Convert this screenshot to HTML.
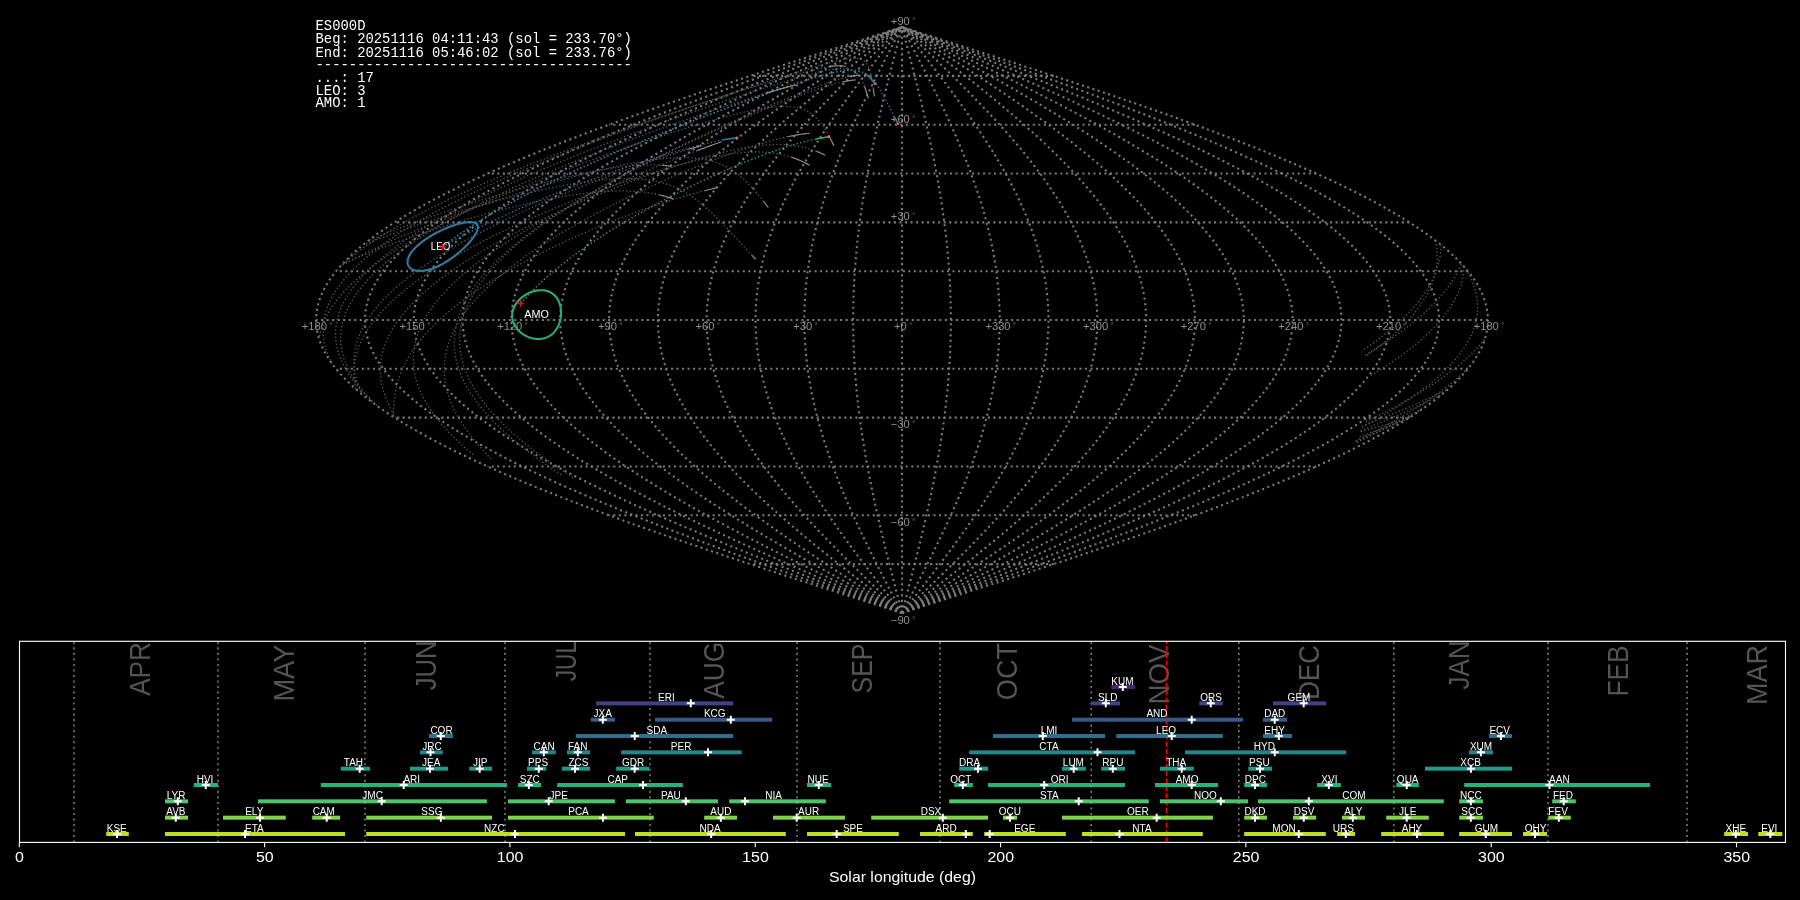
<!DOCTYPE html>
<html><head><meta charset="utf-8"><style>
html,body{margin:0;padding:0;background:#000;width:1800px;height:900px;overflow:hidden}
svg{display:block}
</style></head><body>
<div style="will-change:transform;width:1800px;height:900px"><svg width="1800" height="900" viewBox="0 0 1800 900">
<rect width="1800" height="900" fill="#000"/>
<g fill="none" stroke="#7a7a7a" stroke-width="2.08" stroke-dasharray="2.08 3.44">
<path d="M1053.64 564.12 L1051.11 564.12 L1048.59 564.12 L1046.06 564.12 L1043.53 564.12 L1041.01 564.12 L1038.48 564.12 L1035.95 564.12 L1033.42 564.12 L1030.9 564.12 L1028.37 564.12 L1025.84 564.12 L1023.31 564.12 L1020.79 564.12 L1018.26 564.12 L1015.73 564.12 L1013.2 564.12 L1010.68 564.12 L1008.15 564.12 L1005.62 564.12 L1003.09 564.12 L1000.57 564.12 L998.04 564.12 L995.51 564.12 L992.99 564.12 L990.46 564.12 L987.93 564.12 L985.4 564.12 L982.88 564.12 L980.35 564.12 L977.82 564.12 L975.29 564.12 L972.77 564.12 L970.24 564.12 L967.71 564.12 L965.18 564.12 L962.66 564.12 L960.13 564.12 L957.6 564.12 L955.07 564.12 L952.55 564.12 L950.02 564.12 L947.49 564.12 L944.97 564.12 L942.44 564.12 L939.91 564.12 L937.38 564.12 L934.86 564.12 L932.33 564.12 L929.8 564.12 L927.27 564.12 L924.75 564.12 L922.22 564.12 L919.69 564.12 L917.16 564.12 L914.64 564.12 L912.11 564.12 L909.58 564.12 L907.05 564.12 L904.53 564.12 L902 564.12 L899.47 564.12 L896.95 564.12 L894.42 564.12 L891.89 564.12 L889.36 564.12 L886.84 564.12 L884.31 564.12 L881.78 564.12 L879.25 564.12 L876.73 564.12 L874.2 564.12 L871.67 564.12 L869.14 564.12 L866.62 564.12 L864.09 564.12 L861.56 564.12 L859.03 564.12 L856.51 564.12 L853.98 564.12 L851.45 564.12 L848.93 564.12 L846.4 564.12 L843.87 564.12 L841.34 564.12 L838.82 564.12 L836.29 564.12 L833.76 564.12 L831.23 564.12 L828.71 564.12 L826.18 564.12 L823.65 564.12 L821.12 564.12 L818.6 564.12 L816.07 564.12 L813.54 564.12 L811.01 564.12 L808.49 564.12 L805.96 564.12 L803.43 564.12 L800.91 564.12 L798.38 564.12 L795.85 564.12 L793.32 564.12 L790.8 564.12 L788.27 564.12 L785.74 564.12 L783.21 564.12 L780.69 564.12 L778.16 564.12 L775.63 564.12 L773.1 564.12 L770.58 564.12 L768.05 564.12 L765.52 564.12 L762.99 564.12 L760.47 564.12 L757.94 564.12 L755.41 564.12 L752.89 564.12 L750.36 564.12"/>
<path d="M1194.95 515.3 L1190.07 515.3 L1185.18 515.3 L1180.3 515.3 L1175.42 515.3 L1170.54 515.3 L1165.65 515.3 L1160.77 515.3 L1155.89 515.3 L1151.01 515.3 L1146.12 515.3 L1141.24 515.3 L1136.36 515.3 L1131.48 515.3 L1126.6 515.3 L1121.71 515.3 L1116.83 515.3 L1111.95 515.3 L1107.07 515.3 L1102.18 515.3 L1097.3 515.3 L1092.42 515.3 L1087.54 515.3 L1082.65 515.3 L1077.77 515.3 L1072.89 515.3 L1068.01 515.3 L1063.12 515.3 L1058.24 515.3 L1053.36 515.3 L1048.47 515.3 L1043.59 515.3 L1038.71 515.3 L1033.83 515.3 L1028.94 515.3 L1024.06 515.3 L1019.18 515.3 L1014.3 515.3 L1009.41 515.3 L1004.53 515.3 L999.65 515.3 L994.77 515.3 L989.88 515.3 L985 515.3 L980.12 515.3 L975.24 515.3 L970.36 515.3 L965.47 515.3 L960.59 515.3 L955.71 515.3 L950.83 515.3 L945.94 515.3 L941.06 515.3 L936.18 515.3 L931.29 515.3 L926.41 515.3 L921.53 515.3 L916.65 515.3 L911.76 515.3 L906.88 515.3 L902 515.3 L897.12 515.3 L892.24 515.3 L887.35 515.3 L882.47 515.3 L877.59 515.3 L872.71 515.3 L867.82 515.3 L862.94 515.3 L858.06 515.3 L853.17 515.3 L848.29 515.3 L843.41 515.3 L838.53 515.3 L833.64 515.3 L828.76 515.3 L823.88 515.3 L819 515.3 L814.12 515.3 L809.23 515.3 L804.35 515.3 L799.47 515.3 L794.59 515.3 L789.7 515.3 L784.82 515.3 L779.94 515.3 L775.05 515.3 L770.17 515.3 L765.29 515.3 L760.41 515.3 L755.52 515.3 L750.64 515.3 L745.76 515.3 L740.88 515.3 L736 515.3 L731.11 515.3 L726.23 515.3 L721.35 515.3 L716.46 515.3 L711.58 515.3 L706.7 515.3 L701.82 515.3 L696.93 515.3 L692.05 515.3 L687.17 515.3 L682.29 515.3 L677.4 515.3 L672.52 515.3 L667.64 515.3 L662.76 515.3 L657.88 515.3 L652.99 515.3 L648.11 515.3 L643.23 515.3 L638.35 515.3 L633.46 515.3 L628.58 515.3 L623.7 515.3 L618.81 515.3 L613.93 515.3 L609.05 515.3"/>
<path d="M1316.29 466.48 L1309.39 466.48 L1302.48 466.48 L1295.58 466.48 L1288.67 466.48 L1281.77 466.48 L1274.86 466.48 L1267.96 466.48 L1261.05 466.48 L1254.15 466.48 L1247.24 466.48 L1240.34 466.48 L1233.44 466.48 L1226.53 466.48 L1219.63 466.48 L1212.72 466.48 L1205.82 466.48 L1198.91 466.48 L1192.01 466.48 L1185.1 466.48 L1178.2 466.48 L1171.29 466.48 L1164.39 466.48 L1157.48 466.48 L1150.58 466.48 L1143.67 466.48 L1136.77 466.48 L1129.86 466.48 L1122.96 466.48 L1116.05 466.48 L1109.15 466.48 L1102.24 466.48 L1095.34 466.48 L1088.43 466.48 L1081.53 466.48 L1074.62 466.48 L1067.72 466.48 L1060.81 466.48 L1053.91 466.48 L1047 466.48 L1040.1 466.48 L1033.19 466.48 L1026.29 466.48 L1019.38 466.48 L1012.48 466.48 L1005.57 466.48 L998.67 466.48 L991.76 466.48 L984.86 466.48 L977.95 466.48 L971.05 466.48 L964.14 466.48 L957.24 466.48 L950.33 466.48 L943.43 466.48 L936.52 466.48 L929.62 466.48 L922.71 466.48 L915.81 466.48 L908.9 466.48 L902 466.48 L895.1 466.48 L888.19 466.48 L881.29 466.48 L874.38 466.48 L867.48 466.48 L860.57 466.48 L853.67 466.48 L846.76 466.48 L839.86 466.48 L832.95 466.48 L826.05 466.48 L819.14 466.48 L812.24 466.48 L805.33 466.48 L798.43 466.48 L791.52 466.48 L784.62 466.48 L777.71 466.48 L770.81 466.48 L763.9 466.48 L757 466.48 L750.09 466.48 L743.19 466.48 L736.28 466.48 L729.38 466.48 L722.47 466.48 L715.57 466.48 L708.66 466.48 L701.76 466.48 L694.85 466.48 L687.95 466.48 L681.04 466.48 L674.14 466.48 L667.23 466.48 L660.33 466.48 L653.42 466.48 L646.52 466.48 L639.61 466.48 L632.71 466.48 L625.8 466.48 L618.9 466.48 L611.99 466.48 L605.09 466.48 L598.18 466.48 L591.28 466.48 L584.37 466.48 L577.47 466.48 L570.56 466.48 L563.66 466.48 L556.76 466.48 L549.85 466.48 L542.95 466.48 L536.04 466.48 L529.14 466.48 L522.23 466.48 L515.33 466.48 L508.42 466.48 L501.52 466.48 L494.61 466.48 L487.71 466.48"/>
<path d="M1409.4 417.65 L1400.95 417.65 L1392.49 417.65 L1384.03 417.65 L1375.58 417.65 L1367.12 417.65 L1358.66 417.65 L1350.21 417.65 L1341.75 417.65 L1333.29 417.65 L1324.84 417.65 L1316.38 417.65 L1307.92 417.65 L1299.47 417.65 L1291.01 417.65 L1282.55 417.65 L1274.1 417.65 L1265.64 417.65 L1257.18 417.65 L1248.73 417.65 L1240.27 417.65 L1231.81 417.65 L1223.36 417.65 L1214.9 417.65 L1206.44 417.65 L1197.99 417.65 L1189.53 417.65 L1181.07 417.65 L1172.62 417.65 L1164.16 417.65 L1155.7 417.65 L1147.25 417.65 L1138.79 417.65 L1130.33 417.65 L1121.88 417.65 L1113.42 417.65 L1104.96 417.65 L1096.5 417.65 L1088.05 417.65 L1079.59 417.65 L1071.13 417.65 L1062.68 417.65 L1054.22 417.65 L1045.76 417.65 L1037.31 417.65 L1028.85 417.65 L1020.39 417.65 L1011.94 417.65 L1003.48 417.65 L995.02 417.65 L986.57 417.65 L978.11 417.65 L969.65 417.65 L961.2 417.65 L952.74 417.65 L944.28 417.65 L935.83 417.65 L927.37 417.65 L918.91 417.65 L910.46 417.65 L902 417.65 L893.54 417.65 L885.09 417.65 L876.63 417.65 L868.17 417.65 L859.72 417.65 L851.26 417.65 L842.8 417.65 L834.35 417.65 L825.89 417.65 L817.43 417.65 L808.98 417.65 L800.52 417.65 L792.06 417.65 L783.61 417.65 L775.15 417.65 L766.69 417.65 L758.24 417.65 L749.78 417.65 L741.32 417.65 L732.87 417.65 L724.41 417.65 L715.95 417.65 L707.5 417.65 L699.04 417.65 L690.58 417.65 L682.12 417.65 L673.67 417.65 L665.21 417.65 L656.75 417.65 L648.3 417.65 L639.84 417.65 L631.38 417.65 L622.93 417.65 L614.47 417.65 L606.01 417.65 L597.56 417.65 L589.1 417.65 L580.64 417.65 L572.19 417.65 L563.73 417.65 L555.27 417.65 L546.82 417.65 L538.36 417.65 L529.9 417.65 L521.45 417.65 L512.99 417.65 L504.53 417.65 L496.08 417.65 L487.62 417.65 L479.16 417.65 L470.71 417.65 L462.25 417.65 L453.79 417.65 L445.34 417.65 L436.88 417.65 L428.42 417.65 L419.97 417.65 L411.51 417.65 L403.05 417.65 L394.6 417.65"/>
<path d="M1467.94 368.82 L1458.5 368.82 L1449.07 368.82 L1439.64 368.82 L1430.21 368.82 L1420.77 368.82 L1411.34 368.82 L1401.91 368.82 L1392.48 368.82 L1383.05 368.82 L1373.61 368.82 L1364.18 368.82 L1354.75 368.82 L1345.32 368.82 L1335.88 368.82 L1326.45 368.82 L1317.02 368.82 L1307.59 368.82 L1298.16 368.82 L1288.72 368.82 L1279.29 368.82 L1269.86 368.82 L1260.43 368.82 L1250.99 368.82 L1241.56 368.82 L1232.13 368.82 L1222.7 368.82 L1213.26 368.82 L1203.83 368.82 L1194.4 368.82 L1184.97 368.82 L1175.54 368.82 L1166.1 368.82 L1156.67 368.82 L1147.24 368.82 L1137.81 368.82 L1128.37 368.82 L1118.94 368.82 L1109.51 368.82 L1100.08 368.82 L1090.65 368.82 L1081.21 368.82 L1071.78 368.82 L1062.35 368.82 L1052.92 368.82 L1043.48 368.82 L1034.05 368.82 L1024.62 368.82 L1015.19 368.82 L1005.75 368.82 L996.32 368.82 L986.89 368.82 L977.46 368.82 L968.03 368.82 L958.59 368.82 L949.16 368.82 L939.73 368.82 L930.3 368.82 L920.86 368.82 L911.43 368.82 L902 368.82 L892.57 368.82 L883.14 368.82 L873.7 368.82 L864.27 368.82 L854.84 368.82 L845.41 368.82 L835.97 368.82 L826.54 368.82 L817.11 368.82 L807.68 368.82 L798.25 368.82 L788.81 368.82 L779.38 368.82 L769.95 368.82 L760.52 368.82 L751.08 368.82 L741.65 368.82 L732.22 368.82 L722.79 368.82 L713.35 368.82 L703.92 368.82 L694.49 368.82 L685.06 368.82 L675.63 368.82 L666.19 368.82 L656.76 368.82 L647.33 368.82 L637.9 368.82 L628.46 368.82 L619.03 368.82 L609.6 368.82 L600.17 368.82 L590.74 368.82 L581.3 368.82 L571.87 368.82 L562.44 368.82 L553.01 368.82 L543.57 368.82 L534.14 368.82 L524.71 368.82 L515.28 368.82 L505.84 368.82 L496.41 368.82 L486.98 368.82 L477.55 368.82 L468.12 368.82 L458.68 368.82 L449.25 368.82 L439.82 368.82 L430.39 368.82 L420.95 368.82 L411.52 368.82 L402.09 368.82 L392.66 368.82 L383.23 368.82 L373.79 368.82 L364.36 368.82 L354.93 368.82 L345.5 368.82 L336.06 368.82"/>
<path d="M1487.9 320 L1478.13 320 L1468.37 320 L1458.61 320 L1448.84 320 L1439.07 320 L1429.31 320 L1419.55 320 L1409.78 320 L1400.01 320 L1390.25 320 L1380.48 320 L1370.72 320 L1360.95 320 L1351.19 320 L1341.42 320 L1331.66 320 L1321.89 320 L1312.13 320 L1302.37 320 L1292.6 320 L1282.84 320 L1273.07 320 L1263.31 320 L1253.54 320 L1243.78 320 L1234.01 320 L1224.24 320 L1214.48 320 L1204.71 320 L1194.95 320 L1185.18 320 L1175.42 320 L1165.65 320 L1155.89 320 L1146.12 320 L1136.36 320 L1126.6 320 L1116.83 320 L1107.07 320 L1097.3 320 L1087.54 320 L1077.77 320 L1068.01 320 L1058.24 320 L1048.47 320 L1038.71 320 L1028.94 320 L1019.18 320 L1009.41 320 L999.65 320 L989.88 320 L980.12 320 L970.36 320 L960.59 320 L950.83 320 L941.06 320 L931.29 320 L921.53 320 L911.76 320 L902 320 L892.24 320 L882.47 320 L872.71 320 L862.94 320 L853.17 320 L843.41 320 L833.64 320 L823.88 320 L814.12 320 L804.35 320 L794.59 320 L784.82 320 L775.06 320 L765.29 320 L755.52 320 L745.76 320 L736 320 L726.23 320 L716.47 320 L706.7 320 L696.93 320 L687.17 320 L677.4 320 L667.64 320 L657.88 320 L648.11 320 L638.35 320 L628.58 320 L618.82 320 L609.05 320 L599.29 320 L589.52 320 L579.75 320 L569.99 320 L560.23 320 L550.46 320 L540.69 320 L530.93 320 L521.16 320 L511.4 320 L501.63 320 L491.87 320 L482.11 320 L472.34 320 L462.57 320 L452.81 320 L443.05 320 L433.28 320 L423.52 320 L413.75 320 L403.99 320 L394.22 320 L384.46 320 L374.69 320 L364.93 320 L355.16 320 L345.39 320 L335.63 320 L325.87 320 L316.1 320"/>
<path d="M1467.94 271.18 L1458.5 271.18 L1449.07 271.18 L1439.64 271.18 L1430.21 271.18 L1420.77 271.18 L1411.34 271.18 L1401.91 271.18 L1392.48 271.18 L1383.05 271.18 L1373.61 271.18 L1364.18 271.18 L1354.75 271.18 L1345.32 271.18 L1335.88 271.18 L1326.45 271.18 L1317.02 271.18 L1307.59 271.18 L1298.16 271.18 L1288.72 271.18 L1279.29 271.18 L1269.86 271.18 L1260.43 271.18 L1250.99 271.18 L1241.56 271.18 L1232.13 271.18 L1222.7 271.18 L1213.26 271.18 L1203.83 271.18 L1194.4 271.18 L1184.97 271.18 L1175.54 271.18 L1166.1 271.18 L1156.67 271.18 L1147.24 271.18 L1137.81 271.18 L1128.37 271.18 L1118.94 271.18 L1109.51 271.18 L1100.08 271.18 L1090.65 271.18 L1081.21 271.18 L1071.78 271.18 L1062.35 271.18 L1052.92 271.18 L1043.48 271.18 L1034.05 271.18 L1024.62 271.18 L1015.19 271.18 L1005.75 271.18 L996.32 271.18 L986.89 271.18 L977.46 271.18 L968.03 271.18 L958.59 271.18 L949.16 271.18 L939.73 271.18 L930.3 271.18 L920.86 271.18 L911.43 271.18 L902 271.18 L892.57 271.18 L883.14 271.18 L873.7 271.18 L864.27 271.18 L854.84 271.18 L845.41 271.18 L835.97 271.18 L826.54 271.18 L817.11 271.18 L807.68 271.18 L798.25 271.18 L788.81 271.18 L779.38 271.18 L769.95 271.18 L760.52 271.18 L751.08 271.18 L741.65 271.18 L732.22 271.18 L722.79 271.18 L713.35 271.18 L703.92 271.18 L694.49 271.18 L685.06 271.18 L675.63 271.18 L666.19 271.18 L656.76 271.18 L647.33 271.18 L637.9 271.18 L628.46 271.18 L619.03 271.18 L609.6 271.18 L600.17 271.18 L590.74 271.18 L581.3 271.18 L571.87 271.18 L562.44 271.18 L553.01 271.18 L543.57 271.18 L534.14 271.18 L524.71 271.18 L515.28 271.18 L505.84 271.18 L496.41 271.18 L486.98 271.18 L477.55 271.18 L468.12 271.18 L458.68 271.18 L449.25 271.18 L439.82 271.18 L430.39 271.18 L420.95 271.18 L411.52 271.18 L402.09 271.18 L392.66 271.18 L383.23 271.18 L373.79 271.18 L364.36 271.18 L354.93 271.18 L345.5 271.18 L336.06 271.18"/>
<path d="M1409.4 222.35 L1400.95 222.35 L1392.49 222.35 L1384.03 222.35 L1375.58 222.35 L1367.12 222.35 L1358.66 222.35 L1350.21 222.35 L1341.75 222.35 L1333.29 222.35 L1324.84 222.35 L1316.38 222.35 L1307.92 222.35 L1299.47 222.35 L1291.01 222.35 L1282.55 222.35 L1274.1 222.35 L1265.64 222.35 L1257.18 222.35 L1248.73 222.35 L1240.27 222.35 L1231.81 222.35 L1223.36 222.35 L1214.9 222.35 L1206.44 222.35 L1197.99 222.35 L1189.53 222.35 L1181.07 222.35 L1172.62 222.35 L1164.16 222.35 L1155.7 222.35 L1147.25 222.35 L1138.79 222.35 L1130.33 222.35 L1121.88 222.35 L1113.42 222.35 L1104.96 222.35 L1096.5 222.35 L1088.05 222.35 L1079.59 222.35 L1071.13 222.35 L1062.68 222.35 L1054.22 222.35 L1045.76 222.35 L1037.31 222.35 L1028.85 222.35 L1020.39 222.35 L1011.94 222.35 L1003.48 222.35 L995.02 222.35 L986.57 222.35 L978.11 222.35 L969.65 222.35 L961.2 222.35 L952.74 222.35 L944.28 222.35 L935.83 222.35 L927.37 222.35 L918.91 222.35 L910.46 222.35 L902 222.35 L893.54 222.35 L885.09 222.35 L876.63 222.35 L868.17 222.35 L859.72 222.35 L851.26 222.35 L842.8 222.35 L834.35 222.35 L825.89 222.35 L817.43 222.35 L808.98 222.35 L800.52 222.35 L792.06 222.35 L783.61 222.35 L775.15 222.35 L766.69 222.35 L758.24 222.35 L749.78 222.35 L741.32 222.35 L732.87 222.35 L724.41 222.35 L715.95 222.35 L707.5 222.35 L699.04 222.35 L690.58 222.35 L682.12 222.35 L673.67 222.35 L665.21 222.35 L656.75 222.35 L648.3 222.35 L639.84 222.35 L631.38 222.35 L622.93 222.35 L614.47 222.35 L606.01 222.35 L597.56 222.35 L589.1 222.35 L580.64 222.35 L572.19 222.35 L563.73 222.35 L555.27 222.35 L546.82 222.35 L538.36 222.35 L529.9 222.35 L521.45 222.35 L512.99 222.35 L504.53 222.35 L496.08 222.35 L487.62 222.35 L479.16 222.35 L470.71 222.35 L462.25 222.35 L453.79 222.35 L445.34 222.35 L436.88 222.35 L428.42 222.35 L419.97 222.35 L411.51 222.35 L403.05 222.35 L394.6 222.35"/>
<path d="M1316.29 173.53 L1309.39 173.53 L1302.48 173.53 L1295.58 173.53 L1288.67 173.53 L1281.77 173.53 L1274.86 173.53 L1267.96 173.53 L1261.05 173.53 L1254.15 173.53 L1247.24 173.53 L1240.34 173.53 L1233.44 173.53 L1226.53 173.53 L1219.63 173.53 L1212.72 173.53 L1205.82 173.53 L1198.91 173.53 L1192.01 173.53 L1185.1 173.53 L1178.2 173.53 L1171.29 173.53 L1164.39 173.53 L1157.48 173.53 L1150.58 173.53 L1143.67 173.53 L1136.77 173.53 L1129.86 173.53 L1122.96 173.53 L1116.05 173.53 L1109.15 173.53 L1102.24 173.53 L1095.34 173.53 L1088.43 173.53 L1081.53 173.53 L1074.62 173.53 L1067.72 173.53 L1060.81 173.53 L1053.91 173.53 L1047 173.53 L1040.1 173.53 L1033.19 173.53 L1026.29 173.53 L1019.38 173.53 L1012.48 173.53 L1005.57 173.53 L998.67 173.53 L991.76 173.53 L984.86 173.53 L977.95 173.53 L971.05 173.53 L964.14 173.53 L957.24 173.53 L950.33 173.53 L943.43 173.53 L936.52 173.53 L929.62 173.53 L922.71 173.53 L915.81 173.53 L908.9 173.53 L902 173.53 L895.1 173.53 L888.19 173.53 L881.29 173.53 L874.38 173.53 L867.48 173.53 L860.57 173.53 L853.67 173.53 L846.76 173.53 L839.86 173.53 L832.95 173.53 L826.05 173.53 L819.14 173.53 L812.24 173.53 L805.33 173.53 L798.43 173.53 L791.52 173.53 L784.62 173.53 L777.71 173.53 L770.81 173.53 L763.9 173.53 L757 173.53 L750.09 173.53 L743.19 173.53 L736.28 173.53 L729.38 173.53 L722.47 173.53 L715.57 173.53 L708.66 173.53 L701.76 173.53 L694.85 173.53 L687.95 173.53 L681.04 173.53 L674.14 173.53 L667.23 173.53 L660.33 173.53 L653.42 173.53 L646.52 173.53 L639.61 173.53 L632.71 173.53 L625.8 173.53 L618.9 173.53 L611.99 173.53 L605.09 173.53 L598.18 173.53 L591.28 173.53 L584.37 173.53 L577.47 173.53 L570.56 173.53 L563.66 173.53 L556.76 173.53 L549.85 173.53 L542.95 173.53 L536.04 173.53 L529.14 173.53 L522.23 173.53 L515.33 173.53 L508.42 173.53 L501.52 173.53 L494.61 173.53 L487.71 173.53"/>
<path d="M1194.95 124.7 L1190.07 124.7 L1185.18 124.7 L1180.3 124.7 L1175.42 124.7 L1170.54 124.7 L1165.65 124.7 L1160.77 124.7 L1155.89 124.7 L1151.01 124.7 L1146.12 124.7 L1141.24 124.7 L1136.36 124.7 L1131.48 124.7 L1126.6 124.7 L1121.71 124.7 L1116.83 124.7 L1111.95 124.7 L1107.07 124.7 L1102.18 124.7 L1097.3 124.7 L1092.42 124.7 L1087.54 124.7 L1082.65 124.7 L1077.77 124.7 L1072.89 124.7 L1068.01 124.7 L1063.12 124.7 L1058.24 124.7 L1053.36 124.7 L1048.47 124.7 L1043.59 124.7 L1038.71 124.7 L1033.83 124.7 L1028.94 124.7 L1024.06 124.7 L1019.18 124.7 L1014.3 124.7 L1009.41 124.7 L1004.53 124.7 L999.65 124.7 L994.77 124.7 L989.88 124.7 L985 124.7 L980.12 124.7 L975.24 124.7 L970.36 124.7 L965.47 124.7 L960.59 124.7 L955.71 124.7 L950.83 124.7 L945.94 124.7 L941.06 124.7 L936.18 124.7 L931.29 124.7 L926.41 124.7 L921.53 124.7 L916.65 124.7 L911.76 124.7 L906.88 124.7 L902 124.7 L897.12 124.7 L892.24 124.7 L887.35 124.7 L882.47 124.7 L877.59 124.7 L872.71 124.7 L867.82 124.7 L862.94 124.7 L858.06 124.7 L853.17 124.7 L848.29 124.7 L843.41 124.7 L838.53 124.7 L833.64 124.7 L828.76 124.7 L823.88 124.7 L819 124.7 L814.12 124.7 L809.23 124.7 L804.35 124.7 L799.47 124.7 L794.59 124.7 L789.7 124.7 L784.82 124.7 L779.94 124.7 L775.05 124.7 L770.17 124.7 L765.29 124.7 L760.41 124.7 L755.52 124.7 L750.64 124.7 L745.76 124.7 L740.88 124.7 L736 124.7 L731.11 124.7 L726.23 124.7 L721.35 124.7 L716.46 124.7 L711.58 124.7 L706.7 124.7 L701.82 124.7 L696.93 124.7 L692.05 124.7 L687.17 124.7 L682.29 124.7 L677.4 124.7 L672.52 124.7 L667.64 124.7 L662.76 124.7 L657.88 124.7 L652.99 124.7 L648.11 124.7 L643.23 124.7 L638.35 124.7 L633.46 124.7 L628.58 124.7 L623.7 124.7 L618.81 124.7 L613.93 124.7 L609.05 124.7"/>
<path d="M1053.64 75.88 L1051.11 75.88 L1048.59 75.88 L1046.06 75.88 L1043.53 75.88 L1041.01 75.88 L1038.48 75.88 L1035.95 75.88 L1033.42 75.88 L1030.9 75.88 L1028.37 75.88 L1025.84 75.88 L1023.31 75.88 L1020.79 75.88 L1018.26 75.88 L1015.73 75.88 L1013.2 75.88 L1010.68 75.88 L1008.15 75.88 L1005.62 75.88 L1003.09 75.88 L1000.57 75.88 L998.04 75.88 L995.51 75.88 L992.99 75.88 L990.46 75.88 L987.93 75.88 L985.4 75.88 L982.88 75.88 L980.35 75.88 L977.82 75.88 L975.29 75.88 L972.77 75.88 L970.24 75.88 L967.71 75.88 L965.18 75.88 L962.66 75.88 L960.13 75.88 L957.6 75.88 L955.07 75.88 L952.55 75.88 L950.02 75.88 L947.49 75.88 L944.97 75.88 L942.44 75.88 L939.91 75.88 L937.38 75.88 L934.86 75.88 L932.33 75.88 L929.8 75.88 L927.27 75.88 L924.75 75.88 L922.22 75.88 L919.69 75.88 L917.16 75.88 L914.64 75.88 L912.11 75.88 L909.58 75.88 L907.05 75.88 L904.53 75.88 L902 75.88 L899.47 75.88 L896.95 75.88 L894.42 75.88 L891.89 75.88 L889.36 75.88 L886.84 75.88 L884.31 75.88 L881.78 75.88 L879.25 75.88 L876.73 75.88 L874.2 75.88 L871.67 75.88 L869.14 75.88 L866.62 75.88 L864.09 75.88 L861.56 75.88 L859.03 75.88 L856.51 75.88 L853.98 75.88 L851.45 75.88 L848.93 75.88 L846.4 75.88 L843.87 75.88 L841.34 75.88 L838.82 75.88 L836.29 75.88 L833.76 75.88 L831.23 75.88 L828.71 75.88 L826.18 75.88 L823.65 75.88 L821.12 75.88 L818.6 75.88 L816.07 75.88 L813.54 75.88 L811.01 75.88 L808.49 75.88 L805.96 75.88 L803.43 75.88 L800.91 75.88 L798.38 75.88 L795.85 75.88 L793.32 75.88 L790.8 75.88 L788.27 75.88 L785.74 75.88 L783.21 75.88 L780.69 75.88 L778.16 75.88 L775.63 75.88 L773.1 75.88 L770.58 75.88 L768.05 75.88 L765.52 75.88 L762.99 75.88 L760.47 75.88 L757.94 75.88 L755.41 75.88 L752.89 75.88 L750.36 75.88"/>
<path d="M902 612.95 L912.23 609.69 L922.45 606.44 L932.66 603.18 L942.87 599.93 L953.06 596.67 L963.24 593.42 L973.4 590.16 L983.54 586.91 L993.65 583.65 L1003.74 580.4 L1013.79 577.14 L1023.82 573.89 L1033.8 570.63 L1043.74 567.38 L1053.64 564.12 L1063.5 560.87 L1073.3 557.62 L1083.05 554.36 L1092.75 551.11 L1102.39 547.85 L1111.97 544.6 L1121.48 541.34 L1130.93 538.09 L1140.31 534.83 L1149.61 531.58 L1158.84 528.32 L1167.99 525.07 L1177.06 521.81 L1186.05 518.56 L1194.95 515.3 L1203.76 512.04 L1212.48 508.79 L1221.1 505.53 L1229.63 502.28 L1238.06 499.02 L1246.38 495.77 L1254.6 492.51 L1262.72 489.26 L1270.72 486 L1278.61 482.75 L1286.38 479.5 L1294.04 476.24 L1301.58 472.99 L1309 469.73 L1316.29 466.48 L1323.46 463.22 L1330.5 459.97 L1337.41 456.71 L1344.18 453.45 L1350.83 450.2 L1357.33 446.94 L1363.7 443.69 L1369.92 440.44 L1376 437.18 L1381.94 433.93 L1387.73 430.67 L1393.38 427.41 L1398.87 424.16 L1404.21 420.9 L1409.4 417.65 L1414.44 414.39 L1419.32 411.14 L1424.04 407.88 L1428.6 404.63 L1433.01 401.38 L1437.25 398.12 L1441.32 394.87 L1445.24 391.61 L1448.98 388.36 L1452.57 385.1 L1455.98 381.85 L1459.22 378.59 L1462.3 375.33 L1465.2 372.08 L1467.94 368.82 L1470.5 365.57 L1472.88 362.31 L1475.1 359.06 L1477.14 355.81 L1479 352.55 L1480.69 349.3 L1482.2 346.04 L1483.53 342.79 L1484.69 339.53 L1485.67 336.27 L1486.47 333.02 L1487.1 329.76 L1487.54 326.51 L1487.81 323.25 L1487.9 320 L1487.81 316.75 L1487.54 313.49 L1487.1 310.24 L1486.47 306.98 L1485.67 303.73 L1484.69 300.47 L1483.53 297.21 L1482.2 293.96 L1480.69 290.7 L1479 287.45 L1477.14 284.19 L1475.1 280.94 L1472.88 277.69 L1470.5 274.43 L1467.94 271.18 L1465.2 267.92 L1462.3 264.67 L1459.22 261.41 L1455.98 258.15 L1452.57 254.9 L1448.98 251.64 L1445.24 248.39 L1441.32 245.13 L1437.25 241.88 L1433.01 238.62 L1428.6 235.37 L1424.04 232.12 L1419.32 228.86 L1414.44 225.61 L1409.4 222.35 L1404.21 219.09 L1398.87 215.84 L1393.38 212.59 L1387.73 209.33 L1381.94 206.07 L1376 202.82 L1369.92 199.56 L1363.7 196.31 L1357.33 193.06 L1350.83 189.8 L1344.18 186.55 L1337.41 183.29 L1330.5 180.03 L1323.46 176.78 L1316.29 173.53 L1309 170.27 L1301.58 167.02 L1294.04 163.76 L1286.38 160.5 L1278.61 157.25 L1270.72 154 L1262.72 150.74 L1254.6 147.49 L1246.38 144.23 L1238.06 140.97 L1229.63 137.72 L1221.1 134.47 L1212.48 131.21 L1203.76 127.96 L1194.95 124.7 L1186.05 121.44 L1177.06 118.19 L1167.99 114.94 L1158.84 111.68 L1149.61 108.43 L1140.31 105.17 L1130.93 101.92 L1121.48 98.66 L1111.97 95.41 L1102.39 92.15 L1092.75 88.9 L1083.05 85.64 L1073.3 82.39 L1063.5 79.13 L1053.64 75.88 L1043.74 72.62 L1033.8 69.37 L1023.82 66.11 L1013.79 62.86 L1003.74 59.6 L993.65 56.35 L983.54 53.09 L973.4 49.84 L963.24 46.58 L953.06 43.32 L942.87 40.07 L932.66 36.81 L922.45 33.56 L912.23 30.31 L902 27.05"/>
<path d="M902 612.95 L911.37 609.69 L920.74 606.44 L930.11 603.18 L939.46 599.93 L948.81 596.67 L958.14 593.42 L967.45 590.16 L976.75 586.91 L986.02 583.65 L995.26 580.4 L1004.48 577.14 L1013.66 573.89 L1022.82 570.63 L1031.93 567.38 L1041.01 564.12 L1050.04 560.87 L1059.03 557.62 L1067.97 554.36 L1076.85 551.11 L1085.69 547.85 L1094.47 544.6 L1103.19 541.34 L1111.85 538.09 L1120.45 534.83 L1128.98 531.58 L1137.44 528.32 L1145.83 525.07 L1154.14 521.81 L1162.38 518.56 L1170.54 515.3 L1178.61 512.04 L1186.61 508.79 L1194.51 505.53 L1202.33 502.28 L1210.05 499.02 L1217.68 495.77 L1225.22 492.51 L1232.66 489.26 L1239.99 486 L1247.23 482.75 L1254.35 479.5 L1261.37 476.24 L1268.28 472.99 L1275.08 469.73 L1281.77 466.48 L1288.34 463.22 L1294.79 459.97 L1301.12 456.71 L1307.34 453.45 L1313.42 450.2 L1319.39 446.94 L1325.22 443.69 L1330.93 440.44 L1336.5 437.18 L1341.95 433.93 L1347.26 430.67 L1352.43 427.41 L1357.47 424.16 L1362.36 420.9 L1367.12 417.65 L1371.74 414.39 L1376.21 411.14 L1380.54 407.88 L1384.72 404.63 L1388.76 401.38 L1392.64 398.12 L1396.38 394.87 L1399.97 391.61 L1403.4 388.36 L1406.69 385.1 L1409.81 381.85 L1412.79 378.59 L1415.61 375.33 L1418.27 372.08 L1420.77 368.82 L1423.12 365.57 L1425.31 362.31 L1427.34 359.06 L1429.21 355.81 L1430.92 352.55 L1432.46 349.3 L1433.85 346.04 L1435.07 342.79 L1436.13 339.53 L1437.03 336.27 L1437.77 333.02 L1438.34 329.76 L1438.75 326.51 L1438.99 323.25 L1439.07 320 L1438.99 316.75 L1438.75 313.49 L1438.34 310.24 L1437.77 306.98 L1437.03 303.73 L1436.13 300.47 L1435.07 297.21 L1433.85 293.96 L1432.46 290.7 L1430.92 287.45 L1429.21 284.19 L1427.34 280.94 L1425.31 277.69 L1423.12 274.43 L1420.77 271.18 L1418.27 267.92 L1415.61 264.67 L1412.79 261.41 L1409.81 258.15 L1406.69 254.9 L1403.4 251.64 L1399.97 248.39 L1396.38 245.13 L1392.64 241.88 L1388.76 238.62 L1384.72 235.37 L1380.54 232.12 L1376.21 228.86 L1371.74 225.61 L1367.12 222.35 L1362.36 219.09 L1357.47 215.84 L1352.43 212.59 L1347.26 209.33 L1341.95 206.07 L1336.5 202.82 L1330.93 199.56 L1325.22 196.31 L1319.39 193.06 L1313.42 189.8 L1307.34 186.55 L1301.12 183.29 L1294.79 180.03 L1288.34 176.78 L1281.77 173.53 L1275.08 170.27 L1268.28 167.02 L1261.37 163.76 L1254.35 160.5 L1247.23 157.25 L1239.99 154 L1232.66 150.74 L1225.22 147.49 L1217.68 144.23 L1210.05 140.97 L1202.33 137.72 L1194.51 134.47 L1186.61 131.21 L1178.61 127.96 L1170.54 124.7 L1162.38 121.44 L1154.14 118.19 L1145.83 114.94 L1137.44 111.68 L1128.98 108.43 L1120.45 105.17 L1111.85 101.92 L1103.19 98.66 L1094.47 95.41 L1085.69 92.15 L1076.85 88.9 L1067.97 85.64 L1059.03 82.39 L1050.04 79.13 L1041.01 75.88 L1031.93 72.62 L1022.82 69.37 L1013.66 66.11 L1004.48 62.86 L995.26 59.6 L986.02 56.35 L976.75 53.09 L967.45 49.84 L958.14 46.58 L948.81 43.32 L939.46 40.07 L930.11 36.81 L920.74 33.56 L911.37 30.31 L902 27.05"/>
<path d="M902 612.95 L910.52 609.69 L919.04 606.44 L927.55 603.18 L936.06 599.93 L944.55 596.67 L953.04 593.42 L961.5 590.16 L969.95 586.91 L978.38 583.65 L986.78 580.4 L995.16 577.14 L1003.51 573.89 L1011.83 570.63 L1020.12 567.38 L1028.37 564.12 L1036.58 560.87 L1044.75 557.62 L1052.88 554.36 L1060.96 551.11 L1068.99 547.85 L1076.97 544.6 L1084.9 541.34 L1092.77 538.09 L1100.59 534.83 L1108.34 531.58 L1116.03 528.32 L1123.66 525.07 L1131.22 521.81 L1138.71 518.56 L1146.12 515.3 L1153.47 512.04 L1160.73 508.79 L1167.92 505.53 L1175.03 502.28 L1182.05 499.02 L1188.99 495.77 L1195.84 492.51 L1202.6 489.26 L1209.27 486 L1215.84 482.75 L1222.32 479.5 L1228.7 476.24 L1234.99 472.99 L1241.17 469.73 L1247.24 466.48 L1253.22 463.22 L1259.08 459.97 L1264.84 456.71 L1270.49 453.45 L1276.02 450.2 L1281.44 446.94 L1286.75 443.69 L1291.93 440.44 L1297 437.18 L1301.95 433.93 L1306.78 430.67 L1311.48 427.41 L1316.06 424.16 L1320.51 420.9 L1324.84 417.65 L1329.03 414.39 L1333.1 411.14 L1337.03 407.88 L1340.84 404.63 L1344.5 401.38 L1348.04 398.12 L1351.44 394.87 L1354.7 391.61 L1357.82 388.36 L1360.8 385.1 L1363.65 381.85 L1366.35 378.59 L1368.92 375.33 L1371.34 372.08 L1373.61 368.82 L1375.75 365.57 L1377.74 362.31 L1379.58 359.06 L1381.28 355.81 L1382.83 352.55 L1384.24 349.3 L1385.5 346.04 L1386.61 342.79 L1387.58 339.53 L1388.39 336.27 L1389.06 333.02 L1389.58 329.76 L1389.95 326.51 L1390.18 323.25 L1390.25 320 L1390.18 316.75 L1389.95 313.49 L1389.58 310.24 L1389.06 306.98 L1388.39 303.73 L1387.58 300.47 L1386.61 297.21 L1385.5 293.96 L1384.24 290.7 L1382.83 287.45 L1381.28 284.19 L1379.58 280.94 L1377.74 277.69 L1375.75 274.43 L1373.61 271.18 L1371.34 267.92 L1368.92 264.67 L1366.35 261.41 L1363.65 258.15 L1360.8 254.9 L1357.82 251.64 L1354.7 248.39 L1351.44 245.13 L1348.04 241.88 L1344.5 238.62 L1340.84 235.37 L1337.03 232.12 L1333.1 228.86 L1329.03 225.61 L1324.84 222.35 L1320.51 219.09 L1316.06 215.84 L1311.48 212.59 L1306.78 209.33 L1301.95 206.07 L1297 202.82 L1291.93 199.56 L1286.75 196.31 L1281.44 193.06 L1276.02 189.8 L1270.49 186.55 L1264.84 183.29 L1259.08 180.03 L1253.22 176.78 L1247.24 173.53 L1241.17 170.27 L1234.99 167.02 L1228.7 163.76 L1222.32 160.5 L1215.84 157.25 L1209.27 154 L1202.6 150.74 L1195.84 147.49 L1188.99 144.23 L1182.05 140.97 L1175.03 137.72 L1167.92 134.47 L1160.73 131.21 L1153.47 127.96 L1146.12 124.7 L1138.71 121.44 L1131.22 118.19 L1123.66 114.94 L1116.03 111.68 L1108.34 108.43 L1100.59 105.17 L1092.77 101.92 L1084.9 98.66 L1076.97 95.41 L1068.99 92.15 L1060.96 88.9 L1052.88 85.64 L1044.75 82.39 L1036.58 79.13 L1028.37 75.88 L1020.12 72.62 L1011.83 69.37 L1003.51 66.11 L995.16 62.86 L986.78 59.6 L978.38 56.35 L969.95 53.09 L961.5 49.84 L953.04 46.58 L944.55 43.32 L936.06 40.07 L927.55 36.81 L919.04 33.56 L910.52 30.31 L902 27.05"/>
<path d="M902 612.95 L909.67 609.69 L917.34 606.44 L925 603.18 L932.65 599.93 L940.3 596.67 L947.93 593.42 L955.55 590.16 L963.16 586.91 L970.74 583.65 L978.31 580.4 L985.85 577.14 L993.36 573.89 L1000.85 570.63 L1008.31 567.38 L1015.73 564.12 L1023.12 560.87 L1030.48 557.62 L1037.79 554.36 L1045.06 551.11 L1052.29 547.85 L1059.48 544.6 L1066.61 541.34 L1073.7 538.09 L1080.73 534.83 L1087.71 531.58 L1094.63 528.32 L1101.49 525.07 L1108.3 521.81 L1115.04 518.56 L1121.71 515.3 L1128.32 512.04 L1134.86 508.79 L1141.33 505.53 L1147.72 502.28 L1154.04 499.02 L1160.29 495.77 L1166.45 492.51 L1172.54 489.26 L1178.54 486 L1184.46 482.75 L1190.29 479.5 L1196.03 476.24 L1201.69 472.99 L1207.25 469.73 L1212.72 466.48 L1218.1 463.22 L1223.38 459.97 L1228.56 456.71 L1233.64 453.45 L1238.62 450.2 L1243.5 446.94 L1248.27 443.69 L1252.94 440.44 L1257.5 437.18 L1261.96 433.93 L1266.3 430.67 L1270.53 427.41 L1274.65 424.16 L1278.66 420.9 L1282.55 417.65 L1286.33 414.39 L1289.99 411.14 L1293.53 407.88 L1296.95 404.63 L1300.25 401.38 L1303.43 398.12 L1306.49 394.87 L1309.43 391.61 L1312.24 388.36 L1314.92 385.1 L1317.48 381.85 L1319.92 378.59 L1322.22 375.33 L1324.4 372.08 L1326.45 368.82 L1328.37 365.57 L1330.16 362.31 L1331.82 359.06 L1333.35 355.81 L1334.75 352.55 L1336.01 349.3 L1337.15 346.04 L1338.15 342.79 L1339.02 339.53 L1339.75 336.27 L1340.35 333.02 L1340.82 329.76 L1341.16 326.51 L1341.36 323.25 L1341.42 320 L1341.36 316.75 L1341.16 313.49 L1340.82 310.24 L1340.35 306.98 L1339.75 303.73 L1339.02 300.47 L1338.15 297.21 L1337.15 293.96 L1336.01 290.7 L1334.75 287.45 L1333.35 284.19 L1331.82 280.94 L1330.16 277.69 L1328.37 274.43 L1326.45 271.18 L1324.4 267.92 L1322.22 264.67 L1319.92 261.41 L1317.48 258.15 L1314.92 254.9 L1312.24 251.64 L1309.43 248.39 L1306.49 245.13 L1303.43 241.88 L1300.25 238.62 L1296.95 235.37 L1293.53 232.12 L1289.99 228.86 L1286.33 225.61 L1282.55 222.35 L1278.66 219.09 L1274.65 215.84 L1270.53 212.59 L1266.3 209.33 L1261.96 206.07 L1257.5 202.82 L1252.94 199.56 L1248.27 196.31 L1243.5 193.06 L1238.62 189.8 L1233.64 186.55 L1228.56 183.29 L1223.38 180.03 L1218.1 176.78 L1212.72 173.53 L1207.25 170.27 L1201.69 167.02 L1196.03 163.76 L1190.29 160.5 L1184.46 157.25 L1178.54 154 L1172.54 150.74 L1166.45 147.49 L1160.29 144.23 L1154.04 140.97 L1147.72 137.72 L1141.33 134.47 L1134.86 131.21 L1128.32 127.96 L1121.71 124.7 L1115.04 121.44 L1108.3 118.19 L1101.49 114.94 L1094.63 111.68 L1087.71 108.43 L1080.73 105.17 L1073.7 101.92 L1066.61 98.66 L1059.48 95.41 L1052.29 92.15 L1045.06 88.9 L1037.79 85.64 L1030.48 82.39 L1023.12 79.13 L1015.73 75.88 L1008.31 72.62 L1000.85 69.37 L993.36 66.11 L985.85 62.86 L978.31 59.6 L970.74 56.35 L963.16 53.09 L955.55 49.84 L947.93 46.58 L940.3 43.32 L932.65 40.07 L925 36.81 L917.34 33.56 L909.67 30.31 L902 27.05"/>
<path d="M902 612.95 L908.82 609.69 L915.63 606.44 L922.44 603.18 L929.25 599.93 L936.04 596.67 L942.83 593.42 L949.6 590.16 L956.36 586.91 L963.1 583.65 L969.83 580.4 L976.53 577.14 L983.21 573.89 L989.87 570.63 L996.49 567.38 L1003.09 564.12 L1009.66 560.87 L1016.2 557.62 L1022.7 554.36 L1029.17 551.11 L1035.59 547.85 L1041.98 544.6 L1048.32 541.34 L1054.62 538.09 L1060.87 534.83 L1067.07 531.58 L1073.23 528.32 L1079.33 525.07 L1085.38 521.81 L1091.37 518.56 L1097.3 515.3 L1103.17 512.04 L1108.99 508.79 L1114.74 505.53 L1120.42 502.28 L1126.04 499.02 L1131.59 495.77 L1137.07 492.51 L1142.48 489.26 L1147.81 486 L1153.07 482.75 L1158.26 479.5 L1163.36 476.24 L1168.39 472.99 L1173.33 469.73 L1178.2 466.48 L1182.97 463.22 L1187.67 459.97 L1192.27 456.71 L1196.79 453.45 L1201.22 450.2 L1205.55 446.94 L1209.8 443.69 L1213.95 440.44 L1218 437.18 L1221.96 433.93 L1225.82 430.67 L1229.58 427.41 L1233.25 424.16 L1236.81 420.9 L1240.27 417.65 L1243.63 414.39 L1246.88 411.14 L1250.03 407.88 L1253.07 404.63 L1256 401.38 L1258.83 398.12 L1261.55 394.87 L1264.16 391.61 L1266.66 388.36 L1269.04 385.1 L1271.32 381.85 L1273.48 378.59 L1275.53 375.33 L1277.47 372.08 L1279.29 368.82 L1281 365.57 L1282.59 362.31 L1284.06 359.06 L1285.42 355.81 L1286.67 352.55 L1287.79 349.3 L1288.8 346.04 L1289.69 342.79 L1290.46 339.53 L1291.11 336.27 L1291.65 333.02 L1292.06 329.76 L1292.36 326.51 L1292.54 323.25 L1292.6 320 L1292.54 316.75 L1292.36 313.49 L1292.06 310.24 L1291.65 306.98 L1291.11 303.73 L1290.46 300.47 L1289.69 297.21 L1288.8 293.96 L1287.79 290.7 L1286.67 287.45 L1285.42 284.19 L1284.06 280.94 L1282.59 277.69 L1281 274.43 L1279.29 271.18 L1277.47 267.92 L1275.53 264.67 L1273.48 261.41 L1271.32 258.15 L1269.04 254.9 L1266.66 251.64 L1264.16 248.39 L1261.55 245.13 L1258.83 241.88 L1256 238.62 L1253.07 235.37 L1250.03 232.12 L1246.88 228.86 L1243.63 225.61 L1240.27 222.35 L1236.81 219.09 L1233.25 215.84 L1229.58 212.59 L1225.82 209.33 L1221.96 206.07 L1218 202.82 L1213.95 199.56 L1209.8 196.31 L1205.55 193.06 L1201.22 189.8 L1196.79 186.55 L1192.27 183.29 L1187.67 180.03 L1182.97 176.78 L1178.2 173.53 L1173.33 170.27 L1168.39 167.02 L1163.36 163.76 L1158.26 160.5 L1153.07 157.25 L1147.81 154 L1142.48 150.74 L1137.07 147.49 L1131.59 144.23 L1126.04 140.97 L1120.42 137.72 L1114.74 134.47 L1108.99 131.21 L1103.17 127.96 L1097.3 124.7 L1091.37 121.44 L1085.38 118.19 L1079.33 114.94 L1073.23 111.68 L1067.07 108.43 L1060.87 105.17 L1054.62 101.92 L1048.32 98.66 L1041.98 95.41 L1035.59 92.15 L1029.17 88.9 L1022.7 85.64 L1016.2 82.39 L1009.66 79.13 L1003.09 75.88 L996.49 72.62 L989.87 69.37 L983.21 66.11 L976.53 62.86 L969.83 59.6 L963.1 56.35 L956.36 53.09 L949.6 49.84 L942.83 46.58 L936.04 43.32 L929.25 40.07 L922.44 36.81 L915.63 33.56 L908.82 30.31 L902 27.05"/>
<path d="M902 612.95 L907.96 609.69 L913.93 606.44 L919.89 603.18 L925.84 599.93 L931.79 596.67 L937.73 593.42 L943.65 590.16 L949.57 586.91 L955.47 583.65 L961.35 580.4 L967.21 577.14 L973.06 573.89 L978.88 570.63 L984.68 567.38 L990.46 564.12 L996.21 560.87 L1001.93 557.62 L1007.61 554.36 L1013.27 551.11 L1018.89 547.85 L1024.48 544.6 L1030.03 541.34 L1035.54 538.09 L1041.01 534.83 L1046.44 531.58 L1051.82 528.32 L1057.16 525.07 L1062.45 521.81 L1067.7 518.56 L1072.89 515.3 L1078.03 512.04 L1083.11 508.79 L1088.14 505.53 L1093.12 502.28 L1098.03 499.02 L1102.89 495.77 L1107.69 492.51 L1112.42 489.26 L1117.09 486 L1121.69 482.75 L1126.22 479.5 L1130.69 476.24 L1135.09 472.99 L1139.42 469.73 L1143.67 466.48 L1147.85 463.22 L1151.96 459.97 L1155.99 456.71 L1159.94 453.45 L1163.81 450.2 L1167.61 446.94 L1171.32 443.69 L1174.95 440.44 L1178.5 437.18 L1181.97 433.93 L1185.34 430.67 L1188.64 427.41 L1191.84 424.16 L1194.96 420.9 L1197.99 417.65 L1200.92 414.39 L1203.77 411.14 L1206.52 407.88 L1209.19 404.63 L1211.75 401.38 L1214.23 398.12 L1216.61 394.87 L1218.89 391.61 L1221.07 388.36 L1223.16 385.1 L1225.15 381.85 L1227.05 378.59 L1228.84 375.33 L1230.54 372.08 L1232.13 368.82 L1233.62 365.57 L1235.02 362.31 L1236.31 359.06 L1237.5 355.81 L1238.58 352.55 L1239.57 349.3 L1240.45 346.04 L1241.23 342.79 L1241.9 339.53 L1242.47 336.27 L1242.94 333.02 L1243.31 329.76 L1243.57 326.51 L1243.72 323.25 L1243.78 320 L1243.72 316.75 L1243.57 313.49 L1243.31 310.24 L1242.94 306.98 L1242.47 303.73 L1241.9 300.47 L1241.23 297.21 L1240.45 293.96 L1239.57 290.7 L1238.58 287.45 L1237.5 284.19 L1236.31 280.94 L1235.02 277.69 L1233.62 274.43 L1232.13 271.18 L1230.54 267.92 L1228.84 264.67 L1227.05 261.41 L1225.15 258.15 L1223.16 254.9 L1221.07 251.64 L1218.89 248.39 L1216.61 245.13 L1214.23 241.88 L1211.75 238.62 L1209.19 235.37 L1206.52 232.12 L1203.77 228.86 L1200.92 225.61 L1197.99 222.35 L1194.96 219.09 L1191.84 215.84 L1188.64 212.59 L1185.34 209.33 L1181.97 206.07 L1178.5 202.82 L1174.95 199.56 L1171.32 196.31 L1167.61 193.06 L1163.81 189.8 L1159.94 186.55 L1155.99 183.29 L1151.96 180.03 L1147.85 176.78 L1143.67 173.53 L1139.42 170.27 L1135.09 167.02 L1130.69 163.76 L1126.22 160.5 L1121.69 157.25 L1117.09 154 L1112.42 150.74 L1107.69 147.49 L1102.89 144.23 L1098.03 140.97 L1093.12 137.72 L1088.14 134.47 L1083.11 131.21 L1078.03 127.96 L1072.89 124.7 L1067.7 121.44 L1062.45 118.19 L1057.16 114.94 L1051.82 111.68 L1046.44 108.43 L1041.01 105.17 L1035.54 101.92 L1030.03 98.66 L1024.48 95.41 L1018.89 92.15 L1013.27 88.9 L1007.61 85.64 L1001.93 82.39 L996.21 79.13 L990.46 75.88 L984.68 72.62 L978.88 69.37 L973.06 66.11 L967.21 62.86 L961.35 59.6 L955.47 56.35 L949.57 53.09 L943.65 49.84 L937.73 46.58 L931.79 43.32 L925.84 40.07 L919.89 36.81 L913.93 33.56 L907.96 30.31 L902 27.05"/>
<path d="M902 612.95 L907.11 609.69 L912.22 606.44 L917.33 603.18 L922.44 599.93 L927.53 596.67 L932.62 593.42 L937.7 590.16 L942.77 586.91 L947.83 583.65 L952.87 580.4 L957.9 577.14 L962.91 573.89 L967.9 570.63 L972.87 567.38 L977.82 564.12 L982.75 560.87 L987.65 557.62 L992.53 554.36 L997.38 551.11 L1002.19 547.85 L1006.98 544.6 L1011.74 541.34 L1016.46 538.09 L1021.15 534.83 L1025.81 531.58 L1030.42 528.32 L1035 525.07 L1039.53 521.81 L1044.02 518.56 L1048.47 515.3 L1052.88 512.04 L1057.24 508.79 L1061.55 505.53 L1065.82 502.28 L1070.03 499.02 L1074.19 495.77 L1078.3 492.51 L1082.36 489.26 L1086.36 486 L1090.3 482.75 L1094.19 479.5 L1098.02 476.24 L1101.79 472.99 L1105.5 469.73 L1109.15 466.48 L1112.73 463.22 L1116.25 459.97 L1119.7 456.71 L1123.09 453.45 L1126.41 450.2 L1129.66 446.94 L1132.85 443.69 L1135.96 440.44 L1139 437.18 L1141.97 433.93 L1144.87 430.67 L1147.69 427.41 L1150.44 424.16 L1153.11 420.9 L1155.7 417.65 L1158.22 414.39 L1160.66 411.14 L1163.02 407.88 L1165.3 404.63 L1167.5 401.38 L1169.62 398.12 L1171.66 394.87 L1173.62 391.61 L1175.49 388.36 L1177.28 385.1 L1178.99 381.85 L1180.61 378.59 L1182.15 375.33 L1183.6 372.08 L1184.97 368.82 L1186.25 365.57 L1187.44 362.31 L1188.55 359.06 L1189.57 355.81 L1190.5 352.55 L1191.34 349.3 L1192.1 346.04 L1192.77 342.79 L1193.35 339.53 L1193.84 336.27 L1194.24 333.02 L1194.55 329.76 L1194.77 326.51 L1194.91 323.25 L1194.95 320 L1194.91 316.75 L1194.77 313.49 L1194.55 310.24 L1194.24 306.98 L1193.84 303.73 L1193.35 300.47 L1192.77 297.21 L1192.1 293.96 L1191.34 290.7 L1190.5 287.45 L1189.57 284.19 L1188.55 280.94 L1187.44 277.69 L1186.25 274.43 L1184.97 271.18 L1183.6 267.92 L1182.15 264.67 L1180.61 261.41 L1178.99 258.15 L1177.28 254.9 L1175.49 251.64 L1173.62 248.39 L1171.66 245.13 L1169.62 241.88 L1167.5 238.62 L1165.3 235.37 L1163.02 232.12 L1160.66 228.86 L1158.22 225.61 L1155.7 222.35 L1153.11 219.09 L1150.44 215.84 L1147.69 212.59 L1144.87 209.33 L1141.97 206.07 L1139 202.82 L1135.96 199.56 L1132.85 196.31 L1129.66 193.06 L1126.41 189.8 L1123.09 186.55 L1119.7 183.29 L1116.25 180.03 L1112.73 176.78 L1109.15 173.53 L1105.5 170.27 L1101.79 167.02 L1098.02 163.76 L1094.19 160.5 L1090.3 157.25 L1086.36 154 L1082.36 150.74 L1078.3 147.49 L1074.19 144.23 L1070.03 140.97 L1065.82 137.72 L1061.55 134.47 L1057.24 131.21 L1052.88 127.96 L1048.47 124.7 L1044.02 121.44 L1039.53 118.19 L1035 114.94 L1030.42 111.68 L1025.81 108.43 L1021.15 105.17 L1016.46 101.92 L1011.74 98.66 L1006.98 95.41 L1002.19 92.15 L997.38 88.9 L992.53 85.64 L987.65 82.39 L982.75 79.13 L977.82 75.88 L972.87 72.62 L967.9 69.37 L962.91 66.11 L957.9 62.86 L952.87 59.6 L947.83 56.35 L942.77 53.09 L937.7 49.84 L932.62 46.58 L927.53 43.32 L922.44 40.07 L917.33 36.81 L912.22 33.56 L907.11 30.31 L902 27.05"/>
<path d="M902 612.95 L906.26 609.69 L910.52 606.44 L914.78 603.18 L919.03 599.93 L923.28 596.67 L927.52 593.42 L931.75 590.16 L935.98 586.91 L940.19 583.65 L944.39 580.4 L948.58 577.14 L952.76 573.89 L956.92 570.63 L961.06 567.38 L965.18 564.12 L969.29 560.87 L973.38 557.62 L977.44 554.36 L981.48 551.11 L985.5 547.85 L989.49 544.6 L993.45 541.34 L997.39 538.09 L1001.29 534.83 L1005.17 531.58 L1009.02 528.32 L1012.83 525.07 L1016.61 521.81 L1020.35 518.56 L1024.06 515.3 L1027.73 512.04 L1031.37 508.79 L1034.96 505.53 L1038.51 502.28 L1042.02 499.02 L1045.49 495.77 L1048.92 492.51 L1052.3 489.26 L1055.63 486 L1058.92 482.75 L1062.16 479.5 L1065.35 476.24 L1068.49 472.99 L1071.58 469.73 L1074.62 466.48 L1077.61 463.22 L1080.54 459.97 L1083.42 456.71 L1086.24 453.45 L1089.01 450.2 L1091.72 446.94 L1094.37 443.69 L1096.97 440.44 L1099.5 437.18 L1101.98 433.93 L1104.39 430.67 L1106.74 427.41 L1109.03 424.16 L1111.26 420.9 L1113.42 417.65 L1115.52 414.39 L1117.55 411.14 L1119.52 407.88 L1121.42 404.63 L1123.25 401.38 L1125.02 398.12 L1126.72 394.87 L1128.35 391.61 L1129.91 388.36 L1131.4 385.1 L1132.82 381.85 L1134.18 378.59 L1135.46 375.33 L1136.67 372.08 L1137.81 368.82 L1138.87 365.57 L1139.87 362.31 L1140.79 359.06 L1141.64 355.81 L1142.42 352.55 L1143.12 349.3 L1143.75 346.04 L1144.31 342.79 L1144.79 339.53 L1145.2 336.27 L1145.53 333.02 L1145.79 329.76 L1145.98 326.51 L1146.09 323.25 L1146.12 320 L1146.09 316.75 L1145.98 313.49 L1145.79 310.24 L1145.53 306.98 L1145.2 303.73 L1144.79 300.47 L1144.31 297.21 L1143.75 293.96 L1143.12 290.7 L1142.42 287.45 L1141.64 284.19 L1140.79 280.94 L1139.87 277.69 L1138.87 274.43 L1137.81 271.18 L1136.67 267.92 L1135.46 264.67 L1134.18 261.41 L1132.82 258.15 L1131.4 254.9 L1129.91 251.64 L1128.35 248.39 L1126.72 245.13 L1125.02 241.88 L1123.25 238.62 L1121.42 235.37 L1119.52 232.12 L1117.55 228.86 L1115.52 225.61 L1113.42 222.35 L1111.26 219.09 L1109.03 215.84 L1106.74 212.59 L1104.39 209.33 L1101.98 206.07 L1099.5 202.82 L1096.97 199.56 L1094.37 196.31 L1091.72 193.06 L1089.01 189.8 L1086.24 186.55 L1083.42 183.29 L1080.54 180.03 L1077.61 176.78 L1074.62 173.53 L1071.58 170.27 L1068.49 167.02 L1065.35 163.76 L1062.16 160.5 L1058.92 157.25 L1055.63 154 L1052.3 150.74 L1048.92 147.49 L1045.49 144.23 L1042.02 140.97 L1038.51 137.72 L1034.96 134.47 L1031.37 131.21 L1027.73 127.96 L1024.06 124.7 L1020.35 121.44 L1016.61 118.19 L1012.83 114.94 L1009.02 111.68 L1005.17 108.43 L1001.29 105.17 L997.39 101.92 L993.45 98.66 L989.49 95.41 L985.5 92.15 L981.48 88.9 L977.44 85.64 L973.38 82.39 L969.29 79.13 L965.18 75.88 L961.06 72.62 L956.92 69.37 L952.76 66.11 L948.58 62.86 L944.39 59.6 L940.19 56.35 L935.98 53.09 L931.75 49.84 L927.52 46.58 L923.28 43.32 L919.03 40.07 L914.78 36.81 L910.52 33.56 L906.26 30.31 L902 27.05"/>
<path d="M902 612.95 L905.41 609.69 L908.82 606.44 L912.22 603.18 L915.62 599.93 L919.02 596.67 L922.41 593.42 L925.8 590.16 L929.18 586.91 L932.55 583.65 L935.91 580.4 L939.26 577.14 L942.61 573.89 L945.93 570.63 L949.25 567.38 L952.55 564.12 L955.83 560.87 L959.1 557.62 L962.35 554.36 L965.58 551.11 L968.8 547.85 L971.99 544.6 L975.16 541.34 L978.31 538.09 L981.44 534.83 L984.54 531.58 L987.61 528.32 L990.66 525.07 L993.69 521.81 L996.68 518.56 L999.65 515.3 L1002.59 512.04 L1005.49 508.79 L1008.37 505.53 L1011.21 502.28 L1014.02 499.02 L1016.79 495.77 L1019.53 492.51 L1022.24 489.26 L1024.91 486 L1027.54 482.75 L1030.13 479.5 L1032.68 476.24 L1035.19 472.99 L1037.67 469.73 L1040.1 466.48 L1042.49 463.22 L1044.83 459.97 L1047.14 456.71 L1049.39 453.45 L1051.61 450.2 L1053.78 446.94 L1055.9 443.69 L1057.97 440.44 L1060 437.18 L1061.98 433.93 L1063.91 430.67 L1065.79 427.41 L1067.62 424.16 L1069.4 420.9 L1071.13 417.65 L1072.81 414.39 L1074.44 411.14 L1076.01 407.88 L1077.53 404.63 L1079 401.38 L1080.42 398.12 L1081.77 394.87 L1083.08 391.61 L1084.33 388.36 L1085.52 385.1 L1086.66 381.85 L1087.74 378.59 L1088.77 375.33 L1089.73 372.08 L1090.65 368.82 L1091.5 365.57 L1092.29 362.31 L1093.03 359.06 L1093.71 355.81 L1094.33 352.55 L1094.9 349.3 L1095.4 346.04 L1095.84 342.79 L1096.23 339.53 L1096.56 336.27 L1096.82 333.02 L1097.03 329.76 L1097.18 326.51 L1097.27 323.25 L1097.3 320 L1097.27 316.75 L1097.18 313.49 L1097.03 310.24 L1096.82 306.98 L1096.56 303.73 L1096.23 300.47 L1095.84 297.21 L1095.4 293.96 L1094.9 290.7 L1094.33 287.45 L1093.71 284.19 L1093.03 280.94 L1092.29 277.69 L1091.5 274.43 L1090.65 271.18 L1089.73 267.92 L1088.77 264.67 L1087.74 261.41 L1086.66 258.15 L1085.52 254.9 L1084.33 251.64 L1083.08 248.39 L1081.77 245.13 L1080.42 241.88 L1079 238.62 L1077.53 235.37 L1076.01 232.12 L1074.44 228.86 L1072.81 225.61 L1071.13 222.35 L1069.4 219.09 L1067.62 215.84 L1065.79 212.59 L1063.91 209.33 L1061.98 206.07 L1060 202.82 L1057.97 199.56 L1055.9 196.31 L1053.78 193.06 L1051.61 189.8 L1049.39 186.55 L1047.14 183.29 L1044.83 180.03 L1042.49 176.78 L1040.1 173.53 L1037.67 170.27 L1035.19 167.02 L1032.68 163.76 L1030.13 160.5 L1027.54 157.25 L1024.91 154 L1022.24 150.74 L1019.53 147.49 L1016.79 144.23 L1014.02 140.97 L1011.21 137.72 L1008.37 134.47 L1005.49 131.21 L1002.59 127.96 L999.65 124.7 L996.68 121.44 L993.69 118.19 L990.66 114.94 L987.61 111.68 L984.54 108.43 L981.44 105.17 L978.31 101.92 L975.16 98.66 L971.99 95.41 L968.8 92.15 L965.58 88.9 L962.35 85.64 L959.1 82.39 L955.83 79.13 L952.55 75.88 L949.25 72.62 L945.93 69.37 L942.61 66.11 L939.26 62.86 L935.91 59.6 L932.55 56.35 L929.18 53.09 L925.8 49.84 L922.41 46.58 L919.02 43.32 L915.62 40.07 L912.22 36.81 L908.82 33.56 L905.41 30.31 L902 27.05"/>
<path d="M902 612.95 L904.56 609.69 L907.11 606.44 L909.67 603.18 L912.22 599.93 L914.77 596.67 L917.31 593.42 L919.85 590.16 L922.39 586.91 L924.91 583.65 L927.44 580.4 L929.95 577.14 L932.45 573.89 L934.95 570.63 L937.44 567.38 L939.91 564.12 L942.37 560.87 L944.83 557.62 L947.26 554.36 L949.69 551.11 L952.1 547.85 L954.49 544.6 L956.87 541.34 L959.23 538.09 L961.58 534.83 L963.9 531.58 L966.21 528.32 L968.5 525.07 L970.77 521.81 L973.01 518.56 L975.24 515.3 L977.44 512.04 L979.62 508.79 L981.78 505.53 L983.91 502.28 L986.01 499.02 L988.1 495.77 L990.15 492.51 L992.18 489.26 L994.18 486 L996.15 482.75 L998.1 479.5 L1000.01 476.24 L1001.9 472.99 L1003.75 469.73 L1005.57 466.48 L1007.37 463.22 L1009.13 459.97 L1010.85 456.71 L1012.55 453.45 L1014.21 450.2 L1015.83 446.94 L1017.42 443.69 L1018.98 440.44 L1020.5 437.18 L1021.99 433.93 L1023.43 430.67 L1024.84 427.41 L1026.22 424.16 L1027.55 420.9 L1028.85 417.65 L1030.11 414.39 L1031.33 411.14 L1032.51 407.88 L1033.65 404.63 L1034.75 401.38 L1035.81 398.12 L1036.83 394.87 L1037.81 391.61 L1038.75 388.36 L1039.64 385.1 L1040.49 381.85 L1041.31 378.59 L1042.07 375.33 L1042.8 372.08 L1043.48 368.82 L1044.12 365.57 L1044.72 362.31 L1045.27 359.06 L1045.78 355.81 L1046.25 352.55 L1046.67 349.3 L1047.05 346.04 L1047.38 342.79 L1047.67 339.53 L1047.92 336.27 L1048.12 333.02 L1048.27 329.76 L1048.39 326.51 L1048.45 323.25 L1048.47 320 L1048.45 316.75 L1048.39 313.49 L1048.27 310.24 L1048.12 306.98 L1047.92 303.73 L1047.67 300.47 L1047.38 297.21 L1047.05 293.96 L1046.67 290.7 L1046.25 287.45 L1045.78 284.19 L1045.27 280.94 L1044.72 277.69 L1044.12 274.43 L1043.48 271.18 L1042.8 267.92 L1042.07 264.67 L1041.31 261.41 L1040.49 258.15 L1039.64 254.9 L1038.75 251.64 L1037.81 248.39 L1036.83 245.13 L1035.81 241.88 L1034.75 238.62 L1033.65 235.37 L1032.51 232.12 L1031.33 228.86 L1030.11 225.61 L1028.85 222.35 L1027.55 219.09 L1026.22 215.84 L1024.84 212.59 L1023.43 209.33 L1021.99 206.07 L1020.5 202.82 L1018.98 199.56 L1017.42 196.31 L1015.83 193.06 L1014.21 189.8 L1012.55 186.55 L1010.85 183.29 L1009.13 180.03 L1007.37 176.78 L1005.57 173.53 L1003.75 170.27 L1001.9 167.02 L1000.01 163.76 L998.1 160.5 L996.15 157.25 L994.18 154 L992.18 150.74 L990.15 147.49 L988.1 144.23 L986.01 140.97 L983.91 137.72 L981.78 134.47 L979.62 131.21 L977.44 127.96 L975.24 124.7 L973.01 121.44 L970.77 118.19 L968.5 114.94 L966.21 111.68 L963.9 108.43 L961.58 105.17 L959.23 101.92 L956.87 98.66 L954.49 95.41 L952.1 92.15 L949.69 88.9 L947.26 85.64 L944.83 82.39 L942.37 79.13 L939.91 75.88 L937.44 72.62 L934.95 69.37 L932.45 66.11 L929.95 62.86 L927.44 59.6 L924.91 56.35 L922.39 53.09 L919.85 49.84 L917.31 46.58 L914.77 43.32 L912.22 40.07 L909.67 36.81 L907.11 33.56 L904.56 30.31 L902 27.05"/>
<path d="M902 612.95 L903.7 609.69 L905.41 606.44 L907.11 603.18 L908.81 599.93 L910.51 596.67 L912.21 593.42 L913.9 590.16 L915.59 586.91 L917.28 583.65 L918.96 580.4 L920.63 577.14 L922.3 573.89 L923.97 570.63 L925.62 567.38 L927.27 564.12 L928.92 560.87 L930.55 557.62 L932.18 554.36 L933.79 551.11 L935.4 547.85 L936.99 544.6 L938.58 541.34 L940.15 538.09 L941.72 534.83 L943.27 531.58 L944.81 528.32 L946.33 525.07 L947.84 521.81 L949.34 518.56 L950.83 515.3 L952.29 512.04 L953.75 508.79 L955.18 505.53 L956.61 502.28 L958.01 499.02 L959.4 495.77 L960.77 492.51 L962.12 489.26 L963.45 486 L964.77 482.75 L966.06 479.5 L967.34 476.24 L968.6 472.99 L969.83 469.73 L971.05 466.48 L972.24 463.22 L973.42 459.97 L974.57 456.71 L975.7 453.45 L976.8 450.2 L977.89 446.94 L978.95 443.69 L979.99 440.44 L981 437.18 L981.99 433.93 L982.96 430.67 L983.9 427.41 L984.81 424.16 L985.7 420.9 L986.57 417.65 L987.41 414.39 L988.22 411.14 L989.01 407.88 L989.77 404.63 L990.5 401.38 L991.21 398.12 L991.89 394.87 L992.54 391.61 L993.16 388.36 L993.76 385.1 L994.33 381.85 L994.87 378.59 L995.38 375.33 L995.87 372.08 L996.32 368.82 L996.75 365.57 L997.15 362.31 L997.52 359.06 L997.86 355.81 L998.17 352.55 L998.45 349.3 L998.7 346.04 L998.92 342.79 L999.12 339.53 L999.28 336.27 L999.41 333.02 L999.52 329.76 L999.59 326.51 L999.64 323.25 L999.65 320 L999.64 316.75 L999.59 313.49 L999.52 310.24 L999.41 306.98 L999.28 303.73 L999.12 300.47 L998.92 297.21 L998.7 293.96 L998.45 290.7 L998.17 287.45 L997.86 284.19 L997.52 280.94 L997.15 277.69 L996.75 274.43 L996.32 271.18 L995.87 267.92 L995.38 264.67 L994.87 261.41 L994.33 258.15 L993.76 254.9 L993.16 251.64 L992.54 248.39 L991.89 245.13 L991.21 241.88 L990.5 238.62 L989.77 235.37 L989.01 232.12 L988.22 228.86 L987.41 225.61 L986.57 222.35 L985.7 219.09 L984.81 215.84 L983.9 212.59 L982.96 209.33 L981.99 206.07 L981 202.82 L979.99 199.56 L978.95 196.31 L977.89 193.06 L976.8 189.8 L975.7 186.55 L974.57 183.29 L973.42 180.03 L972.24 176.78 L971.05 173.53 L969.83 170.27 L968.6 167.02 L967.34 163.76 L966.06 160.5 L964.77 157.25 L963.45 154 L962.12 150.74 L960.77 147.49 L959.4 144.23 L958.01 140.97 L956.61 137.72 L955.18 134.47 L953.75 131.21 L952.29 127.96 L950.83 124.7 L949.34 121.44 L947.84 118.19 L946.33 114.94 L944.81 111.68 L943.27 108.43 L941.72 105.17 L940.15 101.92 L938.58 98.66 L936.99 95.41 L935.4 92.15 L933.79 88.9 L932.18 85.64 L930.55 82.39 L928.92 79.13 L927.27 75.88 L925.62 72.62 L923.97 69.37 L922.3 66.11 L920.63 62.86 L918.96 59.6 L917.28 56.35 L915.59 53.09 L913.9 49.84 L912.21 46.58 L910.51 43.32 L908.81 40.07 L907.11 36.81 L905.41 33.56 L903.7 30.31 L902 27.05"/>
<path d="M902 612.95 L902.85 609.69 L903.7 606.44 L904.56 603.18 L905.41 599.93 L906.26 596.67 L907.1 593.42 L907.95 590.16 L908.8 586.91 L909.64 583.65 L910.48 580.4 L911.32 577.14 L912.15 573.89 L912.98 570.63 L913.81 567.38 L914.64 564.12 L915.46 560.87 L916.28 557.62 L917.09 554.36 L917.9 551.11 L918.7 547.85 L919.5 544.6 L920.29 541.34 L921.08 538.09 L921.86 534.83 L922.63 531.58 L923.4 528.32 L924.17 525.07 L924.92 521.81 L925.67 518.56 L926.41 515.3 L927.15 512.04 L927.87 508.79 L928.59 505.53 L929.3 502.28 L930 499.02 L930.7 495.77 L931.38 492.51 L932.06 489.26 L932.73 486 L933.38 482.75 L934.03 479.5 L934.67 476.24 L935.3 472.99 L935.92 469.73 L936.52 466.48 L937.12 463.22 L937.71 459.97 L938.28 456.71 L938.85 453.45 L939.4 450.2 L939.94 446.94 L940.47 443.69 L940.99 440.44 L941.5 437.18 L942 433.93 L942.48 430.67 L942.95 427.41 L943.41 424.16 L943.85 420.9 L944.28 417.65 L944.7 414.39 L945.11 411.14 L945.5 407.88 L945.88 404.63 L946.25 401.38 L946.6 398.12 L946.94 394.87 L947.27 391.61 L947.58 388.36 L947.88 385.1 L948.16 381.85 L948.44 378.59 L948.69 375.33 L948.93 372.08 L949.16 368.82 L949.37 365.57 L949.57 362.31 L949.76 359.06 L949.93 355.81 L950.08 352.55 L950.22 349.3 L950.35 346.04 L950.46 342.79 L950.56 339.53 L950.64 336.27 L950.71 333.02 L950.76 329.76 L950.8 326.51 L950.82 323.25 L950.83 320 L950.82 316.75 L950.8 313.49 L950.76 310.24 L950.71 306.98 L950.64 303.73 L950.56 300.47 L950.46 297.21 L950.35 293.96 L950.22 290.7 L950.08 287.45 L949.93 284.19 L949.76 280.94 L949.57 277.69 L949.37 274.43 L949.16 271.18 L948.93 267.92 L948.69 264.67 L948.44 261.41 L948.16 258.15 L947.88 254.9 L947.58 251.64 L947.27 248.39 L946.94 245.13 L946.6 241.88 L946.25 238.62 L945.88 235.37 L945.5 232.12 L945.11 228.86 L944.7 225.61 L944.28 222.35 L943.85 219.09 L943.41 215.84 L942.95 212.59 L942.48 209.33 L942 206.07 L941.5 202.82 L940.99 199.56 L940.47 196.31 L939.94 193.06 L939.4 189.8 L938.85 186.55 L938.28 183.29 L937.71 180.03 L937.12 176.78 L936.52 173.53 L935.92 170.27 L935.3 167.02 L934.67 163.76 L934.03 160.5 L933.38 157.25 L932.73 154 L932.06 150.74 L931.38 147.49 L930.7 144.23 L930 140.97 L929.3 137.72 L928.59 134.47 L927.87 131.21 L927.15 127.96 L926.41 124.7 L925.67 121.44 L924.92 118.19 L924.17 114.94 L923.4 111.68 L922.63 108.43 L921.86 105.17 L921.08 101.92 L920.29 98.66 L919.5 95.41 L918.7 92.15 L917.9 88.9 L917.09 85.64 L916.28 82.39 L915.46 79.13 L914.64 75.88 L913.81 72.62 L912.98 69.37 L912.15 66.11 L911.32 62.86 L910.48 59.6 L909.64 56.35 L908.8 53.09 L907.95 49.84 L907.1 46.58 L906.26 43.32 L905.41 40.07 L904.56 36.81 L903.7 33.56 L902.85 30.31 L902 27.05"/>
<path d="M902 612.95 L902 609.69 L902 606.44 L902 603.18 L902 599.93 L902 596.67 L902 593.42 L902 590.16 L902 586.91 L902 583.65 L902 580.4 L902 577.14 L902 573.89 L902 570.63 L902 567.38 L902 564.12 L902 560.87 L902 557.62 L902 554.36 L902 551.11 L902 547.85 L902 544.6 L902 541.34 L902 538.09 L902 534.83 L902 531.58 L902 528.32 L902 525.07 L902 521.81 L902 518.56 L902 515.3 L902 512.04 L902 508.79 L902 505.53 L902 502.28 L902 499.02 L902 495.77 L902 492.51 L902 489.26 L902 486 L902 482.75 L902 479.5 L902 476.24 L902 472.99 L902 469.73 L902 466.48 L902 463.22 L902 459.97 L902 456.71 L902 453.45 L902 450.2 L902 446.94 L902 443.69 L902 440.44 L902 437.18 L902 433.93 L902 430.67 L902 427.41 L902 424.16 L902 420.9 L902 417.65 L902 414.39 L902 411.14 L902 407.88 L902 404.63 L902 401.38 L902 398.12 L902 394.87 L902 391.61 L902 388.36 L902 385.1 L902 381.85 L902 378.59 L902 375.33 L902 372.08 L902 368.82 L902 365.57 L902 362.31 L902 359.06 L902 355.81 L902 352.55 L902 349.3 L902 346.04 L902 342.79 L902 339.53 L902 336.27 L902 333.02 L902 329.76 L902 326.51 L902 323.25 L902 320 L902 316.75 L902 313.49 L902 310.24 L902 306.98 L902 303.73 L902 300.47 L902 297.21 L902 293.96 L902 290.7 L902 287.45 L902 284.19 L902 280.94 L902 277.69 L902 274.43 L902 271.18 L902 267.92 L902 264.67 L902 261.41 L902 258.15 L902 254.9 L902 251.64 L902 248.39 L902 245.13 L902 241.88 L902 238.62 L902 235.37 L902 232.12 L902 228.86 L902 225.61 L902 222.35 L902 219.09 L902 215.84 L902 212.59 L902 209.33 L902 206.07 L902 202.82 L902 199.56 L902 196.31 L902 193.06 L902 189.8 L902 186.55 L902 183.29 L902 180.03 L902 176.78 L902 173.53 L902 170.27 L902 167.02 L902 163.76 L902 160.5 L902 157.25 L902 154 L902 150.74 L902 147.49 L902 144.23 L902 140.97 L902 137.72 L902 134.47 L902 131.21 L902 127.96 L902 124.7 L902 121.44 L902 118.19 L902 114.94 L902 111.68 L902 108.43 L902 105.17 L902 101.92 L902 98.66 L902 95.41 L902 92.15 L902 88.9 L902 85.64 L902 82.39 L902 79.13 L902 75.88 L902 72.62 L902 69.37 L902 66.11 L902 62.86 L902 59.6 L902 56.35 L902 53.09 L902 49.84 L902 46.58 L902 43.32 L902 40.07 L902 36.81 L902 33.56 L902 30.31 L902 27.05"/>
<path d="M902 612.95 L901.15 609.69 L900.3 606.44 L899.44 603.18 L898.59 599.93 L897.74 596.67 L896.9 593.42 L896.05 590.16 L895.2 586.91 L894.36 583.65 L893.52 580.4 L892.68 577.14 L891.85 573.89 L891.02 570.63 L890.19 567.38 L889.36 564.12 L888.54 560.87 L887.72 557.62 L886.91 554.36 L886.1 551.11 L885.3 547.85 L884.5 544.6 L883.71 541.34 L882.92 538.09 L882.14 534.83 L881.37 531.58 L880.6 528.32 L879.83 525.07 L879.08 521.81 L878.33 518.56 L877.59 515.3 L876.85 512.04 L876.13 508.79 L875.41 505.53 L874.7 502.28 L874 499.02 L873.3 495.77 L872.62 492.51 L871.94 489.26 L871.27 486 L870.62 482.75 L869.97 479.5 L869.33 476.24 L868.7 472.99 L868.08 469.73 L867.48 466.48 L866.88 463.22 L866.29 459.97 L865.72 456.71 L865.15 453.45 L864.6 450.2 L864.06 446.94 L863.53 443.69 L863.01 440.44 L862.5 437.18 L862 433.93 L861.52 430.67 L861.05 427.41 L860.59 424.16 L860.15 420.9 L859.72 417.65 L859.3 414.39 L858.89 411.14 L858.5 407.88 L858.12 404.63 L857.75 401.38 L857.4 398.12 L857.06 394.87 L856.73 391.61 L856.42 388.36 L856.12 385.1 L855.84 381.85 L855.56 378.59 L855.31 375.33 L855.07 372.08 L854.84 368.82 L854.63 365.57 L854.43 362.31 L854.24 359.06 L854.07 355.81 L853.92 352.55 L853.78 349.3 L853.65 346.04 L853.54 342.79 L853.44 339.53 L853.36 336.27 L853.29 333.02 L853.24 329.76 L853.2 326.51 L853.18 323.25 L853.17 320 L853.18 316.75 L853.2 313.49 L853.24 310.24 L853.29 306.98 L853.36 303.73 L853.44 300.47 L853.54 297.21 L853.65 293.96 L853.78 290.7 L853.92 287.45 L854.07 284.19 L854.24 280.94 L854.43 277.69 L854.63 274.43 L854.84 271.18 L855.07 267.92 L855.31 264.67 L855.56 261.41 L855.84 258.15 L856.12 254.9 L856.42 251.64 L856.73 248.39 L857.06 245.13 L857.4 241.88 L857.75 238.62 L858.12 235.37 L858.5 232.12 L858.89 228.86 L859.3 225.61 L859.72 222.35 L860.15 219.09 L860.59 215.84 L861.05 212.59 L861.52 209.33 L862 206.07 L862.5 202.82 L863.01 199.56 L863.53 196.31 L864.06 193.06 L864.6 189.8 L865.15 186.55 L865.72 183.29 L866.29 180.03 L866.88 176.78 L867.48 173.53 L868.08 170.27 L868.7 167.02 L869.33 163.76 L869.97 160.5 L870.62 157.25 L871.27 154 L871.94 150.74 L872.62 147.49 L873.3 144.23 L874 140.97 L874.7 137.72 L875.41 134.47 L876.13 131.21 L876.85 127.96 L877.59 124.7 L878.33 121.44 L879.08 118.19 L879.83 114.94 L880.6 111.68 L881.37 108.43 L882.14 105.17 L882.92 101.92 L883.71 98.66 L884.5 95.41 L885.3 92.15 L886.1 88.9 L886.91 85.64 L887.72 82.39 L888.54 79.13 L889.36 75.88 L890.19 72.62 L891.02 69.37 L891.85 66.11 L892.68 62.86 L893.52 59.6 L894.36 56.35 L895.2 53.09 L896.05 49.84 L896.9 46.58 L897.74 43.32 L898.59 40.07 L899.44 36.81 L900.3 33.56 L901.15 30.31 L902 27.05"/>
<path d="M902 612.95 L900.3 609.69 L898.59 606.44 L896.89 603.18 L895.19 599.93 L893.49 596.67 L891.79 593.42 L890.1 590.16 L888.41 586.91 L886.72 583.65 L885.04 580.4 L883.37 577.14 L881.7 573.89 L880.03 570.63 L878.38 567.38 L876.73 564.12 L875.08 560.87 L873.45 557.62 L871.82 554.36 L870.21 551.11 L868.6 547.85 L867.01 544.6 L865.42 541.34 L863.85 538.09 L862.28 534.83 L860.73 531.58 L859.19 528.32 L857.67 525.07 L856.16 521.81 L854.66 518.56 L853.17 515.3 L851.71 512.04 L850.25 508.79 L848.82 505.53 L847.39 502.28 L845.99 499.02 L844.6 495.77 L843.23 492.51 L841.88 489.26 L840.55 486 L839.23 482.75 L837.94 479.5 L836.66 476.24 L835.4 472.99 L834.17 469.73 L832.95 466.48 L831.76 463.22 L830.58 459.97 L829.43 456.71 L828.3 453.45 L827.2 450.2 L826.11 446.94 L825.05 443.69 L824.01 440.44 L823 437.18 L822.01 433.93 L821.04 430.67 L820.1 427.41 L819.19 424.16 L818.3 420.9 L817.43 417.65 L816.59 414.39 L815.78 411.14 L814.99 407.88 L814.23 404.63 L813.5 401.38 L812.79 398.12 L812.11 394.87 L811.46 391.61 L810.84 388.36 L810.24 385.1 L809.67 381.85 L809.13 378.59 L808.62 375.33 L808.13 372.08 L807.68 368.82 L807.25 365.57 L806.85 362.31 L806.48 359.06 L806.14 355.81 L805.83 352.55 L805.55 349.3 L805.3 346.04 L805.08 342.79 L804.88 339.53 L804.72 336.27 L804.59 333.02 L804.48 329.76 L804.41 326.51 L804.36 323.25 L804.35 320 L804.36 316.75 L804.41 313.49 L804.48 310.24 L804.59 306.98 L804.72 303.73 L804.88 300.47 L805.08 297.21 L805.3 293.96 L805.55 290.7 L805.83 287.45 L806.14 284.19 L806.48 280.94 L806.85 277.69 L807.25 274.43 L807.68 271.18 L808.13 267.92 L808.62 264.67 L809.13 261.41 L809.67 258.15 L810.24 254.9 L810.84 251.64 L811.46 248.39 L812.11 245.13 L812.79 241.88 L813.5 238.62 L814.23 235.37 L814.99 232.12 L815.78 228.86 L816.59 225.61 L817.43 222.35 L818.3 219.09 L819.19 215.84 L820.1 212.59 L821.04 209.33 L822.01 206.07 L823 202.82 L824.01 199.56 L825.05 196.31 L826.11 193.06 L827.2 189.8 L828.3 186.55 L829.43 183.29 L830.58 180.03 L831.76 176.78 L832.95 173.53 L834.17 170.27 L835.4 167.02 L836.66 163.76 L837.94 160.5 L839.23 157.25 L840.55 154 L841.88 150.74 L843.23 147.49 L844.6 144.23 L845.99 140.97 L847.39 137.72 L848.82 134.47 L850.25 131.21 L851.71 127.96 L853.17 124.7 L854.66 121.44 L856.16 118.19 L857.67 114.94 L859.19 111.68 L860.73 108.43 L862.28 105.17 L863.85 101.92 L865.42 98.66 L867.01 95.41 L868.6 92.15 L870.21 88.9 L871.82 85.64 L873.45 82.39 L875.08 79.13 L876.73 75.88 L878.38 72.62 L880.03 69.37 L881.7 66.11 L883.37 62.86 L885.04 59.6 L886.72 56.35 L888.41 53.09 L890.1 49.84 L891.79 46.58 L893.49 43.32 L895.19 40.07 L896.89 36.81 L898.59 33.56 L900.3 30.31 L902 27.05"/>
<path d="M902 612.95 L899.44 609.69 L896.89 606.44 L894.33 603.18 L891.78 599.93 L889.23 596.67 L886.69 593.42 L884.15 590.16 L881.61 586.91 L879.09 583.65 L876.56 580.4 L874.05 577.14 L871.55 573.89 L869.05 570.63 L866.56 567.38 L864.09 564.12 L861.63 560.87 L859.17 557.62 L856.74 554.36 L854.31 551.11 L851.9 547.85 L849.51 544.6 L847.13 541.34 L844.77 538.09 L842.42 534.83 L840.1 531.58 L837.79 528.32 L835.5 525.07 L833.23 521.81 L830.99 518.56 L828.76 515.3 L826.56 512.04 L824.38 508.79 L822.22 505.53 L820.09 502.28 L817.99 499.02 L815.9 495.77 L813.85 492.51 L811.82 489.26 L809.82 486 L807.85 482.75 L805.9 479.5 L803.99 476.24 L802.1 472.99 L800.25 469.73 L798.43 466.48 L796.63 463.22 L794.87 459.97 L793.15 456.71 L791.45 453.45 L789.79 450.2 L788.17 446.94 L786.58 443.69 L785.02 440.44 L783.5 437.18 L782.01 433.93 L780.57 430.67 L779.16 427.41 L777.78 424.16 L776.45 420.9 L775.15 417.65 L773.89 414.39 L772.67 411.14 L771.49 407.88 L770.35 404.63 L769.25 401.38 L768.19 398.12 L767.17 394.87 L766.19 391.61 L765.25 388.36 L764.36 385.1 L763.51 381.85 L762.69 378.59 L761.93 375.33 L761.2 372.08 L760.52 368.82 L759.88 365.57 L759.28 362.31 L758.73 359.06 L758.22 355.81 L757.75 352.55 L757.33 349.3 L756.95 346.04 L756.62 342.79 L756.33 339.53 L756.08 336.27 L755.88 333.02 L755.73 329.76 L755.61 326.51 L755.55 323.25 L755.52 320 L755.55 316.75 L755.61 313.49 L755.73 310.24 L755.88 306.98 L756.08 303.73 L756.33 300.47 L756.62 297.21 L756.95 293.96 L757.33 290.7 L757.75 287.45 L758.22 284.19 L758.73 280.94 L759.28 277.69 L759.88 274.43 L760.52 271.18 L761.2 267.92 L761.93 264.67 L762.69 261.41 L763.51 258.15 L764.36 254.9 L765.25 251.64 L766.19 248.39 L767.17 245.13 L768.19 241.88 L769.25 238.62 L770.35 235.37 L771.49 232.12 L772.67 228.86 L773.89 225.61 L775.15 222.35 L776.45 219.09 L777.78 215.84 L779.16 212.59 L780.57 209.33 L782.01 206.07 L783.5 202.82 L785.02 199.56 L786.58 196.31 L788.17 193.06 L789.79 189.8 L791.45 186.55 L793.15 183.29 L794.87 180.03 L796.63 176.78 L798.43 173.53 L800.25 170.27 L802.1 167.02 L803.99 163.76 L805.9 160.5 L807.85 157.25 L809.82 154 L811.82 150.74 L813.85 147.49 L815.9 144.23 L817.99 140.97 L820.09 137.72 L822.22 134.47 L824.38 131.21 L826.56 127.96 L828.76 124.7 L830.99 121.44 L833.23 118.19 L835.5 114.94 L837.79 111.68 L840.1 108.43 L842.42 105.17 L844.77 101.92 L847.13 98.66 L849.51 95.41 L851.9 92.15 L854.31 88.9 L856.74 85.64 L859.17 82.39 L861.63 79.13 L864.09 75.88 L866.56 72.62 L869.05 69.37 L871.55 66.11 L874.05 62.86 L876.56 59.6 L879.09 56.35 L881.61 53.09 L884.15 49.84 L886.69 46.58 L889.23 43.32 L891.78 40.07 L894.33 36.81 L896.89 33.56 L899.44 30.31 L902 27.05"/>
<path d="M902 612.95 L898.59 609.69 L895.18 606.44 L891.78 603.18 L888.38 599.93 L884.98 596.67 L881.59 593.42 L878.2 590.16 L874.82 586.91 L871.45 583.65 L868.09 580.4 L864.74 577.14 L861.39 573.89 L858.07 570.63 L854.75 567.38 L851.45 564.12 L848.17 560.87 L844.9 557.62 L841.65 554.36 L838.42 551.11 L835.2 547.85 L832.01 544.6 L828.84 541.34 L825.69 538.09 L822.56 534.83 L819.46 531.58 L816.39 528.32 L813.34 525.07 L810.31 521.81 L807.32 518.56 L804.35 515.3 L801.41 512.04 L798.51 508.79 L795.63 505.53 L792.79 502.28 L789.98 499.02 L787.21 495.77 L784.47 492.51 L781.76 489.26 L779.09 486 L776.46 482.75 L773.87 479.5 L771.32 476.24 L768.81 472.99 L766.33 469.73 L763.9 466.48 L761.51 463.22 L759.17 459.97 L756.86 456.71 L754.61 453.45 L752.39 450.2 L750.22 446.94 L748.1 443.69 L746.03 440.44 L744 437.18 L742.02 433.93 L740.09 430.67 L738.21 427.41 L736.38 424.16 L734.6 420.9 L732.87 417.65 L731.19 414.39 L729.56 411.14 L727.99 407.88 L726.47 404.63 L725 401.38 L723.58 398.12 L722.23 394.87 L720.92 391.61 L719.67 388.36 L718.48 385.1 L717.34 381.85 L716.26 378.59 L715.23 375.33 L714.27 372.08 L713.35 368.82 L712.5 365.57 L711.71 362.31 L710.97 359.06 L710.29 355.81 L709.67 352.55 L709.1 349.3 L708.6 346.04 L708.16 342.79 L707.77 339.53 L707.44 336.27 L707.18 333.02 L706.97 329.76 L706.82 326.51 L706.73 323.25 L706.7 320 L706.73 316.75 L706.82 313.49 L706.97 310.24 L707.18 306.98 L707.44 303.73 L707.77 300.47 L708.16 297.21 L708.6 293.96 L709.1 290.7 L709.67 287.45 L710.29 284.19 L710.97 280.94 L711.71 277.69 L712.5 274.43 L713.35 271.18 L714.27 267.92 L715.23 264.67 L716.26 261.41 L717.34 258.15 L718.48 254.9 L719.67 251.64 L720.92 248.39 L722.23 245.13 L723.58 241.88 L725 238.62 L726.47 235.37 L727.99 232.12 L729.56 228.86 L731.19 225.61 L732.87 222.35 L734.6 219.09 L736.38 215.84 L738.21 212.59 L740.09 209.33 L742.02 206.07 L744 202.82 L746.03 199.56 L748.1 196.31 L750.22 193.06 L752.39 189.8 L754.61 186.55 L756.86 183.29 L759.17 180.03 L761.51 176.78 L763.9 173.53 L766.33 170.27 L768.81 167.02 L771.32 163.76 L773.87 160.5 L776.46 157.25 L779.09 154 L781.76 150.74 L784.47 147.49 L787.21 144.23 L789.98 140.97 L792.79 137.72 L795.63 134.47 L798.51 131.21 L801.41 127.96 L804.35 124.7 L807.32 121.44 L810.31 118.19 L813.34 114.94 L816.39 111.68 L819.46 108.43 L822.56 105.17 L825.69 101.92 L828.84 98.66 L832.01 95.41 L835.2 92.15 L838.42 88.9 L841.65 85.64 L844.9 82.39 L848.17 79.13 L851.45 75.88 L854.75 72.62 L858.07 69.37 L861.39 66.11 L864.74 62.86 L868.09 59.6 L871.45 56.35 L874.82 53.09 L878.2 49.84 L881.59 46.58 L884.98 43.32 L888.38 40.07 L891.78 36.81 L895.18 33.56 L898.59 30.31 L902 27.05"/>
<path d="M902 612.95 L897.74 609.69 L893.48 606.44 L889.22 603.18 L884.97 599.93 L880.72 596.67 L876.48 593.42 L872.25 590.16 L868.02 586.91 L863.81 583.65 L859.61 580.4 L855.42 577.14 L851.24 573.89 L847.08 570.63 L842.94 567.38 L838.82 564.12 L834.71 560.87 L830.62 557.62 L826.56 554.36 L822.52 551.11 L818.5 547.85 L814.51 544.6 L810.55 541.34 L806.61 538.09 L802.71 534.83 L798.83 531.58 L794.98 528.32 L791.17 525.07 L787.39 521.81 L783.65 518.56 L779.94 515.3 L776.27 512.04 L772.63 508.79 L769.04 505.53 L765.49 502.28 L761.98 499.02 L758.51 495.77 L755.08 492.51 L751.7 489.26 L748.37 486 L745.08 482.75 L741.84 479.5 L738.65 476.24 L735.51 472.99 L732.42 469.73 L729.38 466.48 L726.39 463.22 L723.46 459.97 L720.58 456.71 L717.76 453.45 L714.99 450.2 L712.28 446.94 L709.63 443.69 L707.03 440.44 L704.5 437.18 L702.02 433.93 L699.61 430.67 L697.26 427.41 L694.97 424.16 L692.74 420.9 L690.58 417.65 L688.48 414.39 L686.45 411.14 L684.48 407.88 L682.58 404.63 L680.75 401.38 L678.98 398.12 L677.28 394.87 L675.65 391.61 L674.09 388.36 L672.6 385.1 L671.18 381.85 L669.82 378.59 L668.54 375.33 L667.33 372.08 L666.19 368.82 L665.13 365.57 L664.13 362.31 L663.21 359.06 L662.36 355.81 L661.58 352.55 L660.88 349.3 L660.25 346.04 L659.69 342.79 L659.21 339.53 L658.8 336.27 L658.47 333.02 L658.21 329.76 L658.02 326.51 L657.91 323.25 L657.88 320 L657.91 316.75 L658.02 313.49 L658.21 310.24 L658.47 306.98 L658.8 303.73 L659.21 300.47 L659.69 297.21 L660.25 293.96 L660.88 290.7 L661.58 287.45 L662.36 284.19 L663.21 280.94 L664.13 277.69 L665.13 274.43 L666.19 271.18 L667.33 267.92 L668.54 264.67 L669.82 261.41 L671.18 258.15 L672.6 254.9 L674.09 251.64 L675.65 248.39 L677.28 245.13 L678.98 241.88 L680.75 238.62 L682.58 235.37 L684.48 232.12 L686.45 228.86 L688.48 225.61 L690.58 222.35 L692.74 219.09 L694.97 215.84 L697.26 212.59 L699.61 209.33 L702.02 206.07 L704.5 202.82 L707.03 199.56 L709.63 196.31 L712.28 193.06 L714.99 189.8 L717.76 186.55 L720.58 183.29 L723.46 180.03 L726.39 176.78 L729.38 173.53 L732.42 170.27 L735.51 167.02 L738.65 163.76 L741.84 160.5 L745.08 157.25 L748.37 154 L751.7 150.74 L755.08 147.49 L758.51 144.23 L761.98 140.97 L765.49 137.72 L769.04 134.47 L772.63 131.21 L776.27 127.96 L779.94 124.7 L783.65 121.44 L787.39 118.19 L791.17 114.94 L794.98 111.68 L798.83 108.43 L802.71 105.17 L806.61 101.92 L810.55 98.66 L814.51 95.41 L818.5 92.15 L822.52 88.9 L826.56 85.64 L830.62 82.39 L834.71 79.13 L838.82 75.88 L842.94 72.62 L847.08 69.37 L851.24 66.11 L855.42 62.86 L859.61 59.6 L863.81 56.35 L868.02 53.09 L872.25 49.84 L876.48 46.58 L880.72 43.32 L884.97 40.07 L889.22 36.81 L893.48 33.56 L897.74 30.31 L902 27.05"/>
<path d="M902 612.95 L896.89 609.69 L891.78 606.44 L886.67 603.18 L881.56 599.93 L876.47 596.67 L871.38 593.42 L866.3 590.16 L861.23 586.91 L856.17 583.65 L851.13 580.4 L846.1 577.14 L841.09 573.89 L836.1 570.63 L831.13 567.38 L826.18 564.12 L821.25 560.87 L816.35 557.62 L811.47 554.36 L806.62 551.11 L801.81 547.85 L797.02 544.6 L792.26 541.34 L787.54 538.09 L782.85 534.83 L778.19 531.58 L773.58 528.32 L769 525.07 L764.47 521.81 L759.98 518.56 L755.52 515.3 L751.12 512.04 L746.76 508.79 L742.45 505.53 L738.18 502.28 L733.97 499.02 L729.81 495.77 L725.7 492.51 L721.64 489.26 L717.64 486 L713.7 482.75 L709.81 479.5 L705.98 476.24 L702.21 472.99 L698.5 469.73 L694.85 466.48 L691.27 463.22 L687.75 459.97 L684.3 456.71 L680.91 453.45 L677.59 450.2 L674.34 446.94 L671.15 443.69 L668.04 440.44 L665 437.18 L662.03 433.93 L659.13 430.67 L656.31 427.41 L653.56 424.16 L650.89 420.9 L648.3 417.65 L645.78 414.39 L643.34 411.14 L640.98 407.88 L638.7 404.63 L636.5 401.38 L634.38 398.12 L632.34 394.87 L630.38 391.61 L628.51 388.36 L626.72 385.1 L625.01 381.85 L623.39 378.59 L621.85 375.33 L620.4 372.08 L619.03 368.82 L617.75 365.57 L616.56 362.31 L615.45 359.06 L614.43 355.81 L613.5 352.55 L612.66 349.3 L611.9 346.04 L611.23 342.79 L610.65 339.53 L610.16 336.27 L609.76 333.02 L609.45 329.76 L609.23 326.51 L609.09 323.25 L609.05 320 L609.09 316.75 L609.23 313.49 L609.45 310.24 L609.76 306.98 L610.16 303.73 L610.65 300.47 L611.23 297.21 L611.9 293.96 L612.66 290.7 L613.5 287.45 L614.43 284.19 L615.45 280.94 L616.56 277.69 L617.75 274.43 L619.03 271.18 L620.4 267.92 L621.85 264.67 L623.39 261.41 L625.01 258.15 L626.72 254.9 L628.51 251.64 L630.38 248.39 L632.34 245.13 L634.38 241.88 L636.5 238.62 L638.7 235.37 L640.98 232.12 L643.34 228.86 L645.78 225.61 L648.3 222.35 L650.89 219.09 L653.56 215.84 L656.31 212.59 L659.13 209.33 L662.03 206.07 L665 202.82 L668.04 199.56 L671.15 196.31 L674.34 193.06 L677.59 189.8 L680.91 186.55 L684.3 183.29 L687.75 180.03 L691.27 176.78 L694.85 173.53 L698.5 170.27 L702.21 167.02 L705.98 163.76 L709.81 160.5 L713.7 157.25 L717.64 154 L721.64 150.74 L725.7 147.49 L729.81 144.23 L733.97 140.97 L738.18 137.72 L742.45 134.47 L746.76 131.21 L751.12 127.96 L755.52 124.7 L759.98 121.44 L764.47 118.19 L769 114.94 L773.58 111.68 L778.19 108.43 L782.85 105.17 L787.54 101.92 L792.26 98.66 L797.02 95.41 L801.81 92.15 L806.62 88.9 L811.47 85.64 L816.35 82.39 L821.25 79.13 L826.18 75.88 L831.13 72.62 L836.1 69.37 L841.09 66.11 L846.1 62.86 L851.13 59.6 L856.17 56.35 L861.23 53.09 L866.3 49.84 L871.38 46.58 L876.47 43.32 L881.56 40.07 L886.67 36.81 L891.78 33.56 L896.89 30.31 L902 27.05"/>
<path d="M902 612.95 L896.04 609.69 L890.07 606.44 L884.11 603.18 L878.16 599.93 L872.21 596.67 L866.27 593.42 L860.35 590.16 L854.43 586.91 L848.53 583.65 L842.65 580.4 L836.79 577.14 L830.94 573.89 L825.12 570.63 L819.32 567.38 L813.54 564.12 L807.79 560.87 L802.07 557.62 L796.39 554.36 L790.73 551.11 L785.11 547.85 L779.52 544.6 L773.97 541.34 L768.46 538.09 L762.99 534.83 L757.56 531.58 L752.18 528.32 L746.84 525.07 L741.55 521.81 L736.3 518.56 L731.11 515.3 L725.97 512.04 L720.89 508.79 L715.86 505.53 L710.88 502.28 L705.97 499.02 L701.11 495.77 L696.31 492.51 L691.58 489.26 L686.91 486 L682.31 482.75 L677.78 479.5 L673.31 476.24 L668.91 472.99 L664.58 469.73 L660.33 466.48 L656.15 463.22 L652.04 459.97 L648.01 456.71 L644.06 453.45 L640.19 450.2 L636.39 446.94 L632.68 443.69 L629.05 440.44 L625.5 437.18 L622.03 433.93 L618.66 430.67 L615.36 427.41 L612.16 424.16 L609.04 420.9 L606.01 417.65 L603.08 414.39 L600.23 411.14 L597.48 407.88 L594.81 404.63 L592.25 401.38 L589.77 398.12 L587.39 394.87 L585.11 391.61 L582.93 388.36 L580.84 385.1 L578.85 381.85 L576.95 378.59 L575.16 375.33 L573.46 372.08 L571.87 368.82 L570.38 365.57 L568.98 362.31 L567.69 359.06 L566.5 355.81 L565.42 352.55 L564.43 349.3 L563.55 346.04 L562.77 342.79 L562.1 339.53 L561.53 336.27 L561.06 333.02 L560.69 329.76 L560.43 326.51 L560.28 323.25 L560.23 320 L560.28 316.75 L560.43 313.49 L560.69 310.24 L561.06 306.98 L561.53 303.73 L562.1 300.47 L562.77 297.21 L563.55 293.96 L564.43 290.7 L565.42 287.45 L566.5 284.19 L567.69 280.94 L568.98 277.69 L570.38 274.43 L571.87 271.18 L573.46 267.92 L575.16 264.67 L576.95 261.41 L578.85 258.15 L580.84 254.9 L582.93 251.64 L585.11 248.39 L587.39 245.13 L589.77 241.88 L592.25 238.62 L594.81 235.37 L597.48 232.12 L600.23 228.86 L603.08 225.61 L606.01 222.35 L609.04 219.09 L612.16 215.84 L615.36 212.59 L618.66 209.33 L622.03 206.07 L625.5 202.82 L629.05 199.56 L632.68 196.31 L636.39 193.06 L640.19 189.8 L644.06 186.55 L648.01 183.29 L652.04 180.03 L656.15 176.78 L660.33 173.53 L664.58 170.27 L668.91 167.02 L673.31 163.76 L677.78 160.5 L682.31 157.25 L686.91 154 L691.58 150.74 L696.31 147.49 L701.11 144.23 L705.97 140.97 L710.88 137.72 L715.86 134.47 L720.89 131.21 L725.97 127.96 L731.11 124.7 L736.3 121.44 L741.55 118.19 L746.84 114.94 L752.18 111.68 L757.56 108.43 L762.99 105.17 L768.46 101.92 L773.97 98.66 L779.52 95.41 L785.11 92.15 L790.73 88.9 L796.39 85.64 L802.07 82.39 L807.79 79.13 L813.54 75.88 L819.32 72.62 L825.12 69.37 L830.94 66.11 L836.79 62.86 L842.65 59.6 L848.53 56.35 L854.43 53.09 L860.35 49.84 L866.27 46.58 L872.21 43.32 L878.16 40.07 L884.11 36.81 L890.07 33.56 L896.04 30.31 L902 27.05"/>
<path d="M902 612.95 L895.18 609.69 L888.37 606.44 L881.56 603.18 L874.75 599.93 L867.96 596.67 L861.17 593.42 L854.4 590.16 L847.64 586.91 L840.9 583.65 L834.17 580.4 L827.47 577.14 L820.79 573.89 L814.13 570.63 L807.51 567.38 L800.91 564.12 L794.34 560.87 L787.8 557.62 L781.3 554.36 L774.83 551.11 L768.41 547.85 L762.02 544.6 L755.68 541.34 L749.38 538.09 L743.13 534.83 L736.93 531.58 L730.77 528.32 L724.67 525.07 L718.62 521.81 L712.63 518.56 L706.7 515.3 L700.83 512.04 L695.01 508.79 L689.26 505.53 L683.58 502.28 L677.96 499.02 L672.41 495.77 L666.93 492.51 L661.52 489.26 L656.19 486 L650.93 482.75 L645.74 479.5 L640.64 476.24 L635.61 472.99 L630.67 469.73 L625.8 466.48 L621.03 463.22 L616.33 459.97 L611.73 456.71 L607.21 453.45 L602.78 450.2 L598.45 446.94 L594.2 443.69 L590.05 440.44 L586 437.18 L582.04 433.93 L578.18 430.67 L574.42 427.41 L570.75 424.16 L567.19 420.9 L563.73 417.65 L560.37 414.39 L557.12 411.14 L553.97 407.88 L550.93 404.63 L548 401.38 L545.17 398.12 L542.45 394.87 L539.84 391.61 L537.34 388.36 L534.96 385.1 L532.68 381.85 L530.52 378.59 L528.47 375.33 L526.53 372.08 L524.71 368.82 L523 365.57 L521.41 362.31 L519.94 359.06 L518.58 355.81 L517.33 352.55 L516.21 349.3 L515.2 346.04 L514.31 342.79 L513.54 339.53 L512.89 336.27 L512.35 333.02 L511.94 329.76 L511.64 326.51 L511.46 323.25 L511.4 320 L511.46 316.75 L511.64 313.49 L511.94 310.24 L512.35 306.98 L512.89 303.73 L513.54 300.47 L514.31 297.21 L515.2 293.96 L516.21 290.7 L517.33 287.45 L518.58 284.19 L519.94 280.94 L521.41 277.69 L523 274.43 L524.71 271.18 L526.53 267.92 L528.47 264.67 L530.52 261.41 L532.68 258.15 L534.96 254.9 L537.34 251.64 L539.84 248.39 L542.45 245.13 L545.17 241.88 L548 238.62 L550.93 235.37 L553.97 232.12 L557.12 228.86 L560.37 225.61 L563.73 222.35 L567.19 219.09 L570.75 215.84 L574.42 212.59 L578.18 209.33 L582.04 206.07 L586 202.82 L590.05 199.56 L594.2 196.31 L598.45 193.06 L602.78 189.8 L607.21 186.55 L611.73 183.29 L616.33 180.03 L621.03 176.78 L625.8 173.53 L630.67 170.27 L635.61 167.02 L640.64 163.76 L645.74 160.5 L650.93 157.25 L656.19 154 L661.52 150.74 L666.93 147.49 L672.41 144.23 L677.96 140.97 L683.58 137.72 L689.26 134.47 L695.01 131.21 L700.83 127.96 L706.7 124.7 L712.63 121.44 L718.62 118.19 L724.67 114.94 L730.77 111.68 L736.93 108.43 L743.13 105.17 L749.38 101.92 L755.68 98.66 L762.02 95.41 L768.41 92.15 L774.83 88.9 L781.3 85.64 L787.8 82.39 L794.34 79.13 L800.91 75.88 L807.51 72.62 L814.13 69.37 L820.79 66.11 L827.47 62.86 L834.17 59.6 L840.9 56.35 L847.64 53.09 L854.4 49.84 L861.17 46.58 L867.96 43.32 L874.75 40.07 L881.56 36.81 L888.37 33.56 L895.18 30.31 L902 27.05"/>
<path d="M902 612.95 L894.33 609.69 L886.66 606.44 L879 603.18 L871.35 599.93 L863.7 596.67 L856.07 593.42 L848.45 590.16 L840.84 586.91 L833.26 583.65 L825.69 580.4 L818.15 577.14 L810.64 573.89 L803.15 570.63 L795.69 567.38 L788.27 564.12 L780.88 560.87 L773.52 557.62 L766.21 554.36 L758.94 551.11 L751.71 547.85 L744.52 544.6 L737.39 541.34 L730.3 538.09 L723.27 534.83 L716.29 531.58 L709.37 528.32 L702.51 525.07 L695.7 521.81 L688.96 518.56 L682.29 515.3 L675.68 512.04 L669.14 508.79 L662.67 505.53 L656.28 502.28 L649.96 499.02 L643.71 495.77 L637.55 492.51 L631.46 489.26 L625.46 486 L619.54 482.75 L613.71 479.5 L607.97 476.24 L602.31 472.99 L596.75 469.73 L591.28 466.48 L585.9 463.22 L580.62 459.97 L575.44 456.71 L570.36 453.45 L565.38 450.2 L560.5 446.94 L555.73 443.69 L551.06 440.44 L546.5 437.18 L542.04 433.93 L537.7 430.67 L533.47 427.41 L529.35 424.16 L525.34 420.9 L521.45 417.65 L517.67 414.39 L514.01 411.14 L510.47 407.88 L507.05 404.63 L503.75 401.38 L500.57 398.12 L497.51 394.87 L494.57 391.61 L491.76 388.36 L489.08 385.1 L486.52 381.85 L484.08 378.59 L481.78 375.33 L479.6 372.08 L477.55 368.82 L475.63 365.57 L473.84 362.31 L472.18 359.06 L470.65 355.81 L469.25 352.55 L467.99 349.3 L466.85 346.04 L465.85 342.79 L464.98 339.53 L464.25 336.27 L463.65 333.02 L463.18 329.76 L462.84 326.51 L462.64 323.25 L462.57 320 L462.64 316.75 L462.84 313.49 L463.18 310.24 L463.65 306.98 L464.25 303.73 L464.98 300.47 L465.85 297.21 L466.85 293.96 L467.99 290.7 L469.25 287.45 L470.65 284.19 L472.18 280.94 L473.84 277.69 L475.63 274.43 L477.55 271.18 L479.6 267.92 L481.78 264.67 L484.08 261.41 L486.52 258.15 L489.08 254.9 L491.76 251.64 L494.57 248.39 L497.51 245.13 L500.57 241.88 L503.75 238.62 L507.05 235.37 L510.47 232.12 L514.01 228.86 L517.67 225.61 L521.45 222.35 L525.34 219.09 L529.35 215.84 L533.47 212.59 L537.7 209.33 L542.04 206.07 L546.5 202.82 L551.06 199.56 L555.73 196.31 L560.5 193.06 L565.38 189.8 L570.36 186.55 L575.44 183.29 L580.62 180.03 L585.9 176.78 L591.28 173.53 L596.75 170.27 L602.31 167.02 L607.97 163.76 L613.71 160.5 L619.54 157.25 L625.46 154 L631.46 150.74 L637.55 147.49 L643.71 144.23 L649.96 140.97 L656.28 137.72 L662.67 134.47 L669.14 131.21 L675.68 127.96 L682.29 124.7 L688.96 121.44 L695.7 118.19 L702.51 114.94 L709.37 111.68 L716.29 108.43 L723.27 105.17 L730.3 101.92 L737.39 98.66 L744.52 95.41 L751.71 92.15 L758.94 88.9 L766.21 85.64 L773.52 82.39 L780.88 79.13 L788.27 75.88 L795.69 72.62 L803.15 69.37 L810.64 66.11 L818.15 62.86 L825.69 59.6 L833.26 56.35 L840.84 53.09 L848.45 49.84 L856.07 46.58 L863.7 43.32 L871.35 40.07 L879 36.81 L886.66 33.56 L894.33 30.31 L902 27.05"/>
<path d="M902 612.95 L893.48 609.69 L884.96 606.44 L876.45 603.18 L867.94 599.93 L859.45 596.67 L850.96 593.42 L842.5 590.16 L834.05 586.91 L825.62 583.65 L817.22 580.4 L808.84 577.14 L800.49 573.89 L792.17 570.63 L783.88 567.38 L775.63 564.12 L767.42 560.87 L759.25 557.62 L751.12 554.36 L743.04 551.11 L735.01 547.85 L727.03 544.6 L719.1 541.34 L711.23 538.09 L703.41 534.83 L695.66 531.58 L687.97 528.32 L680.34 525.07 L672.78 521.81 L665.29 518.56 L657.88 515.3 L650.53 512.04 L643.27 508.79 L636.08 505.53 L628.97 502.28 L621.95 499.02 L615.01 495.77 L608.16 492.51 L601.4 489.26 L594.73 486 L588.16 482.75 L581.68 479.5 L575.3 476.24 L569.01 472.99 L562.83 469.73 L556.76 466.48 L550.78 463.22 L544.92 459.97 L539.16 456.71 L533.51 453.45 L527.98 450.2 L522.56 446.94 L517.25 443.69 L512.07 440.44 L507 437.18 L502.05 433.93 L497.22 430.67 L492.52 427.41 L487.94 424.16 L483.49 420.9 L479.16 417.65 L474.97 414.39 L470.9 411.14 L466.97 407.88 L463.16 404.63 L459.5 401.38 L455.96 398.12 L452.56 394.87 L449.3 391.61 L446.18 388.36 L443.2 385.1 L440.35 381.85 L437.65 378.59 L435.08 375.33 L432.66 372.08 L430.39 368.82 L428.25 365.57 L426.26 362.31 L424.42 359.06 L422.72 355.81 L421.17 352.55 L419.76 349.3 L418.5 346.04 L417.39 342.79 L416.42 339.53 L415.61 336.27 L414.94 333.02 L414.42 329.76 L414.05 326.51 L413.82 323.25 L413.75 320 L413.82 316.75 L414.05 313.49 L414.42 310.24 L414.94 306.98 L415.61 303.73 L416.42 300.47 L417.39 297.21 L418.5 293.96 L419.76 290.7 L421.17 287.45 L422.72 284.19 L424.42 280.94 L426.26 277.69 L428.25 274.43 L430.39 271.18 L432.66 267.92 L435.08 264.67 L437.65 261.41 L440.35 258.15 L443.2 254.9 L446.18 251.64 L449.3 248.39 L452.56 245.13 L455.96 241.88 L459.5 238.62 L463.16 235.37 L466.97 232.12 L470.9 228.86 L474.97 225.61 L479.16 222.35 L483.49 219.09 L487.94 215.84 L492.52 212.59 L497.22 209.33 L502.05 206.07 L507 202.82 L512.07 199.56 L517.25 196.31 L522.56 193.06 L527.98 189.8 L533.51 186.55 L539.16 183.29 L544.92 180.03 L550.78 176.78 L556.76 173.53 L562.83 170.27 L569.01 167.02 L575.3 163.76 L581.68 160.5 L588.16 157.25 L594.73 154 L601.4 150.74 L608.16 147.49 L615.01 144.23 L621.95 140.97 L628.97 137.72 L636.08 134.47 L643.27 131.21 L650.53 127.96 L657.88 124.7 L665.29 121.44 L672.78 118.19 L680.34 114.94 L687.97 111.68 L695.66 108.43 L703.41 105.17 L711.23 101.92 L719.1 98.66 L727.03 95.41 L735.01 92.15 L743.04 88.9 L751.12 85.64 L759.25 82.39 L767.42 79.13 L775.63 75.88 L783.88 72.62 L792.17 69.37 L800.49 66.11 L808.84 62.86 L817.22 59.6 L825.62 56.35 L834.05 53.09 L842.5 49.84 L850.96 46.58 L859.45 43.32 L867.94 40.07 L876.45 36.81 L884.96 33.56 L893.48 30.31 L902 27.05"/>
<path d="M902 612.95 L892.63 609.69 L883.26 606.44 L873.89 603.18 L864.54 599.93 L855.19 596.67 L845.86 593.42 L836.55 590.16 L827.25 586.91 L817.98 583.65 L808.74 580.4 L799.52 577.14 L790.34 573.89 L781.18 570.63 L772.07 567.38 L762.99 564.12 L753.96 560.87 L744.97 557.62 L736.03 554.36 L727.15 551.11 L718.31 547.85 L709.53 544.6 L700.81 541.34 L692.15 538.09 L683.55 534.83 L675.02 531.58 L666.56 528.32 L658.17 525.07 L649.86 521.81 L641.62 518.56 L633.46 515.3 L625.39 512.04 L617.39 508.79 L609.49 505.53 L601.67 502.28 L593.95 499.02 L586.32 495.77 L578.78 492.51 L571.34 489.26 L564.01 486 L556.77 482.75 L549.65 479.5 L542.63 476.24 L535.72 472.99 L528.92 469.73 L522.23 466.48 L515.66 463.22 L509.21 459.97 L502.88 456.71 L496.66 453.45 L490.58 450.2 L484.61 446.94 L478.78 443.69 L473.07 440.44 L467.5 437.18 L462.05 433.93 L456.74 430.67 L451.57 427.41 L446.53 424.16 L441.64 420.9 L436.88 417.65 L432.26 414.39 L427.79 411.14 L423.46 407.88 L419.28 404.63 L415.24 401.38 L411.36 398.12 L407.62 394.87 L404.03 391.61 L400.6 388.36 L397.31 385.1 L394.19 381.85 L391.21 378.59 L388.39 375.33 L385.73 372.08 L383.23 368.82 L380.88 365.57 L378.69 362.31 L376.66 359.06 L374.79 355.81 L373.08 352.55 L371.54 349.3 L370.15 346.04 L368.93 342.79 L367.87 339.53 L366.97 336.27 L366.23 333.02 L365.66 329.76 L365.25 326.51 L365.01 323.25 L364.93 320 L365.01 316.75 L365.25 313.49 L365.66 310.24 L366.23 306.98 L366.97 303.73 L367.87 300.47 L368.93 297.21 L370.15 293.96 L371.54 290.7 L373.08 287.45 L374.79 284.19 L376.66 280.94 L378.69 277.69 L380.88 274.43 L383.23 271.18 L385.73 267.92 L388.39 264.67 L391.21 261.41 L394.19 258.15 L397.31 254.9 L400.6 251.64 L404.03 248.39 L407.62 245.13 L411.36 241.88 L415.24 238.62 L419.28 235.37 L423.46 232.12 L427.79 228.86 L432.26 225.61 L436.88 222.35 L441.64 219.09 L446.53 215.84 L451.57 212.59 L456.74 209.33 L462.05 206.07 L467.5 202.82 L473.07 199.56 L478.78 196.31 L484.61 193.06 L490.58 189.8 L496.66 186.55 L502.88 183.29 L509.21 180.03 L515.66 176.78 L522.23 173.53 L528.92 170.27 L535.72 167.02 L542.63 163.76 L549.65 160.5 L556.77 157.25 L564.01 154 L571.34 150.74 L578.78 147.49 L586.32 144.23 L593.95 140.97 L601.67 137.72 L609.49 134.47 L617.39 131.21 L625.39 127.96 L633.46 124.7 L641.62 121.44 L649.86 118.19 L658.17 114.94 L666.56 111.68 L675.02 108.43 L683.55 105.17 L692.15 101.92 L700.81 98.66 L709.53 95.41 L718.31 92.15 L727.15 88.9 L736.03 85.64 L744.97 82.39 L753.96 79.13 L762.99 75.88 L772.07 72.62 L781.18 69.37 L790.34 66.11 L799.52 62.86 L808.74 59.6 L817.98 56.35 L827.25 53.09 L836.55 49.84 L845.86 46.58 L855.19 43.32 L864.54 40.07 L873.89 36.81 L883.26 33.56 L892.63 30.31 L902 27.05"/>
<path d="M902 612.95 L891.77 609.69 L881.55 606.44 L871.34 603.18 L861.13 599.93 L850.94 596.67 L840.76 593.42 L830.6 590.16 L820.46 586.91 L810.35 583.65 L800.26 580.4 L790.21 577.14 L780.18 573.89 L770.2 570.63 L760.26 567.38 L750.36 564.12 L740.5 560.87 L730.7 557.62 L720.95 554.36 L711.25 551.11 L701.61 547.85 L692.03 544.6 L682.52 541.34 L673.07 538.09 L663.69 534.83 L654.39 531.58 L645.16 528.32 L636.01 525.07 L626.94 521.81 L617.95 518.56 L609.05 515.3 L600.24 512.04 L591.52 508.79 L582.9 505.53 L574.37 502.28 L565.94 499.02 L557.62 495.77 L549.4 492.51 L541.28 489.26 L533.28 486 L525.39 482.75 L517.62 479.5 L509.96 476.24 L502.42 472.99 L495 469.73 L487.71 466.48 L480.54 463.22 L473.5 459.97 L466.59 456.71 L459.82 453.45 L453.17 450.2 L446.67 446.94 L440.3 443.69 L434.08 440.44 L428 437.18 L422.06 433.93 L416.27 430.67 L410.62 427.41 L405.13 424.16 L399.79 420.9 L394.6 417.65 L389.56 414.39 L384.68 411.14 L379.96 407.88 L375.4 404.63 L370.99 401.38 L366.75 398.12 L362.68 394.87 L358.76 391.61 L355.02 388.36 L351.43 385.1 L348.02 381.85 L344.78 378.59 L341.7 375.33 L338.8 372.08 L336.06 368.82 L333.5 365.57 L331.12 362.31 L328.9 359.06 L326.86 355.81 L325 352.55 L323.31 349.3 L321.8 346.04 L320.47 342.79 L319.31 339.53 L318.33 336.27 L317.53 333.02 L316.9 329.76 L316.46 326.51 L316.19 323.25 L316.1 320 L316.19 316.75 L316.46 313.49 L316.9 310.24 L317.53 306.98 L318.33 303.73 L319.31 300.47 L320.47 297.21 L321.8 293.96 L323.31 290.7 L325 287.45 L326.86 284.19 L328.9 280.94 L331.12 277.69 L333.5 274.43 L336.06 271.18 L338.8 267.92 L341.7 264.67 L344.78 261.41 L348.02 258.15 L351.43 254.9 L355.02 251.64 L358.76 248.39 L362.68 245.13 L366.75 241.88 L370.99 238.62 L375.4 235.37 L379.96 232.12 L384.68 228.86 L389.56 225.61 L394.6 222.35 L399.79 219.09 L405.13 215.84 L410.62 212.59 L416.27 209.33 L422.06 206.07 L428 202.82 L434.08 199.56 L440.3 196.31 L446.67 193.06 L453.17 189.8 L459.82 186.55 L466.59 183.29 L473.5 180.03 L480.54 176.78 L487.71 173.53 L495 170.27 L502.42 167.02 L509.96 163.76 L517.62 160.5 L525.39 157.25 L533.28 154 L541.28 150.74 L549.4 147.49 L557.62 144.23 L565.94 140.97 L574.37 137.72 L582.9 134.47 L591.52 131.21 L600.24 127.96 L609.05 124.7 L617.95 121.44 L626.94 118.19 L636.01 114.94 L645.16 111.68 L654.39 108.43 L663.69 105.17 L673.07 101.92 L682.52 98.66 L692.03 95.41 L701.61 92.15 L711.25 88.9 L720.95 85.64 L730.7 82.39 L740.5 79.13 L750.36 75.88 L760.26 72.62 L770.2 69.37 L780.18 66.11 L790.21 62.86 L800.26 59.6 L810.35 56.35 L820.46 53.09 L830.6 49.84 L840.76 46.58 L850.94 43.32 L861.13 40.07 L871.34 36.81 L881.55 33.56 L891.77 30.31 L902 27.05"/>
</g>
<g font-family="Liberation Sans, sans-serif" font-size="11.2" fill="#909090">
<text x="1488.9" y="330" text-anchor="middle">+180<tspan font-size="7" dy="-2" dx="2.5">°</tspan></text>
<text x="1391.25" y="330" text-anchor="middle">+210<tspan font-size="7" dy="-2" dx="2.5">°</tspan></text>
<text x="1293.6" y="330" text-anchor="middle">+240<tspan font-size="7" dy="-2" dx="2.5">°</tspan></text>
<text x="1195.95" y="330" text-anchor="middle">+270<tspan font-size="7" dy="-2" dx="2.5">°</tspan></text>
<text x="1098.3" y="330" text-anchor="middle">+300<tspan font-size="7" dy="-2" dx="2.5">°</tspan></text>
<text x="1000.65" y="330" text-anchor="middle">+330<tspan font-size="7" dy="-2" dx="2.5">°</tspan></text>
<text x="903" y="330" text-anchor="middle">+0<tspan font-size="7" dy="-2" dx="2.5">°</tspan></text>
<text x="805.35" y="330" text-anchor="middle">+30<tspan font-size="7" dy="-2" dx="2.5">°</tspan></text>
<text x="707.7" y="330" text-anchor="middle">+60<tspan font-size="7" dy="-2" dx="2.5">°</tspan></text>
<text x="610.05" y="330" text-anchor="middle">+90<tspan font-size="7" dy="-2" dx="2.5">°</tspan></text>
<text x="512.4" y="330" text-anchor="middle">+120<tspan font-size="7" dy="-2" dx="2.5">°</tspan></text>
<text x="414.75" y="330" text-anchor="middle">+150<tspan font-size="7" dy="-2" dx="2.5">°</tspan></text>
<text x="317.1" y="330" text-anchor="middle">+180<tspan font-size="7" dy="-2" dx="2.5">°</tspan></text>
<text x="903" y="24.85" text-anchor="middle">+90<tspan font-size="7" dy="-2" dx="2.5">°</tspan></text>
<text x="903" y="122.5" text-anchor="middle">+60<tspan font-size="7" dy="-2" dx="2.5">°</tspan></text>
<text x="903" y="220.15" text-anchor="middle">+30<tspan font-size="7" dy="-2" dx="2.5">°</tspan></text>
<text x="903" y="428.45" text-anchor="middle">−30<tspan font-size="7" dy="-2" dx="2.5">°</tspan></text>
<text x="903" y="526.1" text-anchor="middle">−60<tspan font-size="7" dy="-2" dx="2.5">°</tspan></text>
<text x="903" y="623.75" text-anchor="middle">−90<tspan font-size="7" dy="-2" dx="2.5">°</tspan></text>
</g>
<g fill="none" stroke="#5c5c5c" stroke-width="1.3" stroke-dasharray="1.3 2.3" opacity="1">
<path d="M828.9 66.7 L827.07 67 L825.18 67.35 L823.21 67.73 L821.17 68.15 L819.06 68.6 L816.88 69.09 L814.63 69.62 L812.32 70.18 L809.95 70.76 L807.52 71.38 L805.02 72.03 L802.47 72.7 L799.87 73.4 L797.21 74.13 L794.5 74.88 L791.74 75.65 L788.94 76.45 L786.09 77.26 L783.2 78.1 L780.27 78.95 L777.3 79.82 L774.29 80.71 L771.25 81.62 L768.18 82.54 L765.08 83.48 L761.94 84.43 L758.78 85.39 L755.59 86.37 L752.38 87.35 L749.15 88.35 L745.89 89.36 L742.61 90.38 L739.31 91.41 L736 92.45 L732.67 93.5 L729.32 94.56 L725.96 95.62 L722.59 96.7 L719.2 97.78 L715.8 98.86 L712.4 99.96 L708.98 101.06 L705.55 102.17 L702.12 103.28 L698.68 104.4 L695.23 105.52 L691.78 106.65 L688.33 107.79 L684.87 108.93 L681.4 110.07 L677.94 111.22 L674.47 112.37 L671 113.52 L667.53 114.68 L664.06 115.85 L660.59 117.02 L657.12 118.19 L653.66 119.36 L650.19 120.54 L646.73 121.72 L643.27 122.9 L639.82 124.09 L636.36 125.28 L632.92 126.47 L629.47 127.66 L626.04 128.86 L622.6 130.06 L619.18 131.26 L615.76 132.46 L612.35 133.67 L608.94 134.87 L605.54 136.08 L602.15 137.29 L598.77 138.51 L595.4 139.72 L592.03 140.94 L588.68 142.16 L585.33 143.38 L582 144.6 L578.67 145.82 L575.36 147.05 L572.05 148.27 L568.76 149.5 L565.48 150.73 L562.21 151.96 L558.95 153.19 L555.7 154.42 L552.47 155.66 L549.25 156.89 L546.04 158.13 L542.84 159.37 L539.66 160.6 L536.49 161.84 L533.34 163.08 L530.2 164.32 L527.07 165.57 L523.96 166.81 L520.87 168.05 L517.79 169.3 L514.72 170.54 L511.67 171.79 L508.63 173.04 L505.62 174.29 L502.61 175.53 L499.63 176.78 L496.66 178.04 L493.71 179.29 L490.77 180.54 L487.85 181.79 L484.95 183.04 L482.07 184.3 L479.2 185.55 L476.35 186.81 L473.52 188.06 L470.71 189.32 L467.92 190.57 L465.14 191.83 L462.39 193.09 L459.65 194.35 L456.94 195.61 L454.24 196.87 L451.56 198.13 L448.9 199.39 L446.26 200.65 L443.64 201.91 L441.04 203.17 L438.47 204.43 L435.91 205.69 L433.37 206.96 L430.85 208.22 L428.36 209.48 L425.88 210.75 L423.43 212.01 L421 213.28 L418.59 214.54 L416.2 215.81 L413.83 217.07 L411.49 218.34 L409.17 219.6 L406.87 220.87 L404.59 222.14 L402.33 223.41 L400.1 224.67 L397.89 225.94 L395.7 227.21 L393.54 228.48 L391.4 229.75 L389.28 231.01 L387.19 232.28 L385.11 233.55 L383.07 234.82 L381.04 236.09 L379.04 237.36 L377.07 238.63 L375.12 239.9 L373.19 241.18 L371.29 242.45 L369.41 243.72 L367.55 244.99 L365.72 246.26 L363.92 247.53 L362.14 248.8 L360.38 250.08 L358.65 251.35 L356.95 252.62 L355.27 253.89 L353.61 255.17 L351.98 256.44 L350.38 257.71 L348.8 258.99 L347.25 260.26 L345.72 261.53 L344.22 262.81 L342.74 264.08 L341.3 265.35"/>
<path d="M1464.02 266.63 L1464.85 267.9 L1465.66 269.18 L1466.45 270.45 L1467.21 271.73 L1467.94 273 L1468.64 274.28 L1469.32 275.55 L1469.97 276.83 L1470.6 278.1 L1471.2 279.38 L1471.77 280.65 L1472.32 281.93 L1472.84 283.2 L1473.33 284.48 L1473.8 285.75 L1474.24 287.03 L1474.65 288.31 L1475.04 289.58 L1475.4 290.86 L1475.73 292.13 L1476.04 293.41 L1476.31 294.69 L1476.57 295.96 L1476.79 297.24 L1476.99 298.51 L1477.16 299.79 L1477.31 301.07 L1477.42 302.34 L1477.51 303.62 L1477.58 304.9 L1477.62 306.17 L1477.62 307.45 L1477.61 308.73 L1477.56 310 L1477.49 311.28 L1477.39 312.55 L1477.27 313.83 L1477.12 315.11 L1476.94 316.38 L1476.73 317.66 L1476.5 318.94 L1476.24 320.21 L1475.95 321.49 L1475.64 322.77 L1475.3 324.04 L1474.93 325.32 L1474.54 326.6 L1474.12 327.87 L1473.67 329.15 L1473.19 330.43 L1472.69 331.7 L1472.17 332.98 L1471.61 334.26 L1471.03 335.53 L1470.42 336.81 L1469.79 338.09 L1469.13 339.36 L1468.44 340.64 L1467.72 341.92 L1466.98 343.19 L1466.22 344.47 L1465.42 345.74 L1464.6 347.02 L1463.76 348.3 L1462.88 349.57 L1461.98 350.85 L1461.06 352.12 L1460.11 353.4 L1459.13 354.68 L1458.13 355.95 L1457.1 357.23 L1456.04 358.5 L1454.96 359.78 L1453.86 361.05 L1452.72 362.33 L1451.56 363.6 L1450.38 364.88 L1449.17 366.15 L1447.94 367.43 L1446.68 368.7 L1445.39 369.98 L1444.08 371.25 L1442.74 372.53 L1441.38 373.8 L1440 375.07 L1438.59 376.35 L1437.15 377.62 L1435.69 378.9 L1434.2 380.17 L1432.69 381.44 L1431.16 382.72 L1429.6 383.99 L1428.01 385.26 L1426.4 386.53 L1424.77 387.81 L1423.12 389.08 L1421.43 390.35 L1419.73 391.62 L1418 392.9 L1416.25 394.17 L1414.47 395.44 L1412.67 396.71 L1410.85 397.98 L1409 399.25 L1407.13 400.52 L1405.24 401.79 L1403.32 403.06 L1401.38 404.33 L1399.42 405.6 L1397.44 406.87 L1395.43 408.14 L1393.4 409.41 L1391.35 410.68 L1389.27 411.95 L1387.18 413.22 L1385.06 414.49 L1382.92 415.75 L1380.75 417.02 L1378.57 418.29 L1376.36 419.55 L1374.14 420.82 L1371.89 422.09 L1369.62 423.35 L1367.33 424.62 L1365.02 425.88 L1362.69 427.15 L1360.33 428.41"/>
<path d="M849.7 76.6 L848.07 76.97 L846.4 77.36 L844.7 77.79 L842.97 78.24 L841.21 78.73 L839.42 79.24 L837.6 79.78 L835.75 80.34 L833.87 80.93 L831.95 81.54 L830.02 82.18 L828.05 82.83 L826.05 83.52 L824.03 84.22 L821.99 84.94 L819.92 85.68 L817.82 86.44 L815.7 87.22 L813.56 88.01 L811.4 88.82 L809.22 89.65 L807.01 90.5 L804.79 91.35 L802.55 92.23 L800.29 93.11 L798.01 94.01 L795.72 94.92 L793.41 95.85 L791.09 96.78 L788.75 97.73 L786.4 98.69 L784.04 99.66 L781.67 100.63 L779.28 101.62 L776.88 102.62 L774.47 103.62 L772.06 104.64 L769.63 105.66 L767.2 106.69 L764.76 107.72 L762.31 108.77 L759.85 109.82 L757.39 110.88 L754.92 111.94 L752.45 113.01 L749.97 114.09 L747.49 115.17 L745.01 116.25 L742.52 117.35 L740.03 118.45 L737.54 119.55 L735.04 120.66 L732.54 121.77 L730.05 122.88 L727.55 124 L725.05 125.13 L722.55 126.26 L720.05 127.39 L717.55 128.53 L715.05 129.67 L712.56 130.81 L710.06 131.96 L707.57 133.11 L705.08 134.26 L702.59 135.42 L700.11 136.58 L697.62 137.74 L695.15 138.91 L692.67 140.07 L690.2 141.24 L687.74 142.42 L685.27 143.59 L682.82 144.77 L680.37 145.95 L677.92 147.13 L675.48 148.31 L673.04 149.5 L670.61 150.69 L668.19 151.88 L665.77 153.07 L663.37 154.27 L660.96 155.46 L658.57 156.66 L656.18 157.86 L653.8 159.06 L651.43 160.26 L649.06 161.47 L646.71 162.67 L644.36 163.88 L642.02 165.09 L639.69 166.3 L637.37 167.51 L635.05 168.72 L632.75 169.94 L630.46 171.15 L628.17 172.37 L625.9 173.59 L623.63 174.81 L621.38 176.03 L619.14 177.25 L616.91 178.47 L614.68 179.69 L612.47 180.92 L610.27 182.14 L608.08 183.37 L605.91 184.6 L603.74 185.82 L601.59 187.05 L599.44 188.28 L597.31 189.51 L595.19 190.75 L593.09 191.98 L590.99 193.21 L588.91 194.45 L586.85 195.68 L584.79 196.92 L582.75 198.15 L580.72 199.39 L578.7 200.63 L576.7 201.87 L574.71 203.1 L572.73 204.34 L570.77 205.58 L568.82 206.83 L566.89 208.07 L564.97 209.31 L563.06 210.55 L561.17 211.8 L559.3 213.04 L557.43 214.28 L555.59 215.53 L553.75 216.77 L551.94 218.02 L550.13 219.27 L548.35 220.51 L546.57 221.76 L544.82 223.01 L543.08 224.26 L541.35 225.5 L539.64 226.75 L537.95 228 L536.27 229.25 L534.61 230.5 L532.96 231.75 L531.33 233 L529.72 234.26 L528.12 235.51 L526.54 236.76 L524.98 238.01 L523.43 239.27 L521.9 240.52 L520.38 241.77 L518.89 243.03 L517.41 244.28 L515.95 245.53 L514.5 246.79 L513.07 248.04 L511.66 249.3 L510.27 250.55 L508.89 251.81 L507.54 253.07 L506.2 254.32 L504.87 255.58 L503.57 256.84 L502.28 258.09 L501.01 259.35 L499.76 260.61 L498.53 261.86 L497.32 263.12 L496.12 264.38 L494.94 265.64 L493.78 266.9 L492.64 268.16 L491.52 269.41 L490.42 270.67 L489.33 271.93 L488.26 273.19 L487.22 274.45 L486.19 275.71 L485.18 276.97 L484.19 278.23 L483.22 279.49 L482.26 280.75 L481.33 282.01 L480.41 283.27 L479.52 284.53 L478.64 285.79 L477.79 287.05 L476.95 288.31 L476.13 289.58 L475.33 290.84 L474.55 292.1 L473.79 293.36 L473.05 294.62 L472.33 295.88 L471.63 297.14 L470.95 298.4 L470.29 299.67 L469.65 300.93 L469.03 302.19 L468.42 303.45 L467.84 304.71 L467.28 305.98 L466.74 307.24 L466.21 308.5 L465.71 309.76 L465.23 311.02 L464.76 312.29 L464.32 313.55 L463.9 314.81 L463.5 316.07 L463.11 317.33 L462.75 318.6 L462.41 319.86 L462.09 321.12 L461.79 322.38 L461.5 323.65 L461.24 324.91 L461 326.17 L460.78 327.43 L460.58 328.69 L460.4 329.96 L460.24 331.22 L460.1 332.48 L459.98 333.74 L459.88 335 L459.8 336.27 L459.74 337.53 L459.7 338.79 L459.68 340.05 L459.68 341.31 L459.7 342.57 L459.74 343.84 L459.81 345.1 L459.89 346.36 L459.99 347.62 L460.11 348.88 L460.25 350.14 L460.42 351.4 L460.6 352.66 L460.8 353.92 L461.03 355.19 L461.27 356.45 L461.53 357.71 L461.82 358.97 L462.12 360.23 L462.44 361.49 L462.79 362.75 L463.15 364.01 L463.53 365.27 L463.94 366.53 L464.36 367.79 L464.8 369.04 L465.27 370.3 L465.75 371.56 L466.25 372.82 L466.77 374.08 L467.31 375.34 L467.88 376.6 L468.46 377.85 L469.06 379.11 L469.68 380.37 L470.32 381.63 L470.98 382.88 L471.65 384.14 L472.35 385.4 L473.07 386.65 L473.81 387.91 L474.56 389.16 L475.34 390.42 L476.13 391.67 L476.94 392.93 L477.77 394.18 L478.62 395.44 L479.49 396.69 L480.38 397.95 L481.29 399.2 L482.21 400.45 L483.16 401.71 L484.12 402.96 L485.1 404.21 L486.1 405.46 L487.12 406.71 L488.16 407.97 L489.21 409.22 L490.28 410.47 L491.38 411.72 L492.48 412.97 L493.61 414.22 L494.76 415.46 L495.92 416.71 L497.1 417.96 L498.29 419.21 L499.51 420.45 L500.74 421.7 L501.99 422.95 L503.26 424.19 L504.54 425.44 L505.84 426.68 L507.16 427.93 L508.49 429.17 L509.84 430.41 L511.21 431.65 L512.6 432.9 L514 434.14 L515.41 435.38 L516.85 436.62 L518.3 437.86 L519.76 439.1 L521.24 440.33 L522.74 441.57 L524.25 442.81 L525.78 444.04 L527.32 445.28 L528.88 446.51 L530.45 447.75 L532.04 448.98 L533.64 450.21 L535.26 451.44 L536.89 452.67 L538.54 453.9 L540.2 455.13 L541.88 456.36 L543.57 457.58 L545.27 458.81 L546.99 460.03 L548.72 461.26 L550.46 462.48 L552.21 463.7 L553.98 464.92 L555.77 466.14 L557.56 467.36 L559.37 468.57 L561.19 469.79 L563.02 471 L564.86 472.22 L566.72 473.43 L568.58 474.64 L570.46 475.85 L572.35 477.06 L574.25 478.26"/>
<path d="M843 81.8 L841.36 82.16 L839.7 82.55 L838 82.97 L836.28 83.41 L834.53 83.88 L832.75 84.37 L830.94 84.89 L829.11 85.43 L827.24 85.99 L825.35 86.58 L823.44 87.19 L821.5 87.82 L819.53 88.47 L817.54 89.14 L815.52 89.83 L813.48 90.54 L811.42 91.27 L809.33 92.01 L807.23 92.77 L805.1 93.55 L802.96 94.34 L800.79 95.15 L798.6 95.97 L796.4 96.8 L794.18 97.65 L791.94 98.52 L789.69 99.39 L787.42 100.28 L785.14 101.18 L782.84 102.09 L780.53 103.01 L778.21 103.94 L775.87 104.88 L773.53 105.83 L771.17 106.79 L768.8 107.76 L766.42 108.74 L764.03 109.73 L761.64 110.72 L759.23 111.73 L756.82 112.74 L754.4 113.76 L751.97 114.78 L749.54 115.81 L747.1 116.85 L744.66 117.9 L742.21 118.95 L739.75 120 L737.3 121.07 L734.84 122.13 L732.37 123.21 L729.91 124.28 L727.44 125.37 L724.97 126.46 L722.5 127.55 L720.03 128.65 L717.55 129.75 L715.08 130.85 L712.61 131.96 L710.13 133.08 L707.66 134.2 L705.19 135.32 L702.72 136.44 L700.25 137.57 L697.79 138.7 L695.32 139.84 L692.86 140.98 L690.4 142.12 L687.95 143.26 L685.5 144.41 L683.05 145.56 L680.6 146.71 L678.16 147.87 L675.73 149.03 L673.3 150.19 L670.87 151.35 L668.45 152.52 L666.04 153.68 L663.63 154.85 L661.22 156.03 L658.83 157.2 L656.44 158.38 L654.05 159.56 L651.68 160.74 L649.31 161.92 L646.94 163.1 L644.59 164.29 L642.24 165.48 L639.9 166.66 L637.57 167.86 L635.25 169.05 L632.94 170.24 L630.63 171.44 L628.34 172.63 L626.05 173.83 L623.77 175.03 L621.5 176.23 L619.25 177.44 L617 178.64 L614.76 179.85 L612.53 181.05 L610.31 182.26 L608.11 183.47 L605.91 184.68 L603.72 185.89 L601.55 187.1 L599.39 188.32 L597.23 189.53 L595.09 190.75 L592.96 191.96 L590.85 193.18 L588.74 194.4 L586.65 195.62 L584.57 196.84 L582.5 198.06 L580.44 199.28 L578.4 200.5 L576.37 201.73 L574.35 202.95 L572.35 204.18 L570.36 205.4 L568.38 206.63 L566.42 207.86 L564.47 209.08 L562.53 210.31 L560.61 211.54 L558.7 212.77 L556.81 214 L554.93 215.23 L553.06 216.47 L551.21 217.7 L549.38 218.93 L547.55 220.17 L545.75 221.4 L543.96 222.63 L542.18 223.87 L540.42 225.11 L538.67 226.34 L536.94 227.58 L535.23 228.82 L533.53 230.06 L531.84 231.29 L530.18 232.53 L528.52 233.77 L526.89 235.01 L525.27 236.25 L523.67 237.49 L522.08 238.73 L520.51 239.98 L518.95 241.22 L517.42 242.46 L515.9 243.7 L514.39 244.95 L512.91 246.19 L511.44 247.43 L509.98 248.68 L508.55 249.92 L507.13 251.17 L505.73 252.41 L504.34 253.66 L502.98 254.9 L501.63 256.15 L500.3 257.39 L498.99 258.64 L497.69 259.89 L496.41 261.14 L495.15 262.38 L493.91 263.63 L492.69 264.88 L491.48 266.13 L490.3 267.37 L489.13 268.62 L487.98 269.87 L486.85 271.12 L485.73 272.37 L484.64 273.62 L483.56 274.87 L482.5 276.12 L481.47 277.37 L480.45 278.62 L479.44 279.87 L478.46 281.12 L477.5 282.37 L476.56 283.62 L475.63 284.87 L474.72 286.12 L473.84 287.37 L472.97 288.62 L472.12 289.88 L471.29 291.13 L470.48 292.38 L469.69 293.63 L468.92 294.88 L468.17 296.13 L467.44 297.39 L466.73 298.64 L466.03 299.89 L465.36 301.14 L464.71 302.4 L464.07 303.65 L463.46 304.9 L462.87 306.15 L462.29 307.41 L461.74 308.66 L461.2 309.91 L460.69 311.16 L460.19 312.42 L459.72 313.67 L459.26 314.92 L458.83 316.17 L458.41 317.43 L458.02 318.68 L457.64 319.93 L457.29 321.19 L456.95 322.44 L456.64 323.69 L456.34 324.94 L456.07 326.2 L455.81 327.45 L455.58 328.7 L455.37 329.96 L455.17 331.21 L455 332.46 L454.84 333.71 L454.71 334.97 L454.6 336.22 L454.5 337.47 L454.43 338.72 L454.38 339.97 L454.35 341.23 L454.33 342.48 L454.34 343.73 L454.37 344.98 L454.42 346.24 L454.48 347.49 L454.57 348.74 L454.68 349.99 L454.81 351.24 L454.96 352.49 L455.13 353.74 L455.31 354.99 L455.52 356.25 L455.75 357.5 L456 358.75 L456.27 360 L456.56 361.25 L456.87 362.5 L457.19 363.75 L457.54 365 L457.91 366.25 L458.3 367.5 L458.71 368.75 L459.13 369.99 L459.58 371.24 L460.05 372.49 L460.53 373.74 L461.04 374.99 L461.56 376.24 L462.11 377.48 L462.67 378.73 L463.26 379.98 L463.86 381.22 L464.49 382.47 L465.13 383.72 L465.79 384.96 L466.47 386.21 L467.17 387.45 L467.89 388.7 L468.63 389.94 L469.38 391.19 L470.16 392.43 L470.95 393.68 L471.77 394.92 L472.6 396.16 L473.45 397.41 L474.32 398.65 L475.21 399.89 L476.12 401.13 L477.04 402.37 L477.99 403.61 L478.95 404.85 L479.93 406.09 L480.93 407.33 L481.94 408.57 L482.98 409.81 L484.03 411.05 L485.1 412.29 L486.19 413.52 L487.29 414.76 L488.42 416 L489.56 417.23 L490.72 418.47 L491.89 419.7 L493.08 420.94 L494.29 422.17 L495.52 423.4 L496.77 424.63 L498.03 425.87 L499.3 427.1 L500.6 428.33 L501.91 429.56 L503.23 430.78 L504.58 432.01 L505.94 433.24 L507.31 434.47 L508.7 435.69 L510.11 436.92 L511.53 438.14 L512.97 439.37 L514.43 440.59 L515.9 441.81 L517.38 443.03 L518.88 444.25 L520.39 445.47 L521.92 446.69 L523.47 447.91 L525.03 449.12 L526.6 450.34 L528.19 451.55 L529.79 452.77 L531.4 453.98 L533.03 455.19 L534.67 456.4 L536.33 457.61 L538 458.82 L539.68 460.02 L541.37 461.23 L543.08 462.43 L544.8 463.64 L546.54 464.84 L548.28 466.04 L550.04 467.24 L551.81 468.43 L553.59 469.63 L555.38 470.82 L557.18 472.02 L558.99 473.21 L560.82 474.4 L562.65 475.58"/>
<path d="M864.5 86.5 L864.14 85.58 L863.78 84.67 L863.41 83.78 L863.02 82.91 L862.63 82.05 L862.23 81.21 L861.81 80.38 L861.38 79.58 L860.94 78.79 L860.48 78.03 L860 77.29 L859.51 76.57 L859 75.87 L858.46 75.2 L857.91 74.56 L857.33 73.94 L856.72 73.35 L856.09 72.79 L855.43 72.25 L854.74 71.75 L854.01 71.28 L853.25 70.85 L852.45 70.45 L851.61 70.08 L850.74 69.75 L849.81 69.46 L848.85 69.21 L847.83 68.99 L846.77 68.81 L845.65 68.67 L844.48 68.58 L843.26 68.52 L841.98 68.5 L840.64 68.52 L839.25 68.58 L837.79 68.69 L836.28 68.83 L834.7 69.01 L833.06 69.23 L831.36 69.49 L829.6 69.79 L827.78 70.12 L825.9 70.49 L823.96 70.9 L821.96 71.34 L819.9 71.81 L817.78 72.31 L815.61 72.85 L813.38 73.41 L811.1 74.01 L808.77 74.63 L806.39 75.28 L803.96 75.95 L801.48 76.65 L798.96 77.37 L796.39 78.12 L793.78 78.89 L791.14 79.67 L788.45 80.48 L785.73 81.3 L782.97 82.15 L780.18 83.01 L777.35 83.89 L774.5 84.78 L771.62 85.69 L768.71 86.61 L765.77 87.54 L762.81 88.49 L759.82 89.45 L756.82 90.43 L753.79 91.41 L750.74 92.41 L747.67 93.41 L744.59 94.43 L741.49 95.45 L738.38 96.48 L735.25 97.53 L732.11 98.58 L728.95 99.64 L725.78 100.7 L722.61 101.77 L719.42 102.85 L716.23 103.94 L713.02 105.03 L709.81 106.13 L706.6 107.24 L703.37 108.35 L700.15 109.46 L696.91 110.58 L693.68 111.71 L690.44 112.84 L687.2 113.97 L683.95 115.11 L680.71 116.25 L677.46 117.4 L674.22 118.55 L670.97 119.71 L667.72 120.87 L664.48 122.03 L661.24 123.19 L657.99 124.36 L654.76 125.53 L651.52 126.71 L648.29 127.89 L645.06 129.07 L641.84 130.25 L638.62 131.43 L635.4 132.62 L632.19 133.81 L628.99 135.01 L625.79 136.2 L622.6 137.4 L619.42 138.6 L616.24 139.8 L613.07 141 L609.91 142.21 L606.76 143.42 L603.61 144.62 L600.48 145.84 L597.35 147.05 L594.23 148.26 L591.12 149.48 L588.03 150.69 L584.94 151.91 L581.86 153.13 L578.79 154.36 L575.74 155.58 L572.69 156.8 L569.66 158.03 L566.64 159.26 L563.63 160.48 L560.63 161.71 L557.65 162.94 L554.67 164.18 L551.71 165.41 L548.77 166.64 L545.84 167.88 L542.92 169.11 L540.01 170.35 L537.12 171.59 L534.24 172.83 L531.38 174.07 L528.53 175.31 L525.7 176.55 L522.88 177.79 L520.08 179.03 L517.29 180.28 L514.52 181.52 L511.76 182.77 L509.02 184.01 L506.3 185.26 L503.59 186.51 L500.9 187.75 L498.23 189 L495.57 190.25 L492.93 191.5 L490.31 192.75 L487.7 194 L485.11 195.25 L482.54 196.51 L479.99 197.76 L477.46 199.01 L474.94 200.27 L472.44 201.52 L469.97 202.78 L467.51 204.03 L465.06 205.29 L462.64 206.54 L460.24 207.8 L457.86 209.06 L455.49 210.32 L453.15 211.57 L450.82 212.83 L448.52 214.09 L446.24 215.35 L443.97 216.61 L441.73 217.87 L439.5 219.13 L437.3 220.39 L435.12 221.65 L432.96 222.92 L430.82 224.18 L428.7 225.44 L426.6 226.7 L424.52 227.97 L422.47 229.23 L420.43 230.49 L418.42 231.76 L416.43 233.02 L414.46 234.29 L412.52 235.55 L410.59 236.81 L408.69 238.08 L406.81 239.35 L404.96 240.61 L403.12 241.88 L401.31 243.14 L399.52 244.41 L397.76 245.68 L396.02 246.94 L394.3 248.21 L392.6 249.48 L390.93 250.75 L389.28 252.01 L387.65 253.28 L386.05 254.55 L384.47 255.82 L382.91 257.09 L381.38 258.35 L379.88 259.62 L378.39 260.89 L376.93 262.16 L375.5 263.43 L374.09 264.7 L372.7 265.97 L371.34 267.24 L370 268.51 L368.69 269.78 L367.4 271.05 L366.14 272.32 L364.9 273.59 L363.68 274.86 L362.49 276.13 L361.33 277.4 L360.19 278.67 L359.08 279.94 L357.99 281.21 L356.92 282.48 L355.89 283.76 L354.87 285.03 L353.89 286.3 L352.92 287.57 L351.99 288.84 L351.08 290.11 L350.19 291.39 L349.33 292.66 L348.5 293.93 L347.69 295.2 L346.9 296.47 L346.15 297.74 L345.42 299.02 L344.71 300.29 L344.03 301.56 L343.38 302.83 L342.75 304.11 L342.15 305.38 L341.57 306.65 L341.02 307.92 L340.5 309.2 L340 310.47 L339.53 311.74 L339.09 313.01 L338.67 314.28 L338.28 315.56 L337.91 316.83 L337.57 318.1 L337.26 319.37 L336.97 320.65 L336.71 321.92 L336.47 323.19 L336.26 324.47 L336.08 325.74 L335.93 327.01 L335.8 328.28 L335.69 329.55 L335.62 330.83 L335.57 332.1 L335.54 333.37 L335.55 334.64 L335.57 335.92 L335.63 337.19 L335.71 338.46 L335.82 339.73 L335.95 341.01 L336.11 342.28 L336.3 343.55 L336.51 344.82 L336.75 346.09 L337.02 347.37 L337.31 348.64 L337.63 349.91 L337.97 351.18 L338.34 352.45 L338.74 353.72 L339.16 354.99 L339.61 356.27 L340.09 357.54 L340.59 358.81 L341.11 360.08 L341.67 361.35 L342.25 362.62 L342.85 363.89 L343.48 365.16 L344.14 366.43 L344.82 367.7 L345.53 368.97 L346.26 370.24 L347.02 371.51 L347.81 372.78 L348.62 374.05 L349.45 375.32 L350.32 376.59 L351.2 377.86 L352.12 379.13 L353.05 380.4 L354.02 381.67 L355 382.94 L356.02 384.21 L357.06 385.47 L358.12 386.74 L359.21 388.01 L360.32 389.28 L361.46 390.54 L362.62 391.81 L363.81 393.08 L365.02 394.35 L366.26 395.61 L367.52 396.88 L368.8 398.15 L370.11 399.41 L371.45 400.68 L372.8 401.94 L374.19 403.21 L375.59 404.47 L377.02 405.74"/>
<path d="M1425.06 407 L1422.95 408.27 L1420.8 409.53 L1418.64 410.79 L1416.45 412.06 L1414.23 413.32 L1412 414.58 L1409.74 415.84 L1407.46 417.11 L1405.15 418.37 L1402.83 419.63 L1400.48 420.89 L1398.11 422.15 L1395.72 423.41 L1393.3 424.67 L1390.86 425.93 L1388.41 427.19 L1385.93 428.45 L1383.42 429.71 L1380.9 430.96 L1378.36 432.22 L1375.8 433.48 L1373.21 434.73 L1370.61 435.99 L1367.98 437.25 L1365.33 438.5 L1362.67 439.75 L1359.98 441.01 L1357.28 442.26 L1354.55 443.51"/>
<path d="M873.3 88.7 L873.13 87.58 L872.96 86.48 L872.78 85.38 L872.61 84.28 L872.43 83.2 L872.24 82.13 L872.05 81.06 L871.86 80.01 L871.66 78.97 L871.46 77.93 L871.24 76.92 L871.03 75.91 L870.8 74.92 L870.57 73.94 L870.32 72.98 L870.07 72.04 L869.8 71.12 L869.52 70.21 L869.23 69.32 L868.92 68.46 L868.59 67.62 L868.24 66.81 L867.88 66.02 L867.48 65.25 L867.07 64.52 L866.62 63.82 L866.14 63.15 L865.63 62.52 L865.09 61.93 L864.5 61.37 L863.87 60.85 L863.19 60.38 L862.46 59.95 L861.68 59.57 L860.83 59.23 L859.93 58.95 L858.96 58.71 L857.91 58.53 L856.8 58.4 L855.61 58.32 L854.34 58.3 L852.99 58.33 L851.55 58.41 L850.03 58.55 L848.43 58.74 L846.73 58.98 L844.95 59.28 L843.09 59.62 L841.14 60.01 L839.11 60.44 L836.99 60.92 L834.8 61.44 L832.52 62.01 L830.17 62.61 L827.75 63.25 L825.26 63.92 L822.71 64.62 L820.09 65.36 L817.41 66.13 L814.67 66.92 L811.88 67.74 L809.04 68.58 L806.14 69.45 L803.21 70.34 L800.23 71.25 L797.2 72.17 L794.15 73.12 L791.05 74.08 L787.92 75.06 L784.76 76.05 L781.57 77.06 L778.35 78.08 L775.11 79.11 L771.84 80.16 L768.56 81.21 L765.25 82.28 L761.92 83.35 L758.57 84.44 L755.21 85.53 L751.84 86.63 L748.45 87.74 L745.04 88.86 L741.63 89.98 L738.21 91.11 L734.77 92.25 L731.33 93.39 L727.88 94.54 L724.42 95.69 L720.96 96.85 L717.5 98.01 L714.03 99.18 L710.55 100.35 L707.07 101.53 L703.59 102.71 L700.11 103.9 L696.63 105.08 L693.15 106.27 L689.67 107.47 L686.19 108.67 L682.71 109.87 L679.23 111.07 L675.76 112.28 L672.29 113.49 L668.82 114.7 L665.36 115.91 L661.9 117.13 L658.44 118.35 L654.99 119.57 L651.55 120.79 L648.11 122.02 L644.68 123.24 L641.25 124.47 L637.83 125.7 L634.42 126.94 L631.02 128.17 L627.62 129.4 L624.24 130.64 L620.86 131.88 L617.49 133.12 L614.13 134.36 L610.78 135.6 L607.44 136.85 L604.11 138.09 L600.79 139.34 L597.48 140.59 L594.18 141.83 L590.9 143.08 L587.62 144.33 L584.36 145.59 L581.11 146.84 L577.87 148.09 L574.64 149.35 L571.43 150.6 L568.23 151.86 L565.04 153.12 L561.87 154.37 L558.71 155.63 L555.56 156.89 L552.43 158.15 L549.31 159.41 L546.21 160.67 L543.12 161.94 L540.05 163.2 L536.99 164.46 L533.95 165.73 L530.92 166.99 L527.91 168.26 L524.91 169.52 L521.94 170.79 L518.97 172.05 L516.03 173.32 L513.1 174.59 L510.19 175.86 L507.29 177.13 L504.41 178.4 L501.55 179.67 L498.71 180.94 L495.89 182.21 L493.08 183.48 L490.29 184.75 L487.52 186.02 L484.77 187.3 L482.04 188.57 L479.32 189.84 L476.63 191.11 L473.95 192.39 L471.3 193.66 L468.66 194.94 L466.04 196.21 L463.45 197.49 L460.87 198.76 L458.31 200.04 L455.77 201.32 L453.26 202.59 L450.76 203.87 L448.29 205.15 L445.83 206.42 L443.4 207.7 L440.98 208.98 L438.59 210.26 L436.22 211.53 L433.87 212.81 L431.55 214.09 L429.24 215.37 L426.96 216.65 L424.7 217.93 L422.46 219.21 L420.24 220.49 L418.05 221.77 L415.87 223.05 L413.72 224.33 L411.6 225.61 L409.49 226.89 L407.41 228.17 L405.35 229.45 L403.32 230.73 L401.31 232.01 L399.32 233.3 L397.36 234.58 L395.42 235.86 L393.5 237.14 L391.61 238.42 L389.74 239.71 L387.89 240.99 L386.07 242.27 L384.27 243.55 L382.5 244.84 L380.75 246.12 L379.03 247.4 L377.33 248.69 L375.66 249.97 L374.01 251.25 L372.38 252.54 L370.78 253.82 L369.21 255.11 L367.66 256.39 L366.14 257.67 L364.64 258.96 L363.16 260.24 L361.72 261.53 L360.29 262.81 L358.9 264.1 L357.53 265.38 L356.18 266.66 L354.86 267.95 L353.57 269.23 L352.3 270.52 L351.06 271.8 L349.84 273.09 L348.65 274.37 L347.49 275.66 L346.35 276.95 L345.24 278.23 L344.16 279.52 L343.1 280.8 L342.07 282.09 L341.07 283.37 L340.09 284.66 L339.14 285.94 L338.21 287.23 L337.31 288.52 L336.44 289.8 L335.6 291.09 L334.78 292.37 L333.99 293.66 L333.23 294.94 L332.49 296.23 L331.78 297.52 L331.1 298.8 L330.45 300.09 L329.82 301.38 L329.22 302.66 L328.65 303.95 L328.1 305.23 L327.58 306.52 L327.09 307.81 L326.63 309.09 L326.19 310.38 L325.78 311.67 L325.4 312.95 L325.04 314.24 L324.72 315.52 L324.42 316.81 L324.15 318.1 L323.9 319.38 L323.68 320.67 L323.49 321.96 L323.33 323.24 L323.2 324.53 L323.09 325.81 L323.01 327.1 L322.96 328.39 L322.94 329.67 L322.94 330.96 L322.97 332.25 L323.03 333.53 L323.11 334.82 L323.23 336.1 L323.37 337.39 L323.54 338.68 L323.73 339.96 L323.96 341.25 L324.21 342.54 L324.49 343.82 L324.79 345.11 L325.13 346.39 L325.49 347.68 L325.87 348.97 L326.29 350.25 L326.73 351.54 L327.2 352.82 L327.7 354.11 L328.22 355.39 L328.78 356.68 L329.36 357.97 L329.96 359.25 L330.6 360.54 L331.26 361.82 L331.94 363.11 L332.66 364.39"/>
<path d="M1470.23 365.68 L1469.01 366.96 L1467.77 368.25 L1466.5 369.53 L1465.2 370.82 L1463.88 372.1 L1462.53 373.39 L1461.15 374.67 L1459.75 375.96 L1458.32 377.24 L1456.86 378.53 L1455.38 379.81 L1453.87 381.09 L1452.34 382.38 L1450.78 383.66 L1449.19 384.95 L1447.58 386.23 L1445.94 387.51 L1444.28 388.8 L1442.59 390.08 L1440.88 391.37 L1439.14 392.65 L1437.37 393.93 L1435.58 395.21 L1433.77 396.5 L1431.92 397.78 L1430.06 399.06 L1428.17 400.35 L1426.25 401.63 L1424.32 402.91 L1422.35 404.19 L1420.36 405.47 L1418.35 406.76 L1416.31 408.04 L1414.25 409.32 L1412.17 410.6 L1410.06 411.88 L1407.93 413.16 L1405.77 414.44 L1403.59 415.72 L1401.39 417 L1399.17 418.28 L1396.92 419.56 L1394.64 420.84 L1392.35 422.12 L1390.03 423.4 L1387.69 424.68 L1385.33 425.96 L1382.94 427.24 L1380.54 428.52 L1378.11 429.8 L1375.66 431.07 L1373.18 432.35 L1370.69 433.63 L1368.17 434.91 L1365.64 436.18 L1363.08 437.46 L1360.5 438.74 L1357.9 440.01 L1355.27 441.29"/>
<path d="M766 93.3 L763.41 94.09 L760.79 94.89 L758.14 95.71 L755.47 96.54 L752.77 97.38 L750.05 98.24 L747.31 99.11 L744.54 100 L741.76 100.89 L738.95 101.8 L736.13 102.72 L733.29 103.64 L730.43 104.58 L727.55 105.53 L724.66 106.49 L721.76 107.46 L718.84 108.43 L715.91 109.42 L712.96 110.41 L710.01 111.41 L707.04 112.42 L704.07 113.43 L701.08 114.46 L698.09 115.49 L695.09 116.52 L692.08 117.56 L689.06 118.61 L686.04 119.67 L683.02 120.73 L679.98 121.79 L676.95 122.87 L673.91 123.94 L670.87 125.02 L667.82 126.11 L664.78 127.2 L661.73 128.3 L658.68 129.4 L655.63 130.5 L652.58 131.61 L649.53 132.73 L646.48 133.84 L643.43 134.96 L640.38 136.09 L637.34 137.21 L634.3 138.34 L631.26 139.48 L628.22 140.62 L625.19 141.76 L622.16 142.9 L619.14 144.05 L616.12 145.2 L613.11 146.35 L610.1 147.5 L607.1 148.66 L604.1 149.82 L601.11 150.98 L598.13 152.15 L595.15 153.31 L592.18 154.48 L589.22 155.66 L586.27 156.83 L583.33 158 L580.39 159.18 L577.46 160.36 L574.55 161.54 L571.64 162.73 L568.74 163.91 L565.85 165.1 L562.97 166.29 L560.11 167.48 L557.25 168.67 L554.4 169.86 L551.57 171.06 L548.75 172.25 L545.94 173.45 L543.14 174.65 L540.35 175.85 L537.57 177.06 L534.81 178.26 L532.06 179.46 L529.33 180.67 L526.61 181.88 L523.9 183.09 L521.2 184.3 L518.52 185.51 L515.85 186.72 L513.2 187.93 L510.56 189.14 L507.94 190.36 L505.33 191.58 L502.74 192.79 L500.16 194.01 L497.6 195.23 L495.05 196.45 L492.52 197.67 L490.01 198.89 L487.51 200.11 L485.03 201.34 L482.56 202.56 L480.11 203.79 L477.68 205.01 L475.27 206.24 L472.87 207.47 L470.49 208.69 L468.13 209.92 L465.78 211.15 L463.46 212.38 L461.15 213.61 L458.86 214.84 L456.59 216.07 L454.33 217.31 L452.1 218.54 L449.88 219.77 L447.69 221.01 L445.51 222.24 L443.35 223.48 L441.21 224.71 L439.09 225.95 L436.99 227.19 L434.91 228.42 L432.85 229.66 L430.81 230.9 L428.79 232.14 L426.79 233.38 L424.82 234.62 L422.86 235.86 L420.92 237.1 L419 238.34 L417.11 239.58 L415.23 240.82 L413.38 242.07 L411.54 243.31 L409.73 244.55 L407.94 245.79 L406.17 247.04 L404.43 248.28 L402.7 249.53 L401 250.77 L399.32 252.02 L397.66 253.26 L396.02 254.51 L394.41 255.75 L392.81 257 L391.24 258.25 L389.7 259.49 L388.17 260.74 L386.67 261.99 L385.19 263.23 L383.74 264.48 L382.3 265.73 L380.89 266.98 L379.51 268.23 L378.14 269.47 L376.8 270.72 L375.49 271.97 L374.19 273.22 L372.92 274.47 L371.68 275.72 L370.45 276.97 L369.26 278.22 L368.08 279.47 L366.93 280.72 L365.8 281.97 L364.7 283.22 L363.62 284.47 L362.57 285.72 L361.54 286.98 L360.53 288.23 L359.55 289.48 L358.59 290.73 L357.66 291.98 L356.75 293.23 L355.86 294.48 L355 295.74 L354.17 296.99 L353.36 298.24 L352.57 299.49 L351.81 300.74 L351.07 302 L350.36 303.25 L349.68 304.5 L349.01 305.75 L348.38 307.01 L347.77 308.26 L347.18 309.51 L346.62 310.76 L346.08 312.02 L345.57 313.27 L345.08 314.52 L344.62 315.78 L344.19 317.03 L343.77 318.28 L343.39 319.53 L343.03 320.79 L342.69 322.04 L342.38 323.29 L342.1 324.55 L341.84 325.8 L341.6 327.05 L341.39 328.3 L341.21 329.56 L341.05 330.81 L340.92 332.06 L340.81 333.31 L340.73 334.57 L340.67 335.82 L340.64 337.07 L340.63 338.32 L340.65 339.58 L340.69 340.83 L340.76 342.08 L340.86 343.33 L340.98 344.58 L341.12 345.84 L341.29 347.09 L341.49 348.34 L341.71 349.59 L341.95 350.84 L342.23 352.09 L342.52 353.35 L342.84 354.6 L343.19 355.85 L343.56 357.1 L343.96 358.35 L344.38 359.6 L344.82 360.85 L345.29 362.1 L345.79 363.35 L346.31 364.6 L346.86 365.85 L347.43 367.1 L348.02 368.35 L348.64 369.6 L349.29 370.85 L349.96 372.09 L350.65 373.34 L351.37 374.59 L352.11 375.84 L352.88 377.09 L353.67 378.33 L354.49 379.58 L355.33 380.83 L356.19 382.07 L357.08 383.32 L357.99 384.57 L358.93 385.81 L359.89 387.06 L360.87 388.3 L361.88 389.55 L362.91 390.79 L363.96 392.04 L365.04 393.28 L366.14 394.52 L367.27 395.77 L368.42 397.01 L369.59 398.25 L370.79 399.5 L372 400.74 L373.25 401.98 L374.51 403.22 L375.8 404.46 L377.11 405.7"/>
<path d="M1425.2 406.94 L1423.04 408.18 L1420.85 409.42 L1418.63 410.66 L1416.4 411.89 L1414.14 413.13 L1411.86 414.37 L1409.56 415.6 L1407.24 416.84 L1404.9 418.07 L1402.54 419.31 L1400.15 420.54 L1397.74 421.78 L1395.32 423.01 L1392.87 424.24 L1390.4 425.47 L1387.92 426.7 L1385.41 427.93 L1382.88 429.16 L1380.33 430.39 L1377.77 431.62 L1375.18 432.85 L1372.57 434.08 L1369.95 435.3 L1367.3 436.53 L1364.64 437.75 L1361.96 438.98 L1359.26 440.2 L1356.55 441.42"/>
<path d="M787.8 136.7 L786.23 137.04 L784.65 137.39 L783.05 137.75 L781.45 138.12 L779.83 138.51 L778.2 138.91 L776.56 139.32 L774.91 139.74 L773.25 140.18 L771.58 140.62 L769.9 141.08 L768.21 141.55 L766.5 142.03 L764.79 142.52 L763.06 143.03 L761.33 143.54 L759.58 144.06 L757.83 144.6 L756.06 145.14 L754.29 145.7 L752.51 146.26 L750.71 146.84 L748.91 147.42 L747.1 148.02 L745.28 148.62 L743.45 149.24 L741.61 149.86 L739.77 150.49 L737.92 151.13 L736.05 151.78 L734.19 152.44 L732.31 153.1 L730.43 153.78 L728.54 154.46 L726.64 155.15 L724.73 155.85 L722.82 156.56 L720.91 157.28 L718.98 158 L717.05 158.73 L715.12 159.46 L713.18 160.21 L711.23 160.96 L709.28 161.72 L707.33 162.48 L705.37 163.26 L703.4 164.03 L701.43 164.82 L699.46 165.61 L697.49 166.41 L695.51 167.21 L693.52 168.02 L691.54 168.84 L689.55 169.66 L687.56 170.49 L685.56 171.32 L683.57 172.16 L681.57 173 L679.57 173.85 L677.57 174.7 L675.57 175.56 L673.56 176.43 L671.56 177.3 L669.55 178.17 L667.55 179.05 L665.54 179.93 L663.54 180.82 L661.53 181.72 L659.52 182.61 L657.52 183.51 L655.51 184.42 L653.51 185.33 L651.51 186.24 L649.51 187.16 L647.51 188.08 L645.51 189.01 L643.51 189.94 L641.52 190.87 L639.53 191.81 L637.54 192.75 L635.55 193.7 L633.57 194.64 L631.59 195.59 L629.61 196.55 L627.63 197.51 L625.66 198.47 L623.7 199.43 L621.73 200.4 L619.78 201.37 L617.82 202.34 L615.87 203.32 L613.93 204.3 L611.99 205.28 L610.05 206.27 L608.12 207.25 L606.2 208.25 L604.28 209.24 L602.36 210.23 L600.46 211.23 L598.55 212.23 L596.66 213.24 L594.77 214.24 L592.89 215.25 L591.01 216.26 L589.14 217.27 L587.28 218.29 L585.42 219.3 L583.58 220.32 L581.74 221.34 L579.9 222.37 L578.08 223.39 L576.26 224.42 L574.45 225.45 L572.65 226.48 L570.86 227.51 L569.07 228.54 L567.29 229.58 L565.53 230.62 L563.77 231.66 L562.02 232.7 L560.28 233.74 L558.55 234.79 L556.83 235.84 L555.11 236.88 L553.41 237.93 L551.72 238.98 L550.03 240.04 L548.36 241.09 L546.7 242.15 L545.04 243.2 L543.4 244.26 L541.77 245.32 L540.15 246.38 L538.54 247.44 L536.93 248.51 L535.35 249.57 L533.77 250.64 L532.2 251.71 L530.64 252.77 L529.1 253.84 L527.57 254.91 L526.04 255.99 L524.53 257.06 L523.04 258.13 L521.55 259.21 L520.08 260.28 L518.61 261.36 L517.16 262.44 L515.73 263.51 L514.3 264.59 L512.89 265.67 L511.49 266.76 L510.1 267.84 L508.72 268.92 L507.36 270 L506.01 271.09 L504.67 272.17 L503.35 273.26 L502.04 274.35 L500.74 275.43 L499.46 276.52 L498.19 277.61 L496.93 278.7 L495.69 279.79 L494.46 280.88 L493.24 281.97 L492.04 283.06 L490.85 284.15 L489.68 285.25 L488.51 286.34 L487.37 287.43 L486.24 288.53 L485.12 289.62 L484.01 290.72 L482.92 291.81 L481.85 292.91 L480.78 294.01 L479.74 295.1 L478.7 296.2 L477.69 297.3 L476.68 298.39 L475.69 299.49 L474.72 300.59 L473.76 301.69 L472.82 302.79 L471.89 303.89 L470.97 304.99 L470.07 306.09 L469.19 307.19 L468.32 308.29 L467.46 309.39 L466.62 310.49 L465.8 311.59 L464.99 312.69 L464.2 313.79 L463.42 314.89 L462.65 315.99 L461.9 317.09 L461.17 318.19 L460.45 319.29 L459.75 320.39 L459.07 321.49 L458.39 322.59 L457.74 323.7 L457.1 324.8 L456.47 325.9 L455.86 327 L455.27 328.1 L454.69 329.2 L454.13 330.3 L453.58 331.4 L453.05 332.5 L452.53 333.6 L452.03 334.7 L451.55 335.8 L451.08 336.9 L450.62 338 L450.19 339.09 L449.76 340.19 L449.36 341.29 L448.97 342.39 L448.59 343.49 L448.23 344.58 L447.89 345.68 L447.56 346.78 L447.24 347.87 L446.95 348.97 L446.66 350.06 L446.4 351.16 L446.15 352.25 L445.91 353.35 L445.69 354.44 L445.48 355.53 L445.3 356.63 L445.12 357.72 L444.96 358.81 L444.82 359.9 L444.69 360.99 L444.58 362.08 L444.48 363.17 L444.4 364.26 L444.33 365.34 L444.28 366.43 L444.24 367.52 L444.22 368.6 L444.21 369.69 L444.22 370.77 L444.25 371.85 L444.28 372.93 L444.34 374.02 L444.4 375.1 L444.49 376.18 L444.58 377.25 L444.69 378.33 L444.82 379.41 L444.96 380.49 L445.12 381.56 L445.28 382.63 L445.47 383.71 L445.66 384.78 L445.88 385.85 L446.1 386.92 L446.34 387.99 L446.6 389.06 L446.86 390.12 L447.14 391.19 L447.44 392.25 L447.75 393.31 L448.07 394.37 L448.4 395.43 L448.75 396.49 L449.11 397.55 L449.49 398.61 L449.87 399.66 L450.27 400.71 L450.69 401.77 L451.11 402.82 L451.55 403.86 L452 404.91 L452.46 405.96 L452.94 407 L453.42 408.04 L453.92 409.08 L454.43 410.12 L454.96 411.16 L455.49 412.19 L456.03 413.23 L456.59 414.26 L457.16 415.29 L457.74 416.32 L458.33 417.34 L458.93 418.36 L459.54 419.39 L460.16 420.41 L460.79 421.42 L461.43 422.44 L462.08 423.45 L462.74 424.46 L463.41 425.47 L464.09 426.48 L464.77 427.48 L465.47 428.48 L466.18 429.48 L466.89 430.48 L467.61 431.47 L468.35 432.46 L469.08 433.45 L469.83 434.44 L470.58 435.42 L471.35 436.4 L472.11 437.38 L472.89 438.35 L473.67 439.32 L474.46 440.29 L475.25 441.26 L476.05 442.22 L476.86 443.18 L477.67 444.13 L478.49 445.08 L479.31 446.03 L480.14 446.98 L480.97 447.92 L481.8 448.86 L482.64 449.79 L483.48 450.72 L484.33 451.65 L485.17 452.57 L486.02 453.49 L486.88 454.41 L487.73 455.32 L488.59 456.23 L489.44 457.13 L490.3 458.03 L491.16 458.92 L492.02 459.81 L492.88 460.7"/>
<path d="M829 136 L828.53 135.14 L828.06 134.29 L827.59 133.44 L827.11 132.6 L826.63 131.78 L826.15 130.96 L825.66 130.15 L825.17 129.35 L824.67 128.55 L824.16 127.77 L823.65 127 L823.14 126.24 L822.62 125.49 L822.09 124.74 L821.55 124.01 L821.01 123.29 L820.46 122.59 L819.91 121.89 L819.34 121.2 L818.77 120.53 L818.19 119.87 L817.59 119.22 L816.99 118.59 L816.38 117.96 L815.76 117.35 L815.13 116.76 L814.48 116.18 L813.82 115.61 L813.15 115.06 L812.47 114.52 L811.77 114 L811.06 113.49 L810.34 113 L809.6 112.52 L808.84 112.06 L808.07 111.62 L807.28 111.19 L806.48 110.78 L805.65 110.39 L804.81 110.01 L803.95 109.65 L803.07 109.31 L802.17 108.99 L801.25 108.69 L800.31 108.4 L799.35 108.14 L798.36 107.89 L797.35 107.66 L796.32 107.45 L795.27 107.26 L794.19 107.09 L793.08 106.94 L791.95 106.81 L790.8 106.7 L789.62 106.61 L788.41 106.54 L787.17 106.48 L785.91 106.45 L784.62 106.44 L783.31 106.45 L781.96 106.48 L780.59 106.53 L779.18 106.6 L777.75 106.69 L776.29 106.8 L774.8 106.93 L773.28 107.08 L771.73 107.25 L770.15 107.43 L768.54 107.64 L766.91 107.87 L765.24 108.11 L763.54 108.38 L761.81 108.66 L760.06 108.96 L758.27 109.28 L756.46 109.62 L754.61 109.98 L752.74 110.35 L750.84 110.74 L748.91 111.15 L746.95 111.58 L744.97 112.02 L742.96 112.48 L740.92 112.95 L738.85 113.44 L736.76 113.95 L734.64 114.47 L732.5 115.01 L730.33 115.56 L728.14 116.13 L725.93 116.71 L723.69 117.3 L721.42 117.91 L719.14 118.53 L716.83 119.16 L714.5 119.81 L712.15 120.47 L709.78 121.14 L707.39 121.83 L704.98 122.52 L702.55 123.23 L700.11 123.95 L697.64 124.68 L695.16 125.42 L692.66 126.17 L690.15 126.93 L687.62 127.7 L685.07 128.48 L682.51 129.27 L679.94 130.07 L677.35 130.88 L674.75 131.7 L672.13 132.53 L669.51 133.37 L666.87 134.21 L664.22 135.06 L661.56 135.92 L658.89 136.79 L656.22 137.67 L653.53 138.55 L650.83 139.44 L648.13 140.34 L645.42 141.24 L642.7 142.15 L639.97 143.07 L637.24 143.99 L634.51 144.92 L631.76 145.86 L629.02 146.8 L626.27 147.75 L623.51 148.7 L620.75 149.66 L617.99 150.62 L615.23 151.59 L612.46 152.57 L609.69 153.55 L606.92 154.53 L604.15 155.52 L601.38 156.52 L598.61 157.51 L595.84 158.52 L593.07 159.52 L590.3 160.54 L587.53 161.55 L584.76 162.57 L581.99 163.6 L579.23 164.62 L576.47 165.66 L573.71 166.69 L570.96 167.73 L568.21 168.77 L565.46 169.82 L562.72 170.87 L559.98 171.92 L557.25 172.98 L554.52 174.03 L551.8 175.1 L549.08 176.16 L546.37 177.23 L543.67 178.3 L540.97 179.37 L538.28 180.45 L535.6 181.53 L532.92 182.61 L530.25 183.7 L527.6 184.78 L524.94 185.87 L522.3 186.96 L519.67 188.06 L517.04 189.15 L514.43 190.25 L511.82 191.35 L509.23 192.46 L506.64 193.56 L504.07 194.67 L501.5 195.78 L498.95 196.89 L496.41 198 L493.88 199.12 L491.36 200.23 L488.85 201.35 L486.36 202.47 L483.87 203.6 L481.4 204.72 L478.94 205.84 L476.5 206.97 L474.06 208.1 L471.65 209.23 L469.24 210.36 L466.85 211.5 L464.47 212.63 L462.1 213.77 L459.75 214.9 L457.42 216.04 L455.1 217.18 L452.79 218.33 L450.5 219.47 L448.22 220.61 L445.96 221.76 L443.72 222.91 L441.49 224.05 L439.27 225.2 L437.08 226.35 L434.89 227.5 L432.73 228.66 L430.58 229.81 L428.45 230.96 L426.33 232.12 L424.23 233.28 L422.15 234.43 L420.09 235.59 L418.04 236.75 L416.01 237.91 L414 239.07 L412.01 240.24 L410.03 241.4 L408.08 242.56 L406.14 243.73 L404.22 244.89 L402.32 246.06 L400.43 247.23 L398.57 248.39 L396.72 249.56 L394.9 250.73 L393.09 251.9 L391.3 253.07 L389.53 254.24 L387.78 255.41 L386.05 256.59 L384.35 257.76 L382.66 258.93 L380.99 260.11 L379.34 261.28 L377.71 262.46 L376.1 263.63 L374.51 264.81 L372.94 265.99 L371.4 267.16 L369.87 268.34 L368.36 269.52 L366.88 270.7 L365.42 271.88 L363.97 273.06 L362.55 274.24 L361.15 275.42 L359.78 276.6 L358.42 277.78 L357.08 278.96 L355.77 280.15 L354.48 281.33 L353.21 282.51 L351.96 283.7 L350.73 284.88 L349.53 286.06 L348.35 287.25 L347.19 288.43 L346.05 289.62 L344.93 290.8 L343.84 291.99 L342.77 293.17 L341.72 294.36 L340.7 295.54 L339.69 296.73 L338.71 297.92 L337.76 299.1 L336.82 300.29 L335.91 301.48 L335.02 302.66 L334.15 303.85 L333.31 305.04 L332.49 306.23 L331.69 307.41 L330.92 308.6 L330.17 309.79 L329.44 310.98 L328.74 312.16 L328.06 313.35 L327.4 314.54 L326.76 315.73 L326.15 316.92 L325.56 318.1 L325 319.29 L324.46 320.48 L323.94 321.67 L323.45 322.86 L322.98 324.05 L322.53 325.23 L322.11 326.42 L321.71 327.61 L321.33 328.8 L320.98 329.99 L320.65 331.17 L320.34 332.36 L320.06 333.55 L319.8 334.74 L319.57 335.92 L319.35 337.11 L319.17 338.3"/>
<path d="M1484.41 339.48 L1483.47 340.67 L1482.5 341.86 L1481.52 343.04 L1480.5 344.23 L1479.47 345.42 L1478.41 346.6 L1477.33 347.79 L1476.22 348.97 L1475.09 350.16 L1473.94 351.34 L1472.77 352.53 L1471.57 353.71 L1470.35 354.9 L1469.11 356.08 L1467.84 357.26 L1466.55 358.45 L1465.24 359.63 L1463.91 360.81 L1462.56 361.99 L1461.18 363.17 L1459.78 364.35 L1458.36 365.54 L1456.91 366.72 L1455.45 367.9 L1453.96 369.08 L1452.45 370.25 L1450.92 371.43 L1449.37 372.61 L1447.8 373.79 L1446.2 374.97 L1444.58 376.14 L1442.95 377.32 L1441.29 378.49 L1439.61 379.67 L1437.91 380.84 L1436.19 382.02 L1434.45 383.19 L1432.69 384.36 L1430.9 385.54 L1429.1 386.71 L1427.28 387.88 L1425.44 389.05 L1423.58 390.22 L1421.69 391.38 L1419.79 392.55 L1417.87 393.72 L1415.93 394.89 L1413.97 396.05 L1412 397.22 L1410 398.38 L1407.98 399.54 L1405.95 400.71 L1403.9 401.87 L1401.82 403.03 L1399.73 404.19 L1397.63 405.35 L1395.5 406.5 L1393.36 407.66 L1391.2 408.82 L1389.02 409.97 L1386.83 411.12 L1384.61 412.28 L1382.38 413.43 L1380.14 414.58 L1377.88 415.73 L1375.6 416.88 L1373.3 418.02 L1370.99 419.17 L1368.66 420.31 L1366.32 421.46 L1363.96 422.6"/>
<path d="M816.5 151.3 L815.49 150.91 L814.47 150.53 L813.44 150.15 L812.41 149.79 L811.37 149.45 L810.33 149.11 L809.27 148.78 L808.22 148.46 L807.15 148.16 L806.08 147.87 L805 147.58 L803.91 147.31 L802.81 147.06 L801.71 146.81 L800.59 146.57 L799.47 146.35 L798.34 146.14 L797.2 145.94 L796.05 145.75 L794.9 145.58 L793.73 145.41 L792.55 145.26 L791.37 145.13 L790.17 145 L788.97 144.89 L787.75 144.78 L786.52 144.69 L785.29 144.62 L784.04 144.55 L782.78 144.5 L781.51 144.46 L780.23 144.44 L778.94 144.42 L777.63 144.42 L776.32 144.43 L774.99 144.46 L773.66 144.49 L772.31 144.54 L770.94 144.6 L769.57 144.67 L768.18 144.76 L766.79 144.86 L765.38 144.97 L763.95 145.09 L762.52 145.23 L761.07 145.38 L759.61 145.54 L758.14 145.71 L756.65 145.89 L755.16 146.09 L753.65 146.3 L752.13 146.52 L750.59 146.75 L749.04 146.99 L747.48 147.25 L745.91 147.52 L744.32 147.8 L742.73 148.09 L741.12 148.39 L739.49 148.7 L737.86 149.03 L736.21 149.36 L734.55 149.71 L732.88 150.07 L731.2 150.43 L729.5 150.81 L727.79 151.2 L726.08 151.6 L724.34 152.01 L722.6 152.43 L720.85 152.87 L719.08 153.31 L717.31 153.76 L715.52 154.22 L713.72 154.69 L711.91 155.17 L710.09 155.66 L708.26 156.16 L706.42 156.67 L704.57 157.19 L702.71 157.72 L700.84 158.26 L698.96 158.8 L697.07 159.36 L695.17 159.92 L693.26 160.49 L691.35 161.07 L689.42 161.66 L687.49 162.26 L685.55 162.86 L683.6 163.47 L681.64 164.09 L679.67 164.72 L677.7 165.36 L675.72 166 L673.73 166.65 L671.74 167.31 L669.73 167.98 L667.73 168.65 L665.71 169.33 L663.69 170.02 L661.67 170.71 L659.64 171.41 L657.6 172.12 L655.56 172.83 L653.51 173.55 L651.46 174.28 L649.4 175.01 L647.34 175.75 L645.28 176.5 L643.21 177.25 L641.14 178 L639.06 178.77 L636.99 179.53 L634.91 180.31 L632.82 181.09 L630.74 181.87 L628.65 182.66 L626.56 183.45 L624.47 184.25 L622.37 185.06 L620.28 185.87 L618.18 186.68 L616.08 187.5 L613.99 188.33 L611.89 189.16 L609.79 189.99 L607.69 190.83 L605.59 191.67 L603.5 192.52 L601.4 193.37 L599.3 194.23 L597.21 195.09 L595.11 195.95 L593.02 196.82 L590.93 197.69 L588.84 198.56 L586.75 199.44 L584.67 200.33 L582.59 201.21 L580.51 202.1 L578.43 203 L576.36 203.9 L574.29 204.8 L572.22 205.7 L570.15 206.61 L568.1 207.52 L566.04 208.43 L563.99 209.35 L561.94 210.27 L559.9 211.19 L557.86 212.12 L555.83 213.05 L553.8 213.98 L551.78 214.92 L549.76 215.86 L547.75 216.8 L545.75 217.74 L543.75 218.69 L541.76 219.63 L539.77 220.58 L537.79 221.54 L535.82 222.49 L533.85 223.45 L531.89 224.41 L529.94 225.38 L528 226.34 L526.06 227.31 L524.13 228.28 L522.21 229.25 L520.29 230.23 L518.39 231.2 L516.49 232.18 L514.61 233.16 L512.73 234.15 L510.85 235.13 L508.99 236.12 L507.14 237.1 L505.3 238.09 L503.46 239.09 L501.64 240.08 L499.82 241.08 L498.02 242.07 L496.22 243.07 L494.44 244.07 L492.66 245.07 L490.9 246.08 L489.15 247.08 L487.4 248.09 L485.67 249.1 L483.95 250.11 L482.24 251.12 L480.54 252.13 L478.85 253.15 L477.17 254.16 L475.51 255.18 L473.85 256.2 L472.21 257.22 L470.58 258.24 L468.96 259.26 L467.36 260.28 L465.76 261.3 L464.18 262.33 L462.61 263.36 L461.06 264.38 L459.51 265.41 L457.98 266.44 L456.46 267.47 L454.96 268.5 L453.46 269.54 L451.98 270.57 L450.52 271.6 L449.07 272.64 L447.63 273.67 L446.2 274.71 L444.79 275.75 L443.39 276.79 L442 277.83 L440.63 278.87 L439.28 279.91 L437.93 280.95 L436.6 281.99 L435.29 283.04 L433.99 284.08 L432.7 285.12 L431.43 286.17 L430.17 287.21 L428.93 288.26 L427.7 289.31 L426.49 290.35 L425.29 291.4 L424.11 292.45 L422.94 293.5 L421.79 294.55 L420.65 295.6 L419.52 296.65 L418.41 297.7 L417.32 298.75 L416.24 299.8 L415.18 300.85 L414.13 301.9 L413.1 302.96 L412.09 304.01 L411.09 305.06 L410.1 306.11 L409.13 307.17 L408.18 308.22 L407.24 309.27 L406.32 310.33 L405.41 311.38 L404.52 312.44 L403.65 313.49 L402.79 314.54 L401.94 315.6 L401.12 316.65 L400.31 317.71 L399.51 318.76 L398.73 319.82 L397.97 320.87 L397.22 321.93 L396.49 322.98 L395.78 324.04 L395.08 325.09 L394.4 326.14 L393.73 327.2 L393.08 328.25 L392.45 329.31 L391.83 330.36 L391.23 331.41 L390.65 332.47 L390.08 333.52 L389.53 334.57 L388.99 335.63 L388.47 336.68 L387.97 337.73 L387.48 338.78 L387.01 339.84 L386.56 340.89 L386.12 341.94 L385.7 342.99 L385.29 344.04 L384.91 345.09 L384.53 346.14 L384.18 347.19 L383.84 348.24 L383.51 349.28 L383.2 350.33 L382.91 351.38 L382.63 352.42 L382.37 353.47 L382.13 354.51 L381.9 355.56 L381.69 356.6 L381.49 357.65 L381.31 358.69 L381.15 359.73 L381 360.77 L380.87 361.81 L380.75 362.85 L380.65 363.89 L380.56 364.93 L380.49 365.97 L380.44 367 L380.4 368.04 L380.38 369.07 L380.37 370.11 L380.37 371.14 L380.4 372.17 L380.43 373.2 L380.49 374.23 L380.55 375.26 L380.64 376.29 L380.73 377.31 L380.84 378.34 L380.97 379.36 L381.11 380.39 L381.27 381.41 L381.44 382.43 L381.62 383.45 L381.82 384.47 L382.04 385.49 L382.26 386.5 L382.51 387.52 L382.76 388.53 L383.03 389.54 L383.31 390.55 L383.61 391.56 L383.92 392.57 L384.24 393.57 L384.58 394.58 L384.93 395.58 L385.29 396.58 L385.67 397.58 L386.05 398.58 L386.45 399.57 L386.87 400.57 L387.29 401.56 L387.73 402.55 L388.18 403.54 L388.64 404.53 L389.12 405.51 L389.6 406.5 L390.1 407.48 L390.61 408.46 L391.13 409.43 L391.66 410.41 L392.2 411.38 L392.75 412.35 L393.31 413.32 L393.89 414.29 L394.47 415.25 L395.06 416.21 L395.67 417.17 L396.28 418.13 L396.9 419.09"/>
<path d="M1404.76 420.04 L1402.34 420.99 L1399.91 421.93 L1397.47 422.88 L1395.02 423.82 L1392.56 424.76 L1390.1 425.69 L1387.63 426.63 L1385.15 427.56 L1382.67 428.48 L1380.18 429.41 L1377.68 430.33 L1375.17 431.25 L1372.66 432.16 L1370.15 433.08 L1367.63 433.98 L1365.1 434.89 L1362.57 435.79 L1360.03 436.69 L1357.49 437.59"/>
<path d="M791.7 157.3 L790.67 156.97 L789.64 156.64 L788.6 156.33 L787.56 156.03 L786.5 155.74 L785.44 155.46 L784.37 155.19 L783.29 154.93 L782.21 154.68 L781.11 154.44 L780.01 154.21 L778.9 153.99 L777.78 153.79 L776.65 153.59 L775.51 153.41 L774.37 153.24 L773.21 153.08 L772.05 152.93 L770.87 152.79 L769.68 152.66 L768.49 152.55 L767.28 152.44 L766.07 152.35 L764.84 152.27 L763.6 152.19 L762.35 152.14 L761.1 152.09 L759.83 152.05 L758.55 152.03 L757.25 152.01 L755.95 152.01 L754.64 152.02 L753.31 152.04 L751.97 152.08 L750.62 152.12 L749.26 152.18 L747.89 152.25 L746.5 152.33 L745.11 152.42 L743.7 152.52 L742.28 152.63 L740.85 152.76 L739.4 152.89 L737.94 153.04 L736.47 153.2 L734.99 153.37 L733.5 153.55 L731.99 153.74 L730.47 153.94 L728.94 154.16 L727.4 154.38 L725.84 154.62 L724.28 154.86 L722.7 155.12 L721.1 155.39 L719.5 155.67 L717.88 155.95 L716.26 156.25 L714.62 156.56 L712.96 156.88 L711.3 157.21 L709.63 157.56 L707.94 157.91 L706.24 158.27 L704.53 158.64 L702.81 159.02 L701.07 159.41 L699.33 159.81 L697.57 160.22 L695.81 160.64 L694.03 161.06 L692.24 161.5 L690.44 161.95 L688.63 162.4 L686.82 162.87 L684.99 163.34 L683.15 163.82 L681.3 164.32 L679.44 164.82 L677.57 165.32 L675.69 165.84 L673.8 166.37 L671.91 166.9 L670 167.44 L668.09 167.99 L666.17 168.55 L664.24 169.11 L662.3 169.69 L660.35 170.27 L658.4 170.86 L656.43 171.45 L654.46 172.05 L652.49 172.66 L650.5 173.28 L648.51 173.91 L646.52 174.54 L644.51 175.18 L642.5 175.82 L640.49 176.47 L638.47 177.13 L636.44 177.8 L634.41 178.47 L632.37 179.15 L630.33 179.83 L628.28 180.52 L626.23 181.22 L624.18 181.92 L622.12 182.63 L620.05 183.34 L617.99 184.06 L615.91 184.79 L613.84 185.52 L611.76 186.26 L609.68 187 L607.6 187.74 L605.52 188.5 L603.43 189.25 L601.34 190.02 L599.25 190.79 L597.16 191.56 L595.07 192.34 L592.97 193.12 L590.88 193.9 L588.78 194.7 L586.69 195.49 L584.59 196.29 L582.5 197.1 L580.4 197.91 L578.3 198.72 L576.21 199.54 L574.12 200.36 L572.02 201.19 L569.93 202.02 L567.84 202.85 L565.75 203.69 L563.67 204.53 L561.58 205.38 L559.5 206.23 L557.42 207.08 L555.34 207.94 L553.27 208.8 L551.19 209.66 L549.13 210.53 L547.06 211.4 L545 212.28 L542.94 213.15 L540.89 214.03 L538.84 214.92 L536.79 215.8 L534.75 216.69 L532.72 217.59 L530.69 218.48 L528.66 219.38 L526.64 220.28 L524.62 221.19 L522.61 222.09 L520.61 223 L518.61 223.92 L516.62 224.83 L514.64 225.75 L512.66 226.67 L510.68 227.59 L508.72 228.52 L506.76 229.44 L504.81 230.37 L502.87 231.31 L500.93 232.24 L499 233.18 L497.08 234.12 L495.17 235.06 L493.26 236 L491.36 236.95 L489.48 237.9 L487.6 238.85 L485.73 239.8 L483.86 240.75 L482.01 241.71 L480.17 242.66 L478.33 243.62 L476.51 244.58 L474.69 245.55 L472.88 246.51 L471.09 247.48 L469.3 248.45 L467.53 249.42 L465.76 250.39 L464 251.36 L462.26 252.33 L460.53 253.31 L458.8 254.29 L457.09 255.27 L455.39 256.25 L453.7 257.23 L452.02 258.21 L450.35 259.2 L448.7 260.18 L447.05 261.17 L445.42 262.16 L443.8 263.15 L442.19 264.14 L440.59 265.13 L439.01 266.12 L437.43 267.12 L435.87 268.11 L434.33 269.11 L432.79 270.11 L431.27 271.11 L429.76 272.11 L428.27 273.11 L426.78 274.11 L425.31 275.11 L423.85 276.11 L422.41 277.12 L420.98 278.12 L419.56 279.13 L418.16 280.14 L416.77 281.14 L415.4 282.15 L414.03 283.16 L412.69 284.17 L411.35 285.18 L410.03 286.19 L408.73 287.21 L407.44 288.22 L406.16 289.23 L404.9 290.25 L403.65 291.26 L402.41 292.28 L401.19 293.29 L399.99 294.31 L398.8 295.32 L397.62 296.34 L396.46 297.36 L395.32 298.38 L394.19 299.39 L393.07 300.41 L391.97 301.43 L390.89 302.45 L389.82 303.47 L388.76 304.49 L387.72 305.51 L386.7 306.53 L385.69 307.55 L384.7 308.58 L383.72 309.6 L382.76 310.62 L381.81 311.64 L380.88 312.66 L379.96 313.68 L379.06 314.71 L378.18 315.73 L377.31 316.75 L376.46 317.77 L375.62 318.8 L374.8 319.82 L374 320.84 L373.21 321.86 L372.43 322.89 L371.68 323.91 L370.94 324.93 L370.21 325.95 L369.5 326.98 L368.81 328 L368.13 329.02 L367.47 330.04 L366.82 331.06 L366.19 332.08 L365.58 333.11 L364.98 334.13 L364.4 335.15 L363.84 336.17 L363.29 337.19 L362.75 338.21 L362.24 339.23 L361.73 340.24 L361.25 341.26 L360.78 342.28 L360.33 343.3 L359.89 344.32 L359.47 345.33 L359.06 346.35 L358.67 347.37 L358.3 348.38 L357.94 349.39 L357.6 350.41 L357.27 351.42 L356.96 352.44 L356.67 353.45 L356.39 354.46 L356.12 355.47 L355.88 356.48 L355.64 357.49 L355.43 358.5 L355.23 359.51 L355.04 360.51 L354.87 361.52 L354.71 362.53 L354.57 363.53 L354.45 364.53 L354.34 365.54 L354.25 366.54 L354.17 367.54 L354.1 368.54 L354.06 369.54 L354.02 370.54 L354 371.53 L354 372.53 L354.01 373.52 L354.03 374.52 L354.07 375.51 L354.13 376.5 L354.19 377.49 L354.28 378.48 L354.37 379.47 L354.48 380.45 L354.61 381.44 L354.75 382.42 L354.9 383.41 L355.06 384.39 L355.24 385.37 L355.44 386.34 L355.64 387.32 L355.86 388.3 L356.1 389.27"/>
<path d="M1446.01 390.24 L1444.01 391.21 L1442 392.18 L1439.98 393.15 L1437.94 394.11 L1435.89 395.08 L1433.83 396.04 L1431.76 397 L1429.68 397.95 L1427.58 398.91 L1425.48 399.87 L1423.36 400.82 L1421.23 401.77 L1419.09 402.72 L1416.94 403.66 L1414.78 404.61 L1412.61 405.55 L1410.43 406.49 L1408.24 407.43 L1406.04 408.36 L1403.83 409.3 L1401.61 410.23 L1399.38 411.15 L1397.14 412.08 L1394.9 413 L1392.64 413.93 L1390.38 414.84 L1388.11 415.76 L1385.83 416.67 L1383.54 417.58 L1381.25 418.49 L1378.95 419.4 L1376.64 420.3 L1374.33 421.2 L1372.01 422.1 L1369.68 422.99 L1367.34 423.88 L1365 424.77 L1362.66 425.65"/>
<path d="M697.2 150.6 L695.03 151.42 L692.85 152.25 L690.67 153.08 L688.49 153.92 L686.3 154.77 L684.1 155.62 L681.9 156.48 L679.7 157.35 L677.49 158.22 L675.28 159.1 L673.06 159.98 L670.84 160.87 L668.62 161.76 L666.4 162.66 L664.18 163.57 L661.95 164.48 L659.72 165.4 L657.49 166.32 L655.26 167.24 L653.03 168.18 L650.8 169.11 L648.57 170.05 L646.34 171 L644.11 171.94 L641.88 172.9 L639.65 173.86 L637.42 174.82 L635.19 175.78 L632.97 176.75 L630.74 177.73 L628.52 178.71 L626.3 179.69 L624.09 180.67 L621.87 181.66 L619.66 182.65 L617.45 183.65 L615.25 184.65 L613.05 185.65 L610.85 186.66 L608.66 187.67 L606.47 188.68 L604.29 189.69 L602.11 190.71 L599.94 191.73 L597.77 192.76 L595.61 193.78 L593.45 194.81 L591.3 195.85 L589.15 196.88 L587.01 197.92 L584.88 198.96 L582.75 200 L580.64 201.05 L578.52 202.09 L576.42 203.14 L574.32 204.2 L572.23 205.25 L570.15 206.31 L568.08 207.37 L566.01 208.43 L563.95 209.49 L561.9 210.56 L559.86 211.62 L557.83 212.69 L555.81 213.76 L553.8 214.84 L551.79 215.91 L549.8 216.99 L547.81 218.07 L545.84 219.15 L543.87 220.23 L541.92 221.31 L539.97 222.4 L538.04 223.49 L536.12 224.57 L534.2 225.66 L532.3 226.76 L530.41 227.85 L528.53 228.94 L526.66 230.04 L524.81 231.14 L522.96 232.24 L521.13 233.34 L519.31 234.44 L517.5 235.54 L515.7 236.64 L513.92 237.75 L512.14 238.86 L510.39 239.96 L508.64 241.07 L506.9 242.18 L505.18 243.29 L503.48 244.41 L501.78 245.52 L500.1 246.63 L498.43 247.75 L496.78 248.87 L495.14 249.98 L493.51 251.1 L491.9 252.22 L490.3 253.34 L488.71 254.46 L487.14 255.58 L485.59 256.71 L484.04 257.83 L482.52 258.95 L481 260.08 L479.51 261.2 L478.02 262.33 L476.55 263.46 L475.1 264.59 L473.66 265.72 L472.24 266.85 L470.83 267.98 L469.44 269.11 L468.06 270.24 L466.7 271.37 L465.36 272.5 L464.03 273.64 L462.72 274.77 L461.42 275.9 L460.14 277.04 L458.87 278.17 L457.62 279.31 L456.39 280.45 L455.17 281.58 L453.97 282.72 L452.79 283.86 L451.62 285 L450.47 286.14 L449.33 287.27 L448.22 288.41 L447.12 289.55 L446.03 290.69 L444.96 291.83 L443.91 292.98 L442.88 294.12 L441.87 295.26 L440.87 296.4 L439.89 297.54 L438.92 298.68 L437.97 299.83 L437.04 300.97 L436.13 302.11 L435.24 303.26 L434.36 304.4 L433.5 305.54 L432.66 306.69 L431.83 307.83 L431.03 308.97 L430.24 310.12 L429.47 311.26 L428.71 312.41 L427.98 313.55 L427.26 314.7 L426.56 315.84 L425.88 316.98 L425.21 318.13 L424.57 319.27 L423.94 320.42 L423.33 321.56 L422.73 322.71 L422.16 323.85 L421.6 325 L421.07 326.14 L420.55 327.29 L420.04 328.43 L419.56 329.57 L419.1 330.72 L418.65 331.86 L418.22 333.01 L417.81 334.15 L417.41 335.29 L417.04 336.44 L416.68 337.58 L416.35 338.72 L416.02 339.87 L415.72 341.01 L415.44 342.15 L415.17 343.29 L414.93 344.44 L414.7 345.58 L414.49 346.72 L414.29 347.86 L414.12 349 L413.96 350.14 L413.82 351.28 L413.7 352.42 L413.6 353.56 L413.51 354.7 L413.45 355.84 L413.4 356.97 L413.37 358.11 L413.36 359.25 L413.36 360.39 L413.38 361.52 L413.42 362.66 L413.48 363.79 L413.56 364.93 L413.65 366.06 L413.77 367.19 L413.9 368.33 L414.04 369.46 L414.21 370.59 L414.39 371.72 L414.59 372.85 L414.81 373.98 L415.04 375.11 L415.29 376.24 L415.56 377.37 L415.85 378.49 L416.15 379.62 L416.47 380.75 L416.81 381.87 L417.16 382.99 L417.53 384.12 L417.92 385.24 L418.32 386.36 L418.74 387.48 L419.18 388.6 L419.63 389.72 L420.1 390.84 L420.59 391.95 L421.09 393.07 L421.61 394.18 L422.15 395.3 L422.7 396.41 L423.26 397.52 L423.85 398.63 L424.44 399.74 L425.06 400.85 L425.69 401.95 L426.33 403.06 L426.99 404.16 L427.66 405.27 L428.35 406.37 L429.06 407.47 L429.78 408.57 L430.51 409.67 L431.26 410.76 L432.02 411.86 L432.8 412.95 L433.59 414.04 L434.39 415.13 L435.21 416.22 L436.04 417.31 L436.89 418.4 L437.75 419.48 L438.62 420.56 L439.5 421.64 L440.4 422.72 L441.31 423.8 L442.24 424.87 L443.17 425.95 L444.12 427.02 L445.08 428.09 L446.05 429.16 L447.04 430.22 L448.03 431.29 L449.04 432.35 L450.05 433.41 L451.08 434.47 L452.12 435.52 L453.17 436.57 L454.23 437.62 L455.3 438.67 L456.38 439.72 L457.47 440.76 L458.57 441.8 L459.68 442.84 L460.79 443.88 L461.92 444.91 L463.05 445.94 L464.19 446.97 L465.34 447.99 L466.5 449.02 L467.67 450.03 L468.84 451.05 L470.02 452.06 L471.2 453.07 L472.39 454.08 L473.59 455.08 L474.79 456.08"/>
<path d="M688.3 149.4 L686.24 150.01 L684.17 150.62 L682.08 151.25 L679.99 151.89 L677.89 152.53 L675.77 153.18 L673.65 153.84 L671.51 154.51 L669.37 155.19 L667.22 155.88 L665.05 156.57 L662.88 157.27 L660.7 157.98 L658.52 158.7 L656.32 159.42 L654.12 160.15 L651.91 160.89 L649.69 161.63 L647.47 162.39 L645.24 163.15 L643.01 163.91 L640.76 164.69 L638.52 165.46 L636.27 166.25 L634.01 167.04 L631.75 167.84 L629.48 168.64 L627.21 169.45 L624.94 170.27 L622.66 171.09 L620.38 171.92 L618.1 172.75 L615.81 173.59 L613.53 174.43 L611.24 175.28 L608.94 176.14 L606.65 176.99 L604.36 177.86 L602.06 178.73 L599.76 179.6 L597.47 180.48 L595.17 181.36 L592.87 182.25 L590.58 183.14 L588.28 184.04 L585.99 184.94 L583.69 185.84 L581.4 186.75 L579.11 187.66 L576.82 188.58 L574.53 189.5 L572.25 190.42 L569.96 191.35 L567.68 192.29 L565.41 193.22 L563.13 194.16 L560.86 195.1 L558.6 196.05 L556.34 197 L554.08 197.95 L551.83 198.91 L549.58 199.87 L547.33 200.83 L545.09 201.79 L542.86 202.76 L540.63 203.73 L538.41 204.71 L536.2 205.69 L533.99 206.67 L531.78 207.65 L529.59 208.63 L527.4 209.62 L525.21 210.61 L523.04 211.61 L520.87 212.6 L518.71 213.6 L516.56 214.6 L514.41 215.61 L512.28 216.61 L510.15 217.62 L508.03 218.63 L505.92 219.64 L503.82 220.65 L501.72 221.67 L499.64 222.69 L497.57 223.71 L495.5 224.73 L493.45 225.76 L491.4 226.78 L489.37 227.81 L487.35 228.84 L485.33 229.87 L483.33 230.91 L481.34 231.94 L479.36 232.98 L477.39 234.02 L475.43 235.06 L473.48 236.1 L471.55 237.15 L469.63 238.19 L467.71 239.24 L465.81 240.29 L463.93 241.34 L462.05 242.39 L460.19 243.44 L458.34 244.5 L456.51 245.55 L454.68 246.61 L452.87 247.67 L451.07 248.73 L449.29 249.79 L447.52 250.85 L445.76 251.91 L444.02 252.98 L442.29 254.04 L440.58 255.11 L438.87 256.18 L437.19 257.24 L435.51 258.31 L433.86 259.38 L432.21 260.46 L430.58 261.53 L428.97 262.6 L427.37 263.68 L425.79 264.75 L424.22 265.83 L422.67 266.91 L421.13 267.99 L419.61 269.06 L418.1 270.14 L416.61 271.22 L415.13 272.31 L413.67 273.39 L412.23 274.47 L410.8 275.55 L409.39 276.64 L407.99 277.72 L406.61 278.81 L405.25 279.89 L403.91 280.98 L402.58 282.07 L401.26 283.16 L399.97 284.25 L398.69 285.33 L397.43 286.42 L396.18 287.51 L394.95 288.6 L393.74 289.7 L392.55 290.79 L391.37 291.88 L390.21 292.97 L389.07 294.06 L387.94 295.16 L386.84 296.25 L385.75 297.34 L384.68 298.44 L383.62 299.53 L382.59 300.63 L381.57 301.72 L380.57 302.82 L379.58 303.91 L378.62 305.01 L377.67 306.1 L376.75 307.2 L375.83 308.3 L374.94 309.39 L374.07 310.49 L373.21 311.59 L372.37 312.68 L371.56 313.78 L370.75 314.88 L369.97 315.98 L369.21 317.07 L368.46 318.17 L367.73 319.27 L367.03 320.36 L366.34 321.46 L365.66 322.56 L365.01 323.66 L364.38 324.75 L363.76 325.85 L363.16 326.95 L362.58 328.04 L362.02 329.14 L361.48 330.24 L360.96 331.33 L360.46 332.43 L359.97 333.53 L359.5 334.62 L359.06 335.72 L358.63 336.81 L358.22 337.91 L357.83 339 L357.45 340.1 L357.1 341.19 L356.76 342.29 L356.44 343.38 L356.15 344.48 L355.87 345.57 L355.6 346.66 L355.36 347.75 L355.14 348.85 L354.93 349.94 L354.74 351.03 L354.58 352.12 L354.43 353.21 L354.29 354.3 L354.18 355.39 L354.08 356.48 L354.01 357.57 L353.95 358.65 L353.91 359.74 L353.89 360.83 L353.88 361.91 L353.9 363 L353.93 364.08 L353.98 365.17 L354.05 366.25 L354.14 367.33 L354.24 368.41 L354.36 369.49 L354.5 370.57 L354.66 371.65 L354.84 372.73 L355.03 373.81 L355.24 374.88 L355.47 375.96 L355.71 377.04 L355.97 378.11 L356.25 379.18 L356.55 380.25 L356.86 381.33 L357.2 382.4 L357.54 383.47 L357.91 384.53 L358.29 385.6 L358.69 386.67 L359.1 387.73 L359.53 388.79 L359.98 389.86 L360.44 390.92 L360.92 391.98 L361.41 393.04 L361.92 394.09"/>
<path d="M1440.4 395.15 L1438.33 396.2 L1436.24 397.26 L1434.13 398.31 L1432.02 399.36 L1429.88 400.41 L1427.73 401.46 L1425.57 402.5 L1423.39 403.55 L1421.2 404.59 L1418.99 405.63 L1416.77 406.67 L1414.54 407.71 L1412.29 408.74 L1410.03 409.78 L1407.76 410.81 L1405.47 411.84 L1403.17 412.87 L1400.86 413.9 L1398.54 414.92 L1396.2 415.95 L1393.86 416.97 L1391.5 417.99 L1389.13 419 L1386.74 420.02 L1384.35 421.03 L1381.95 422.04 L1379.53 423.05 L1377.11 424.06 L1374.67 425.06 L1372.23 426.06 L1369.77 427.06 L1367.31 428.06 L1364.84 429.05 L1362.36 430.04 L1359.87 431.03"/>
<path d="M662.4 165.3 L661.22 165.21 L660.02 165.14 L658.81 165.07 L657.59 165.02 L656.35 164.97 L655.1 164.93 L653.83 164.91 L652.55 164.89 L651.26 164.89 L649.95 164.89 L648.62 164.91 L647.28 164.93 L645.93 164.96 L644.55 165.01 L643.17 165.06 L641.77 165.13 L640.35 165.2 L638.92 165.28 L637.47 165.38 L636.01 165.48 L634.54 165.6 L633.04 165.72 L631.54 165.85 L630.01 166 L628.48 166.15 L626.92 166.31 L625.35 166.48 L623.77 166.67 L622.17 166.86 L620.56 167.06 L618.93 167.27 L617.28 167.49 L615.63 167.72 L613.95 167.96 L612.26 168.21 L610.56 168.47 L608.84 168.73 L607.11 169.01 L605.36 169.29 L603.6 169.59 L601.82 169.89 L600.03 170.2 L598.23 170.53 L596.41 170.86 L594.58 171.2 L592.73 171.54 L590.87 171.9 L589 172.26 L587.12 172.64 L585.22 173.02 L583.3 173.41 L581.38 173.81 L579.44 174.21 L577.49 174.63 L575.53 175.05 L573.56 175.48 L571.57 175.92 L569.57 176.37 L567.56 176.82 L565.54 177.29 L563.51 177.76 L561.47 178.23 L559.42 178.72 L557.35 179.21 L555.28 179.71 L553.19 180.22 L551.1 180.73 L548.99 181.25 L546.88 181.78 L544.76 182.32 L542.63 182.86 L540.49 183.41 L538.34 183.96 L536.18 184.53 L534.01 185.1 L531.84 185.67 L529.66 186.25 L527.47 186.84 L525.28 187.44 L523.07 188.04 L520.86 188.64 L518.65 189.26 L516.43 189.88 L514.2 190.5 L511.96 191.13 L509.73 191.77 L507.48 192.41 L505.23 193.06 L502.98 193.71 L500.72 194.37 L498.46 195.04 L496.19 195.7 L493.92 196.38 L491.65 197.06 L489.37 197.74 L487.09 198.44 L484.81 199.13 L482.52 199.83 L480.23 200.54 L477.94 201.25 L475.65 201.96 L473.36 202.68 L471.06 203.4 L468.77 204.13 L466.47 204.87 L464.17 205.6 L461.88 206.34 L459.58 207.09 L457.28 207.84 L454.99 208.6 L452.69 209.35 L450.4 210.12 L448.1 210.88 L445.81 211.65 L443.52 212.43 L441.23 213.21 L438.94 213.99 L436.66 214.77 L434.37 215.56 L432.09 216.36 L429.82 217.15 L427.54 217.95 L425.27 218.76 L423.01 219.56 L420.74 220.37 L418.49 221.19 L416.23 222.01 L413.98 222.83 L411.74 223.65 L409.5 224.48 L407.26 225.31 L405.03 226.14 L402.81 226.97 L400.59 227.81 L398.38 228.65 L396.17 229.5 L393.97 230.34 L391.78 231.19 L389.59 232.05 L387.41 232.9 L385.24 233.76 L383.08 234.62 L380.92 235.48 L378.77 236.35 L376.63 237.21 L374.5 238.09 L372.37 238.96 L370.25 239.83"/>
<path d="M1435.63 240.71 L1435.8 241.59 L1435.96 242.47 L1436.11 243.35 L1436.25 244.24 L1436.38 245.13 L1436.5 246.02 L1436.61 246.91 L1436.72 247.81 L1436.81 248.7 L1436.89 249.6 L1436.96 250.5 L1437.02 251.4 L1437.07 252.3 L1437.11 253.21 L1437.14 254.12 L1437.16 255.03 L1437.17 255.94 L1437.17 256.85 L1437.15 257.76 L1437.13 258.68 L1437.09 259.6 L1437.04 260.52 L1436.98 261.44 L1436.91 262.36 L1436.83 263.28 L1436.73 264.21 L1436.62 265.13 L1436.5 266.06 L1436.37 266.99 L1436.23 267.92 L1436.07 268.85 L1435.91 269.78 L1435.72 270.72 L1435.53 271.65 L1435.33 272.59 L1435.11 273.52 L1434.88 274.46 L1434.63 275.4 L1434.38 276.34 L1434.11 277.28 L1433.83 278.23 L1433.53 279.17 L1433.22 280.12 L1432.9 281.06 L1432.57 282.01 L1432.22 282.95 L1431.86 283.9 L1431.49 284.85 L1431.1 285.8 L1430.7 286.75 L1430.28 287.7 L1429.86 288.66 L1429.42 289.61 L1428.96 290.56 L1428.49 291.52 L1428.01 292.47 L1427.52 293.43 L1427.01 294.38 L1426.49 295.34 L1425.95 296.3 L1425.41 297.26 L1424.84 298.22 L1424.27 299.17 L1423.68 300.13 L1423.07 301.09 L1422.46 302.05 L1421.82 303.01 L1421.18 303.98 L1420.52 304.94 L1419.85 305.9 L1419.16 306.86 L1418.46 307.82 L1417.75 308.79 L1417.02 309.75 L1416.28 310.71 L1415.53 311.67 L1414.76 312.64 L1413.98 313.6 L1413.18 314.57 L1412.37 315.53 L1411.55 316.49 L1410.72 317.46 L1409.87 318.42 L1409 319.39 L1408.13 320.35 L1407.23 321.31 L1406.33 322.28 L1405.41 323.24 L1404.48 324.21 L1403.54 325.17 L1402.58 326.14 L1401.61 327.1 L1400.63 328.06 L1399.63 329.03 L1398.62 329.99 L1397.59 330.95 L1396.55 331.91 L1395.5 332.88 L1394.44 333.84 L1393.36 334.8 L1392.27 335.76 L1391.17 336.72 L1390.06 337.68 L1388.93 338.64 L1387.79 339.6 L1386.63 340.56 L1385.47 341.52 L1384.29 342.48 L1383.1 343.44 L1381.89 344.4 L1380.68 345.35 L1379.45 346.31 L1378.21 347.27 L1376.95 348.22 L1375.69 349.18 L1374.41 350.13 L1373.12 351.08 L1371.82 352.04 L1370.5 352.99 L1369.18 353.94 L1367.84 354.89 L1366.49 355.84 L1365.13 356.79"/>
<path d="M705 190.6 L703.41 191 L701.81 191.41 L700.2 191.82 L698.59 192.25 L696.98 192.67 L695.36 193.11 L693.73 193.55 L692.1 194 L690.47 194.45 L688.83 194.91 L687.19 195.38 L685.54 195.86 L683.89 196.34 L682.24 196.82 L680.58 197.31 L678.92 197.81 L677.25 198.31 L675.58 198.82 L673.9 199.34 L672.23 199.86 L670.54 200.39 L668.86 200.92 L667.17 201.46 L665.48 202 L663.78 202.55 L662.09 203.11 L660.39 203.67 L658.68 204.24 L656.98 204.81 L655.27 205.38 L653.56 205.97 L651.84 206.55 L650.13 207.14 L648.41 207.74 L646.69 208.34 L644.97 208.95 L643.25 209.56 L641.52 210.18 L639.8 210.8 L638.07 211.42 L636.34 212.05 L634.61 212.69 L632.88 213.33 L631.15 213.97 L629.41 214.62 L627.68 215.27 L625.94 215.93 L624.21 216.59 L622.47 217.25 L620.74 217.92 L619 218.6 L617.27 219.27 L615.53 219.96 L613.8 220.64 L612.06 221.33 L610.33 222.02 L608.59 222.72 L606.86 223.42 L605.13 224.13 L603.4 224.83 L601.66 225.55 L599.94 226.26 L598.21 226.98 L596.48 227.7 L594.76 228.43 L593.03 229.16 L591.31 229.89 L589.59 230.62 L587.88 231.36 L586.16 232.1 L584.45 232.85 L582.74 233.6 L581.03 234.35 L579.33 235.1 L577.63 235.86 L575.93 236.62 L574.23 237.38 L572.54 238.15 L570.85 238.92 L569.16 239.69 L567.48 240.46 L565.8 241.24 L564.12 242.02 L562.45 242.8 L560.78 243.59 L559.12 244.37 L557.46 245.16 L555.81 245.95 L554.15 246.75 L552.51 247.55 L550.87 248.34 L549.23 249.15 L547.6 249.95 L545.97 250.76 L544.35 251.56 L542.73 252.37 L541.12 253.19 L539.51 254 L537.91 254.82 L536.31 255.64 L534.72 256.46 L533.14 257.28 L531.56 258.1 L529.99 258.93 L528.42 259.76 L526.86 260.59 L525.31 261.42 L523.76 262.25 L522.22 263.09 L520.69 263.93 L519.16 264.76 L517.64 265.6 L516.12 266.45 L514.62 267.29 L513.12 268.14 L511.62 268.98 L510.14 269.83 L508.66 270.68 L507.19 271.53 L505.72 272.38 L504.27 273.24 L502.82 274.09 L501.38 274.95 L499.94 275.8 L498.52 276.66 L497.1 277.52 L495.69 278.38 L494.29 279.25 L492.9 280.11 L491.51 280.97 L490.13 281.84 L488.77 282.71 L487.41 283.58 L486.05 284.44 L484.71 285.31 L483.38 286.18 L482.05 287.06 L480.74 287.93 L479.43 288.8 L478.13 289.68 L476.84 290.55 L475.56 291.43 L474.29 292.3 L473.03 293.18 L471.77 294.06 L470.53 294.94 L469.3 295.82 L468.07 296.7 L466.86 297.58 L465.65 298.46 L464.45 299.34 L463.27 300.22 L462.09 301.11 L460.92 301.99 L459.77 302.88 L458.62 303.76 L457.48 304.64 L456.35 305.53 L455.24 306.42 L454.13 307.3 L453.03 308.19 L451.94 309.08 L450.87 309.96 L449.8 310.85 L448.74 311.74 L447.7 312.62 L446.66 313.51 L445.63 314.4 L444.62 315.29 L443.61 316.18 L442.62 317.07 L441.63 317.95 L440.66 318.84 L439.7 319.73 L438.74 320.62 L437.8 321.51 L436.87 322.4 L435.95 323.29 L435.04 324.17 L434.14 325.06 L433.25 325.95 L432.37 326.84 L431.5 327.73 L430.64 328.61 L429.79 329.5 L428.96 330.39 L428.13 331.28 L427.32 332.16 L426.51 333.05 L425.72 333.93 L424.93 334.82 L424.16 335.7 L423.4 336.59 L422.65 337.47 L421.91 338.36 L421.18 339.24 L420.46 340.12 L419.75 341.01 L419.05 341.89 L418.36 342.77 L417.69 343.65 L417.02 344.53 L416.37 345.41 L415.72 346.29 L415.09 347.17 L414.46 348.04 L413.85 348.92 L413.25 349.79 L412.65 350.67 L412.07 351.54 L411.5 352.42 L410.94 353.29 L410.39 354.16 L409.84 355.03 L409.31 355.9 L408.79 356.77 L408.28 357.64 L407.78 358.5 L407.29 359.37 L406.81 360.23 L406.34 361.09 L405.88 361.96 L405.43 362.82 L404.99 363.68 L404.56 364.53 L404.14 365.39 L403.73 366.25 L403.32 367.1 L402.93 367.95 L402.55 368.81 L402.17 369.66 L401.81 370.51 L401.45 371.35 L401.11 372.2 L400.77 373.04 L400.44 373.89 L400.12 374.73 L399.81 375.57 L399.51 376.41 L399.22 377.24 L398.94 378.08 L398.66 378.91 L398.4 379.74 L398.14 380.57 L397.89 381.4 L397.64 382.22 L397.41 383.05 L397.18 383.87 L396.97 384.69 L396.76 385.51 L396.55 386.32 L396.36 387.14 L396.17 387.95 L395.99 388.76 L395.82 389.56 L395.65 390.37 L395.49 391.17 L395.34 391.97 L395.2 392.77 L395.06 393.57 L394.92 394.36 L394.8 395.15 L394.68 395.94 L394.57 396.73 L394.46 397.51 L394.36 398.29 L394.26 399.07 L394.17 399.84 L394.09 400.62 L394.01 401.39 L393.93 402.15 L393.86 402.92 L393.8 403.68 L393.74 404.44 L393.68 405.2 L393.63 405.95 L393.58 406.7 L393.54 407.45 L393.5 408.19 L393.46 408.93 L393.43 409.67 L393.4 410.4 L393.38 411.13 L393.35 411.86 L393.33 412.58 L393.32 413.31 L393.3 414.02 L393.29 414.74 L393.28 415.45 L393.27 416.15"/>
<path d="M1410.55 416.86 L1408.36 417.56 L1406.16 418.25 L1403.97 418.94 L1401.77 419.63 L1399.57 420.31 L1397.38 420.99 L1395.18 421.67 L1392.98 422.34 L1390.78 423.01 L1388.59 423.67 L1386.39 424.33 L1384.19 424.99 L1382 425.64 L1379.81 426.28 L1377.62 426.93 L1375.43 427.56 L1373.24 428.2 L1371.05 428.83 L1368.87 429.45 L1366.69 430.07 L1364.51 430.68 L1362.34 431.29 L1360.17 431.9"/>
<path d="M659.5 194.9 L658.46 194.66 L657.42 194.43 L656.37 194.2 L655.32 193.99 L654.25 193.78 L653.18 193.57 L652.1 193.38 L651.02 193.19 L649.92 193.01 L648.82 192.83 L647.71 192.67 L646.6 192.51 L645.47 192.35 L644.34 192.21 L643.2 192.07 L642.05 191.94 L640.89 191.82 L639.72 191.7 L638.55 191.59 L637.37 191.49 L636.17 191.4 L634.97 191.31 L633.76 191.24 L632.54 191.16 L631.32 191.1 L630.08 191.05 L628.83 191 L627.58 190.96 L626.32 190.92 L625.04 190.9 L623.76 190.88 L622.47 190.87 L621.17 190.87 L619.86 190.87 L618.54 190.89 L617.21 190.91 L615.87 190.93 L614.52 190.97 L613.16 191.01 L611.79 191.06 L610.41 191.12 L609.03 191.18 L607.63 191.26 L606.22 191.34 L604.8 191.43 L603.38 191.52 L601.94 191.62 L600.5 191.73 L599.04 191.85 L597.57 191.98 L596.1 192.11 L594.61 192.25 L593.12 192.4 L591.61 192.55 L590.1 192.71 L588.58 192.88 L587.04 193.06 L585.5 193.24 L583.95 193.43 L582.38 193.63 L580.81 193.84 L579.23 194.05 L577.64 194.27 L576.04 194.5 L574.43 194.73 L572.81 194.97 L571.18 195.22 L569.55 195.47 L567.9 195.73 L566.24 196 L564.58 196.28 L562.91 196.56 L561.23 196.85 L559.54 197.14 L557.84 197.45 L556.13 197.76 L554.41 198.07 L552.69 198.39 L550.95 198.72 L549.21 199.06 L547.46 199.4 L545.71 199.75 L543.94 200.1 L542.17 200.46 L540.39 200.83 L538.6 201.2 L536.81 201.58 L535 201.97 L533.19 202.36 L531.38 202.76 L529.55 203.16 L527.72 203.57 L525.88 203.99 L524.04 204.41 L522.19 204.83 L520.33 205.27 L518.47 205.71 L516.6 206.15 L514.72 206.6 L512.84 207.06 L510.96 207.52 L509.06 207.98 L507.17 208.46 L505.26 208.93 L503.36 209.42 L501.44 209.91 L499.53 210.4 L497.6 210.9 L495.68 211.4 L493.75 211.91 L491.81 212.42 L489.87 212.94 L487.93 213.47 L485.98 214 L484.03 214.53 L482.08 215.07 L480.12 215.61 L478.16 216.16 L476.2 216.71 L474.23 217.27 L472.27 217.83 L470.3 218.4 L468.32 218.97 L466.35 219.54 L464.37 220.12 L462.39 220.71 L460.41 221.3 L458.43 221.89 L456.45 222.49 L454.46 223.09 L452.48 223.69 L450.49 224.3 L448.5 224.91 L446.52 225.53 L444.53 226.15 L442.54 226.78 L440.55 227.41 L438.57 228.04 L436.58 228.67 L434.59 229.31 L432.61 229.96 L430.62 230.61 L428.64 231.26 L426.66 231.91 L424.68 232.57 L422.7 233.23 L420.72 233.89 L418.74 234.56 L416.77 235.23 L414.8 235.91 L412.83 236.59 L410.86 237.27 L408.89 237.95 L406.93 238.64 L404.97 239.33 L403.02 240.02 L401.06 240.72 L399.12 241.42 L397.17 242.12 L395.23 242.82 L393.29 243.53 L391.36 244.24 L389.43 244.96 L387.5 245.67 L385.58 246.39 L383.66 247.11 L381.75 247.84 L379.85 248.56 L377.95 249.29 L376.05 250.03 L374.16 250.76 L372.27 251.5 L370.39 252.24 L368.52 252.98 L366.65 253.72 L364.79 254.47 L362.94 255.21 L361.09 255.96 L359.25 256.72 L357.41 257.47 L355.58 258.23 L353.76 258.99 L351.94 259.75 L350.14 260.51 L348.34 261.28 L346.54 262.04 L344.76 262.81 L342.98 263.58"/>
<path d="M1461.24 264.36 L1460.9 265.13 L1460.55 265.91 L1460.19 266.68 L1459.82 267.46 L1459.45 268.24 L1459.07 269.03 L1458.68 269.81 L1458.28 270.6 L1457.87 271.39 L1457.45 272.18 L1457.03 272.97 L1456.59 273.76 L1456.15 274.55 L1455.7 275.35 L1455.24 276.15 L1454.77 276.94 L1454.29 277.74 L1453.8 278.54 L1453.3 279.35 L1452.79 280.15 L1452.27 280.95 L1451.75 281.76 L1451.21 282.57 L1450.66 283.37 L1450.11 284.18 L1449.54 284.99 L1448.97 285.8 L1448.38 286.62 L1447.79 287.43 L1447.19 288.24 L1446.57 289.06 L1445.95 289.87 L1445.31 290.69 L1444.67 291.51 L1444.01 292.33 L1443.35 293.15 L1442.67 293.97 L1441.99 294.79 L1441.29 295.61 L1440.59 296.43 L1439.87 297.26 L1439.15 298.08 L1438.41 298.91 L1437.67 299.73 L1436.91 300.56 L1436.14 301.38 L1435.37 302.21 L1434.58 303.04 L1433.78 303.87 L1432.97 304.7 L1432.15 305.52 L1431.32 306.35 L1430.48 307.18 L1429.63 308.01 L1428.77 308.84 L1427.9 309.68 L1427.02 310.51 L1426.13 311.34 L1425.23 312.17 L1424.32 313 L1423.39 313.83 L1422.46 314.67 L1421.52 315.5 L1420.56 316.33 L1419.6 317.16 L1418.63 318 L1417.64 318.83 L1416.65 319.66 L1415.64 320.49 L1414.63 321.33 L1413.6 322.16 L1412.57 322.99 L1411.52 323.83 L1410.46 324.66 L1409.4 325.49 L1408.32 326.32 L1407.23 327.15 L1406.14 327.99 L1405.03 328.82 L1403.91 329.65 L1402.79 330.48 L1401.65 331.31 L1400.51 332.14 L1399.35 332.97 L1398.18 333.8 L1397.01 334.63 L1395.82 335.46 L1394.63 336.29 L1393.43 337.12 L1392.21 337.94 L1390.99 338.77 L1389.75 339.6 L1388.51 340.42 L1387.26 341.25 L1386 342.07 L1384.73 342.9 L1383.45 343.72 L1382.16 344.54 L1380.86 345.36 L1379.56 346.19 L1378.24 347.01 L1376.92 347.82 L1375.58 348.64 L1374.24 349.46 L1372.89 350.28 L1371.53 351.09 L1370.16 351.91 L1368.79 352.72 L1367.4 353.54 L1366.01 354.35 L1364.61 355.16"/>
<path d="M763.5 201.3 L762.88 200.52 L762.27 199.75 L761.65 198.98 L761.03 198.21 L760.42 197.45 L759.8 196.69 L759.18 195.94 L758.56 195.2 L757.95 194.45 L757.33 193.72 L756.71 192.98 L756.08 192.26 L755.46 191.54 L754.84 190.82 L754.21 190.11 L753.58 189.4 L752.96 188.7 L752.33 188.01 L751.69 187.32 L751.06 186.63 L750.43 185.96 L749.79 185.29 L749.15 184.62 L748.51 183.96 L747.86 183.31 L747.21 182.66 L746.56 182.02 L745.91 181.38 L745.25 180.75 L744.59 180.13 L743.93 179.52 L743.26 178.91 L742.59 178.3 L741.91 177.71 L741.23 177.12 L740.55 176.54 L739.86 175.96 L739.17 175.4 L738.47 174.84 L737.77 174.29 L737.07 173.74 L736.35 173.2 L735.64 172.67 L734.91 172.15 L734.18 171.64 L733.45 171.13 L732.71 170.63 L731.96 170.14 L731.21 169.66 L730.45 169.19 L729.68 168.72 L728.9 168.26 L728.12 167.81 L727.33 167.37 L726.53 166.94 L725.73 166.52 L724.91 166.11 L724.09 165.7 L723.26 165.3 L722.42 164.92 L721.58 164.54 L720.72 164.17 L719.85 163.81 L718.98 163.46 L718.09 163.12 L717.2 162.79 L716.29 162.47 L715.37 162.16 L714.45 161.86 L713.51 161.56 L712.56 161.28 L711.6 161.01 L710.63 160.75 L709.65 160.49 L708.66 160.25 L707.65 160.02 L706.63 159.8 L705.6 159.59 L704.56 159.39 L703.51 159.2 L702.44 159.02 L701.36 158.85 L700.27 158.69 L699.16 158.54 L698.04 158.4 L696.91 158.27 L695.76 158.16 L694.6 158.05 L693.42 157.95 L692.23 157.87 L691.03 157.8 L689.81 157.73 L688.58 157.68 L687.33 157.64 L686.07 157.61 L684.79 157.59 L683.5 157.58 L682.19 157.58 L680.87 157.59 L679.53 157.62 L678.18 157.65 L676.81 157.7 L675.43 157.75 L674.03 157.82 L672.61 157.9 L671.18 157.98 L669.74 158.08 L668.27 158.19 L666.8 158.31 L665.3 158.44 L663.79 158.59 L662.27 158.74 L660.73 158.9 L659.17 159.07 L657.6 159.26 L656.01 159.45 L654.41 159.66 L652.79 159.87 L651.16 160.1 L649.51 160.33 L647.84 160.58 L646.16 160.83 L644.47 161.1 L642.76 161.38 L641.03 161.66 L639.29 161.96 L637.53 162.26 L635.76 162.58 L633.98 162.9 L632.18 163.23 L630.36 163.58 L628.53 163.93 L626.69 164.29 L624.83 164.67 L622.96 165.05 L621.08 165.44 L619.18 165.84 L617.26 166.24 L615.34 166.66 L613.4 167.09 L611.45 167.52 L609.49 167.96 L607.51 168.42 L605.52 168.88 L603.52 169.34 L601.51 169.82 L599.48 170.31 L597.44 170.8 L595.4 171.3 L593.34 171.81 L591.27 172.33 L589.19 172.85 L587.1 173.38 L585 173.92 L582.88 174.47 L580.76 175.03 L578.63 175.59 L576.49 176.16 L574.34 176.73 L572.19 177.32 L570.02 177.91 L567.85 178.51 L565.66 179.11 L563.47 179.72 L561.27 180.34 L559.07 180.96 L556.86 181.59 L554.64 182.23 L552.41 182.88 L550.18 183.53 L547.94 184.18 L545.69 184.84 L543.44 185.51 L541.19 186.18 L538.93 186.86 L536.66 187.55 L534.39 188.24 L532.12 188.94 L529.84 189.64 L527.56 190.35 L525.27 191.06 L522.99 191.78 L520.69 192.5 L518.4 193.23 L516.1 193.96 L513.8 194.7 L511.5 195.45 L509.2 196.19 L506.89 196.95 L504.59 197.71 L502.28 198.47 L499.97 199.24 L497.66 200.01 L495.36 200.78 L493.05 201.56 L490.74 202.35 L488.43 203.14 L486.12 203.93 L483.82 204.73 L481.51 205.53 L479.21 206.33 L476.91 207.14 L474.61 207.96 L472.31 208.77 L470.02 209.59 L467.72 210.42 L465.43 211.25 L463.15 212.08 L460.87 212.91 L458.59 213.75 L456.31 214.59 L454.04 215.44 L451.77 216.29 L449.51 217.14 L447.25 217.99 L445 218.85 L442.75 219.71 L440.5 220.58 L438.27 221.45 L436.04 222.32 L433.81 223.19 L431.59 224.07 L429.38 224.95 L427.17 225.83 L424.97 226.71 L422.78 227.6 L420.59 228.49 L418.41 229.38 L416.24 230.28 L414.08 231.17 L411.93 232.07 L409.78 232.98 L407.64 233.88 L405.51 234.79 L403.39 235.7 L401.28 236.61 L399.18 237.52 L397.08 238.44 L395 239.36 L392.93 240.28 L390.86 241.2 L388.81 242.13 L386.76 243.05 L384.73 243.98 L382.71 244.91 L380.69 245.84 L378.69 246.78 L376.7 247.72 L374.72 248.65 L372.75 249.59 L370.8 250.53 L368.85 251.48 L366.92 252.42 L365 253.37 L363.09 254.32 L361.19 255.27 L359.31 256.22 L357.43 257.17 L355.57 258.12 L353.73 259.08 L351.89 260.04 L350.07 261 L348.27 261.96 L346.47 262.92 L344.69 263.88 L342.93 264.84 L341.18 265.81"/>
<path d="M1463.84 266.78 L1463.81 267.74 L1463.77 268.71 L1463.71 269.68 L1463.64 270.65 L1463.56 271.62 L1463.46 272.6 L1463.34 273.57 L1463.22 274.55 L1463.07 275.52 L1462.91 276.5 L1462.74 277.48 L1462.55 278.46 L1462.35 279.44 L1462.14 280.42 L1461.9 281.4 L1461.66 282.38 L1461.39 283.37 L1461.12 284.35 L1460.82 285.34 L1460.52 286.32 L1460.19 287.31 L1459.86 288.3 L1459.5 289.28 L1459.13 290.27 L1458.75 291.26 L1458.35 292.25 L1457.94 293.24 L1457.51 294.23 L1457.06 295.22 L1456.6 296.21 L1456.12 297.21 L1455.63 298.2 L1455.12 299.19 L1454.6 300.19 L1454.06 301.18 L1453.51 302.18 L1452.94 303.17 L1452.35 304.17 L1451.75 305.16 L1451.13 306.16 L1450.5 307.15 L1449.85 308.15 L1449.19 309.15 L1448.51 310.14 L1447.82 311.14 L1447.1 312.14 L1446.38 313.13 L1445.64 314.13 L1444.88 315.13 L1444.11 316.13 L1443.32 317.12 L1442.52 318.12 L1441.7 319.12 L1440.86 320.12 L1440.01 321.12 L1439.15 322.11 L1438.27 323.11 L1437.37 324.11 L1436.46 325.11 L1435.53 326.1 L1434.59 327.1 L1433.63 328.1 L1432.66 329.1 L1431.67 330.09 L1430.67 331.09 L1429.65 332.09 L1428.62 333.08 L1427.57 334.08 L1426.51 335.08 L1425.43 336.07 L1424.34 337.07 L1423.24 338.06 L1422.11 339.05 L1420.98 340.05 L1419.83 341.04 L1418.66 342.04 L1417.48 343.03 L1416.29 344.02 L1415.08 345.01 L1413.85 346 L1412.62 346.99 L1411.37 347.98 L1410.1 348.97 L1408.82 349.96 L1407.53 350.95 L1406.22 351.94 L1404.9 352.93 L1403.56 353.91 L1402.21 354.9 L1400.85 355.88 L1399.48 356.87 L1398.09 357.85 L1396.68 358.83 L1395.27 359.81 L1393.84 360.79 L1392.4 361.77 L1390.94 362.75 L1389.47 363.73 L1387.99 364.71 L1386.5 365.68 L1384.99 366.66 L1383.48 367.63 L1381.94 368.61 L1380.4 369.58 L1378.85 370.55 L1377.28 371.52 L1375.7 372.49 L1374.11 373.45 L1372.5 374.42 L1370.89 375.38 L1369.26 376.35"/>
<path d="M752 255.3 L751.24 254.47 L750.47 253.64 L749.71 252.82 L748.96 252 L748.2 251.18 L747.45 250.36 L746.7 249.54 L745.95 248.73 L745.2 247.92 L744.46 247.11 L743.72 246.3 L742.98 245.5 L742.24 244.7 L741.5 243.9 L740.77 243.1 L740.04 242.3 L739.31 241.51 L738.58 240.72 L737.86 239.93 L737.13 239.15 L736.41 238.37 L735.69 237.59 L734.97 236.81 L734.25 236.04 L733.54 235.27 L732.82 234.5 L732.11 233.74 L731.4 232.98 L730.69 232.22 L729.98 231.46 L729.28 230.71 L728.57 229.96 L727.87 229.21 L727.17 228.47 L726.46 227.73 L725.76 227 L725.06 226.26 L724.36 225.53 L723.67 224.81 L722.97 224.09 L722.27 223.37 L721.58 222.65 L720.88 221.94 L720.19 221.23 L719.49 220.53 L718.8 219.83 L718.1 219.13 L717.41 218.44 L716.72 217.75 L716.02 217.07 L715.33 216.39 L714.64 215.71 L713.94 215.04 L713.25 214.37 L712.56 213.71 L711.86 213.05 L711.17 212.4 L710.47 211.75 L709.77 211.1 L709.08 210.46 L708.38 209.82 L707.68 209.19 L706.98 208.57 L706.28 207.94 L705.57 207.33 L704.87 206.71 L704.16 206.11 L703.46 205.5 L702.75 204.91 L702.04 204.31 L701.32 203.73 L700.61 203.14 L699.89 202.57 L699.17 202 L698.45 201.43 L697.72 200.87 L697 200.32 L696.27 199.77 L695.53 199.22 L694.8 198.69 L694.06 198.15 L693.31 197.63 L692.57 197.11 L691.82 196.59 L691.07 196.09 L690.31 195.58 L689.55 195.09 L688.78 194.6 L688.01 194.11 L687.24 193.64 L686.46 193.17 L685.68 192.7 L684.89 192.24 L684.1 191.79 L683.3 191.35 L682.49 190.91 L681.69 190.48 L680.87 190.05 L680.05 189.64 L679.23 189.22 L678.4 188.82 L677.56 188.42 L676.71 188.03 L675.86 187.65 L675.01 187.28 L674.14 186.91 L673.27 186.55 L672.4 186.19 L671.51 185.85 L670.62 185.51 L669.72 185.18 L668.81 184.85 L667.9 184.54 L666.98 184.23 L666.05 183.93 L665.11 183.63 L664.16 183.35 L663.21 183.07 L662.24 182.8 L661.27 182.54 L660.29 182.29 L659.3 182.04 L658.3 181.8 L657.29 181.57 L656.27 181.35 L655.25 181.14 L654.21 180.93 L653.16 180.74 L652.1 180.55 L651.04 180.37 L649.96 180.19 L648.87 180.03 L647.77 179.87 L646.67 179.73 L645.55 179.59 L644.42 179.46 L643.28 179.34 L642.12 179.22 L640.96 179.12 L639.79 179.02 L638.6 178.94 L637.4 178.86 L636.2 178.79 L634.98 178.73 L633.74 178.67 L632.5 178.63 L631.25 178.59 L629.98 178.57 L628.7 178.55 L627.41 178.54 L626.11 178.54 L624.79 178.54 L623.46 178.56 L622.12 178.58 L620.77 178.62 L619.41 178.66 L618.03 178.71 L616.64 178.77 L615.24 178.84 L613.83 178.91 L612.4 179 L610.96 179.09 L609.51 179.19 L608.05 179.31 L606.57 179.42 L605.08 179.55 L603.58 179.69 L602.07 179.83 L600.54 179.99 L599.01 180.15 L597.46 180.32 L595.89 180.49 L594.32 180.68 L592.73 180.88 L591.13 181.08 L589.52 181.29 L587.89 181.51 L586.25 181.74 L584.61 181.97 L582.95 182.22 L581.27 182.47 L579.59 182.73 L577.89 182.99 L576.18 183.27 L574.46 183.55 L572.73 183.84 L570.99 184.14 L569.24 184.45 L567.47 184.76 L565.7 185.08 L563.91 185.41 L562.11 185.75 L560.3 186.1 L558.48 186.45 L556.65 186.81 L554.81 187.17 L552.96 187.55 L551.1 187.93 L549.23 188.31 L547.35 188.71 L545.46 189.11 L543.56 189.52 L541.65 189.94 L539.73 190.36 L537.8 190.79 L535.86 191.22 L533.92 191.67 L531.96 192.12 L530 192.57 L528.03 193.04 L526.05 193.5 L524.06 193.98 L522.07 194.46 L520.07 194.95 L518.06 195.44 L516.04 195.94 L514.01 196.45 L511.98 196.96 L509.95 197.48 L507.9 198.01 L505.85 198.54 L503.79 199.07 L501.73 199.61 L499.66 200.16 L497.59 200.72 L495.51 201.27 L493.42 201.84 L491.33 202.41 L489.24 202.98 L487.14 203.56 L485.03 204.15 L482.93 204.74 L480.82 205.34 L478.7 205.94 L476.58 206.54 L474.46 207.15 L472.33 207.77 L470.2 208.39 L468.07 209.02 L465.94 209.65 L463.8 210.28 L461.66 210.92 L459.52 211.57 L457.38 212.21 L455.24 212.87 L453.09 213.52 L450.95 214.19 L448.8 214.85 L446.65 215.52 L444.5 216.2 L442.36 216.88 L440.21 217.56 L438.06 218.25 L435.91 218.94 L433.76 219.63 L431.62 220.33 L429.47 221.04 L427.32 221.74 L425.18 222.45 L423.04 223.17 L420.9 223.88 L418.76 224.61 L416.62 225.33 L414.49 226.06 L412.36 226.79 L410.23 227.53 L408.1 228.26 L405.98 229.01 L403.86 229.75 L401.74 230.5 L399.63 231.25 L397.52 232 L395.42 232.76 L393.32 233.52 L391.22 234.29 L389.13 235.05 L387.04 235.82 L384.96 236.6 L382.88 237.37 L380.81 238.15 L378.75 238.93 L376.69 239.71 L374.63 240.5 L372.58 241.29 L370.54 242.08 L368.5 242.88 L366.48 243.67 L364.45 244.47"/>
<path d="M1441.42 245.27 L1441.37 246.08 L1441.32 246.88 L1441.25 247.69 L1441.18 248.5 L1441.11 249.32 L1441.02 250.13 L1440.93 250.95 L1440.83 251.77 L1440.72 252.59 L1440.6 253.41 L1440.47 254.24 L1440.34 255.07 L1440.19 255.9 L1440.04 256.73 L1439.88 257.56 L1439.71 258.4 L1439.53 259.24 L1439.35 260.08 L1439.15 260.92 L1438.94 261.76 L1438.73 262.6 L1438.5 263.45 L1438.27 264.3 L1438.02 265.15 L1437.77 266 L1437.51 266.85 L1437.23 267.71 L1436.95 268.56 L1436.65 269.42 L1436.35 270.28 L1436.04 271.14 L1435.71 272 L1435.38 272.86 L1435.03 273.73 L1434.67 274.59 L1434.31 275.46 L1433.93 276.33 L1433.54 277.19 L1433.14 278.06 L1432.73 278.94 L1432.31 279.81 L1431.88 280.68 L1431.44 281.56 L1430.99 282.43 L1430.52 283.31 L1430.05 284.19 L1429.56 285.07 L1429.06 285.95 L1428.55 286.83 L1428.03 287.71 L1427.5 288.59 L1426.96 289.47 L1426.4 290.36 L1425.84 291.24 L1425.26 292.13 L1424.67 293.01 L1424.07 293.9 L1423.46 294.79 L1422.83 295.68 L1422.2 296.57 L1421.55 297.46 L1420.89 298.35 L1420.22 299.24 L1419.54 300.13 L1418.85 301.02 L1418.14 301.91 L1417.42 302.81 L1416.7 303.7 L1415.95 304.59 L1415.2 305.49 L1414.44 306.38 L1413.66 307.28 L1412.88 308.17 L1412.08 309.07 L1411.27 309.96 L1410.44 310.86 L1409.61 311.76 L1408.76 312.65 L1407.91 313.55 L1407.04 314.45 L1406.16 315.34 L1405.26 316.24 L1404.36 317.14 L1403.44 318.03 L1402.52 318.93 L1401.58 319.83 L1400.63 320.73 L1399.67 321.62 L1398.69 322.52 L1397.71 323.42 L1396.71 324.32 L1395.7 325.21 L1394.68 326.11 L1393.65 327.01 L1392.61 327.9 L1391.56 328.8 L1390.49 329.7 L1389.42 330.59 L1388.33 331.49 L1387.23 332.38 L1386.12 333.28 L1385 334.17 L1383.87 335.07 L1382.73 335.96 L1381.57 336.85 L1380.41 337.75 L1379.23 338.64 L1378.05 339.53 L1376.85 340.42 L1375.64 341.31 L1374.42 342.2 L1373.2 343.09 L1371.96 343.98 L1370.71 344.87 L1369.45 345.76 L1368.18 346.65 L1366.9 347.53 L1365.6 348.42 L1364.3 349.31 L1362.99 350.19 L1361.67 351.07"/>
</g>
<g fill="none" stroke="#2f79a2" stroke-width="1.35" stroke-dasharray="1.4 2.3">
<path d="M442.4 246.9 L442.89 246.52 L443.38 246.13 L443.87 245.75 L444.37 245.37 L444.87 244.99 L445.36 244.6 L445.86 244.22 L446.37 243.84 L446.87 243.46 L447.38 243.07 L447.89 242.69 L448.4 242.31 L448.91 241.93 L449.42 241.54 L449.94 241.16 L450.46 240.78 L450.98 240.4 L451.5 240.02 L452.02 239.63 L452.55 239.25 L453.07 238.87 L453.6 238.49 L454.13 238.1 L454.66 237.72 L455.2 237.34 L455.73 236.96 L456.27 236.58 L456.81 236.19 L457.35 235.81 L457.9 235.43 L458.44 235.05 L458.99 234.67 L459.54 234.28 L460.09 233.9 L460.64 233.52 L461.2 233.14 L461.75 232.76 L462.31 232.38 L462.87 231.99 L463.43 231.61 L464 231.23 L464.56 230.85 L465.13 230.47 L465.7 230.09 L466.27 229.7 L466.84 229.32 L467.42 228.94 L467.99 228.56 L468.57 228.18 L469.15 227.8 L469.73 227.42 L470.31 227.03 L470.9 226.65 L471.49 226.27 L472.08 225.89 L472.67 225.51 L473.26 225.13 L473.85 224.75 L474.45 224.37 L475.04 223.98 L475.64 223.6 L476.24 223.22 L476.85 222.84 L477.45 222.46 L478.06 222.08 L478.66 221.7 L479.27 221.32 L479.88 220.94 L480.5 220.56 L481.11 220.18 L481.73 219.79 L482.35 219.41 L482.96 219.03 L483.59 218.65 L484.21 218.27 L484.83 217.89 L485.46 217.51 L486.09 217.13 L486.72 216.75 L487.35 216.37 L487.98 215.99 L488.62 215.61 L489.25 215.23 L489.89 214.85 L490.53 214.47 L491.17 214.09 L491.82 213.71 L492.46 213.33 L493.11 212.95 L493.75 212.57 L494.4 212.19 L495.05 211.81 L495.71 211.43 L496.36 211.05 L497.02 210.67 L497.68 210.29 L498.34 209.91 L499 209.53 L499.66 209.15 L500.32 208.77 L500.99 208.39 L501.66 208.01 L502.32 207.63 L503 207.25 L503.67 206.87 L504.34 206.5 L505.02 206.12 L505.69 205.74 L506.37 205.36 L507.05 204.98 L507.73 204.6 L508.42 204.22 L509.1 203.84 L509.79 203.46 L510.47 203.08 L511.16 202.7 L511.85 202.33 L512.55 201.95 L513.24 201.57 L513.94 201.19 L514.63 200.81 L515.33 200.43 L516.03 200.05 L516.73 199.68 L517.44 199.3 L518.14 198.92 L518.85 198.54 L519.55 198.16 L520.26 197.79 L520.97 197.41 L521.68 197.03 L522.4 196.65 L523.11 196.27 L523.83 195.9 L524.55 195.52 L525.27 195.14 L525.99 194.76 L526.71 194.38 L527.43 194.01 L528.16 193.63 L528.88 193.25 L529.61 192.87 L530.34 192.5 L531.07 192.12 L531.8 191.74 L532.54 191.37 L533.27 190.99 L534.01 190.61 L534.75 190.23 L535.49 189.86 L536.23 189.48 L536.97 189.1 L537.71 188.73 L538.46 188.35 L539.2 187.97 L539.95 187.6 L540.7 187.22 L541.45 186.84 L542.2 186.47 L542.95 186.09 L543.71 185.72 L544.46 185.34 L545.22 184.96 L545.98 184.59 L546.74 184.21 L547.5 183.84 L548.26 183.46 L549.02 183.08 L549.79 182.71 L550.56 182.33 L551.32 181.96 L552.09 181.58 L552.86 181.21 L553.63 180.83 L554.41 180.46 L555.18 180.08 L555.95 179.71 L556.73 179.33 L557.51 178.96 L558.29 178.58 L559.07 178.21 L559.85 177.83 L560.63 177.46 L561.42 177.08 L562.2 176.71 L562.99 176.34 L563.77 175.96 L564.56 175.59 L565.35 175.21 L566.14 174.84 L566.94 174.47 L567.73 174.09 L568.52 173.72 L569.32 173.34 L570.12 172.97 L570.92 172.6 L571.72 172.22 L572.52 171.85 L573.32 171.48 L574.12 171.1 L574.92 170.73 L575.73 170.36 L576.54 169.99 L577.34 169.61 L578.15 169.24 L578.96 168.87 L579.77 168.5 L580.58 168.12 L581.4 167.75 L582.21 167.38 L583.03 167.01 L583.84 166.64 L584.66 166.26 L585.48 165.89 L586.3 165.52 L587.12 165.15 L587.94 164.78 L588.76 164.41 L589.59 164.04 L590.41 163.66 L591.24 163.29 L592.06 162.92 L592.89 162.55 L593.72 162.18 L594.55 161.81 L595.38 161.44 L596.21 161.07 L597.04 160.7 L597.88 160.33 L598.71 159.96 L599.55 159.59 L600.38 159.22 L601.22 158.85 L602.06 158.48 L602.9 158.11 L603.74 157.74 L604.58 157.37 L605.42 157.01 L606.27 156.64 L607.11 156.27 L607.96 155.9 L608.8 155.53 L609.65 155.16 L610.5 154.8 L611.34 154.43 L612.19 154.06 L613.04 153.69 L613.89 153.32 L614.75 152.96 L615.6 152.59 L616.45 152.22 L617.31 151.86 L618.16 151.49 L619.02 151.12 L619.88 150.76 L620.73 150.39 L621.59 150.02 L622.45 149.66 L623.31 149.29 L624.17 148.93 L625.03 148.56 L625.9 148.19 L626.76 147.83 L627.62 147.46 L628.49 147.1 L629.35 146.73 L630.22 146.37 L631.08 146 L631.95 145.64 L632.82 145.28 L633.69 144.91 L634.56 144.55 L635.43 144.18 L636.3 143.82 L637.17 143.46 L638.04 143.1 L638.92 142.73 L639.79 142.37 L640.66 142.01 L641.54 141.64 L642.41 141.28 L643.29 140.92 L644.16 140.56 L645.04 140.2 L645.92 139.84 L646.8 139.47 L647.68 139.11 L648.55 138.75 L649.43 138.39 L650.31 138.03 L651.2 137.67 L652.08 137.31 L652.96 136.95 L653.84 136.59 L654.72 136.23 L655.61 135.87 L656.49 135.52 L657.38 135.16 L658.26 134.8 L659.14 134.44 L660.03 134.08 L660.92 133.72 L661.8 133.37 L662.69 133.01 L663.58 132.65 L664.46 132.3 L665.35 131.94 L666.24 131.58 L667.13 131.23 L668.02 130.87 L668.91 130.52 L669.8 130.16 L670.69 129.81 L671.58 129.45 L672.47 129.1 L673.36 128.74 L674.25 128.39 L675.14 128.04 L676.03 127.68 L676.92 127.33 L677.82 126.98 L678.71 126.62 L679.6 126.27 L680.49 125.92 L681.39 125.57 L682.28 125.22 L683.17 124.87 L684.07 124.51 L684.96 124.16 L685.85 123.81 L686.75 123.46 L687.64 123.12 L688.54 122.77 L689.43 122.42 L690.32 122.07 L691.22 121.72 L692.11 121.37 L693.01 121.03 L693.9 120.68 L694.8 120.33 L695.69 119.99 L696.58 119.64 L697.48 119.29 L698.37 118.95 L699.27 118.6 L700.16 118.26 L701.06 117.91 L701.95 117.57 L702.84 117.23 L703.74 116.88 L704.63 116.54 L705.52 116.2 L706.42 115.86 L707.31 115.52 L708.2 115.17 L709.1 114.83 L709.99 114.49 L710.88 114.15 L711.77 113.81 L712.66 113.48 L713.56 113.14 L714.45 112.8 L715.34 112.46 L716.23 112.13 L717.12 111.79 L718.01 111.45 L718.9 111.12 L719.79 110.78 L720.68 110.45 L721.56 110.11 L722.45 109.78 L723.34 109.45 L724.23 109.11 L725.11 108.78 L726 108.45 L726.88 108.12 L727.77 107.79 L728.65 107.46 L729.54 107.13 L730.42 106.8 L731.3 106.47 L732.18 106.14 L733.07 105.82 L733.95 105.49 L734.83 105.16 L735.71 104.84 L736.58 104.51 L737.46 104.19 L738.34 103.87 L739.21 103.54 L740.09 103.22 L740.96 102.9 L741.84 102.58 L742.71 102.26 L743.58 101.94 L744.45 101.62 L745.32 101.3 L746.19 100.98 L747.06 100.67 L747.93 100.35 L748.79 100.04 L749.66 99.72 L750.52 99.41 L751.39 99.09 L752.25 98.78 L753.11 98.47 L753.97 98.16 L754.83 97.85 L755.68 97.54 L756.54 97.23 L757.4 96.93 L758.25 96.62 L759.1 96.31 L759.95 96.01 L760.8 95.7 L761.65 95.4 L762.5 95.1 L763.34 94.8 L764.19 94.5 L765.03 94.2 L765.87 93.9 L766.71 93.6 L767.55 93.3 L768.38 93.01 L769.22 92.71 L770.05 92.42 L770.88 92.13 L771.71 91.84 L772.54 91.55 L773.37 91.26 L774.19 90.97 L775.01 90.68 L775.83 90.4 L776.65 90.11 L777.47 89.83 L778.28 89.54 L779.1 89.26 L779.91 88.98 L780.72 88.7 L781.52 88.43 L782.33 88.15 L783.13 87.87 L783.93 87.6 L784.73 87.33 L785.53 87.06 L786.32 86.79 L787.11 86.52 L787.9 86.25 L788.69 85.98 L789.47 85.72 L790.26 85.46 L791.04 85.19 L791.81 84.93 L792.59 84.68 L793.36 84.42 L794.13 84.16 L794.9 83.91 L795.66 83.66 L796.42 83.4 L797.18 83.15 L797.94 82.91 L798.69 82.66 L799.44 82.42 L800.19 82.17 L800.93 81.93 L801.67 81.69 L802.41 81.46 L803.15 81.22 L803.88 80.99 L804.61 80.75 L805.34 80.52 L806.06 80.3 L806.78 80.07 L807.5 79.84 L808.21 79.62 L808.92 79.4 L809.63 79.18 L810.33 78.97 L811.03 78.75 L811.73 78.54 L812.42 78.33 L813.11 78.12 L813.8 77.92 L814.48 77.71 L815.16 77.51 L815.83 77.31 L816.51 77.11 L817.17 76.92 L817.84 76.73 L818.5 76.54 L819.15 76.35 L819.81 76.16 L820.45 75.98 L821.1 75.8 L821.74 75.62 L822.38 75.45 L823.01 75.27 L823.64 75.1 L824.26 74.94 L824.88 74.77 L825.5 74.61 L826.11 74.45 L826.72 74.29 L827.32 74.14 L827.92 73.99 L828.52 73.84 L829.11 73.69 L829.7 73.55 L830.28 73.41 L830.86 73.27 L831.43 73.14 L832 73 L832.57 72.88 L833.13 72.75 L833.68 72.63 L834.23 72.51 L834.78 72.39 L835.32 72.28 L835.86 72.17 L836.4 72.06 L836.93 71.96 L837.45 71.86 L837.97 71.76 L838.49 71.66 L839 71.57 L839.5 71.49 L840.01 71.4 L840.5 71.32 L841 71.24 L841.49 71.17 L841.97 71.1 L842.45 71.03 L842.93 70.96 L843.4 70.9 L843.86 70.85 L844.32 70.79 L844.78 70.74 L845.23 70.69 L845.68 70.65 L846.13 70.61 L846.57 70.57 L847 70.54 L847.43 70.51 L847.86 70.48 L848.28 70.46 L848.7 70.44 L849.11 70.42 L849.52 70.41 L849.93 70.4 L850.33 70.4 L850.73 70.4 L851.12 70.4 L851.51 70.4 L851.89 70.41 L852.28 70.43 L852.65 70.44 L853.03 70.46 L853.39 70.48 L853.76 70.51 L854.12 70.54 L854.48 70.57 L854.83 70.61 L855.18 70.65 L855.53 70.7 L855.87 70.74 L856.21 70.79 L856.55 70.85 L856.88 70.91 L857.21 70.97 L857.53 71.03 L857.86 71.1 L858.17 71.17 L858.49 71.25 L858.8 71.32 L859.11 71.41 L859.42 71.49 L859.72 71.58 L860.02 71.67 L860.32 71.76 L860.61 71.86 L860.9 71.96 L861.19 72.07 L861.48 72.17 L861.76 72.28 L862.04 72.4 L862.32 72.51 L862.59 72.63 L862.86 72.76 L863.13 72.88 L863.4 73.01 L863.66 73.14 L863.93 73.28 L864.19 73.42 L864.44 73.56 L864.7 73.7 L864.95 73.84 L865.2 73.99 L865.45 74.15 L865.7 74.3"/>
<path d="M442.4 246.9 L443.02 246.42 L443.63 245.94 L444.25 245.46 L444.88 244.97 L445.51 244.49 L446.14 244.01 L446.77 243.53 L447.4 243.05 L448.04 242.57 L448.69 242.09 L449.33 241.61 L449.98 241.12 L450.63 240.64 L451.28 240.16 L451.94 239.68 L452.6 239.2 L453.26 238.72 L453.93 238.24 L454.6 237.76 L455.27 237.28 L455.94 236.8 L456.62 236.32 L457.3 235.84 L457.98 235.35 L458.67 234.87 L459.36 234.39 L460.05 233.91 L460.75 233.43 L461.44 232.95 L462.14 232.47 L462.85 231.99 L463.55 231.51 L464.26 231.03 L464.97 230.55 L465.69 230.07 L466.41 229.59 L467.13 229.11 L467.85 228.63 L468.58 228.15 L469.31 227.67 L470.04 227.19 L470.77 226.71 L471.51 226.23 L472.25 225.75 L472.99 225.27 L473.74 224.79 L474.49 224.31 L475.24 223.83 L475.99 223.35 L476.75 222.87 L477.51 222.4 L478.27 221.92 L479.03 221.44 L479.8 220.96 L480.57 220.48 L481.35 220 L482.12 219.52 L482.9 219.04 L483.68 218.56 L484.46 218.08 L485.25 217.61 L486.04 217.13 L486.83 216.65 L487.63 216.17 L488.42 215.69 L489.22 215.21 L490.03 214.73 L490.83 214.26 L491.64 213.78 L492.45 213.3 L493.26 212.82 L494.08 212.34 L494.89 211.86 L495.72 211.39 L496.54 210.91 L497.36 210.43 L498.19 209.95 L499.02 209.48 L499.86 209 L500.69 208.52 L501.53 208.04 L502.37 207.57 L503.22 207.09 L504.06 206.61 L504.91 206.13 L505.76 205.66 L506.61 205.18 L507.47 204.7 L508.33 204.23 L509.19 203.75 L510.05 203.27 L510.92 202.79 L511.79 202.32 L512.66 201.84 L513.53 201.37 L514.41 200.89 L515.28 200.41 L516.16 199.94 L517.05 199.46 L517.93 198.98 L518.82 198.51 L519.71 198.03 L520.6 197.56 L521.5 197.08 L522.39 196.6 L523.29 196.13 L524.19 195.65 L525.1 195.18 L526 194.7 L526.91 194.23 L527.82 193.75 L528.73 193.28 L529.65 192.8 L530.57 192.33 L531.49 191.85 L532.41 191.38 L533.33 190.9 L534.26 190.43 L535.19 189.96 L536.12 189.48 L537.05 189.01 L537.99 188.53 L538.93 188.06 L539.86 187.59 L540.81 187.11 L541.75 186.64 L542.7 186.16 L543.64 185.69 L544.6 185.22 L545.55 184.74 L546.5 184.27 L547.46 183.8 L548.42 183.33 L549.38 182.85 L550.34 182.38 L551.31 181.91 L552.27 181.43 L553.24 180.96 L554.21 180.49 L555.19 180.02 L556.16 179.55 L557.14 179.07 L558.12 178.6 L559.1 178.13 L560.08 177.66 L561.07 177.19 L562.05 176.72 L563.04 176.25 L564.03 175.78 L565.03 175.3 L566.02 174.83 L567.02 174.36 L568.02 173.89 L569.02 173.42 L570.02 172.95 L571.02 172.48 L572.03 172.01 L573.04 171.54 L574.05 171.07 L575.06 170.6 L576.07 170.13 L577.09 169.67 L578.1 169.2 L579.12 168.73 L580.14 168.26 L581.16 167.79 L582.19 167.32 L583.21 166.85 L584.24 166.39 L585.27 165.92 L586.3 165.45 L587.33 164.98 L588.37 164.52 L589.4 164.05 L590.44 163.58 L591.48 163.11 L592.52 162.65 L593.56 162.18 L594.61 161.71 L595.65 161.25 L596.7 160.78 L597.75 160.32 L598.8 159.85 L599.85 159.39 L600.9 158.92 L601.96 158.46 L603.01 157.99 L604.07 157.53 L605.13 157.06 L606.19 156.6 L607.25 156.13 L608.31 155.67 L609.38 155.21 L610.44 154.74 L611.51 154.28 L612.58 153.82 L613.65 153.35 L614.72 152.89 L615.8 152.43 L616.87 151.97 L617.95 151.51 L619.02 151.04 L620.1 150.58 L621.18 150.12 L622.26 149.66 L623.34 149.2 L624.43 148.74 L625.51 148.28 L626.6 147.82 L627.68 147.36 L628.77 146.9 L629.86 146.44 L630.95 145.98 L632.04 145.52 L633.14 145.06 L634.23 144.61 L635.32 144.15 L636.42 143.69 L637.52 143.23 L638.61 142.78 L639.71 142.32 L640.81 141.86 L641.91 141.41 L643.02 140.95 L644.12 140.5 L645.22 140.04 L646.33 139.59 L647.43 139.13 L648.54 138.68 L649.65 138.22 L650.75 137.77 L651.86 137.32 L652.97 136.86 L654.08 136.41 L655.19 135.96 L656.31 135.51 L657.42 135.05 L658.53 134.6 L659.65 134.15 L660.76 133.7 L661.88 133.25 L662.99 132.8 L664.11 132.35 L665.23 131.9 L666.35 131.45 L667.46 131.01 L668.58 130.56 L669.7 130.11 L670.82 129.66 L671.94 129.22 L673.06 128.77 L674.19 128.32 L675.31 127.88 L676.43 127.43 L677.55 126.99 L678.68 126.55 L679.8 126.1 L680.92 125.66 L682.05 125.22 L683.17 124.77 L684.3 124.33 L685.42 123.89 L686.55 123.45 L687.67 123.01 L688.8 122.57 L689.92 122.13 L691.05 121.69 L692.18 121.25 L693.3 120.82 L694.43 120.38 L695.55 119.94 L696.68 119.51 L697.81 119.07 L698.93 118.64 L700.06 118.2 L701.18 117.77 L702.31 117.34 L703.43 116.9 L704.56 116.47 L705.68 116.04 L706.81 115.61 L707.93 115.18 L709.06 114.75 L710.18 114.32 L711.31 113.89 L712.43 113.47 L713.55 113.04 L714.67 112.61 L715.8 112.19 L716.92 111.76 L718.04 111.34 L719.16 110.92 L720.28 110.5 L721.4 110.07 L722.51 109.65 L723.63 109.23 L724.75 108.82 L725.86 108.4 L726.98 107.98 L728.09 107.56 L729.21 107.15 L730.32 106.73 L731.43 106.32 L732.54 105.91 L733.65 105.49 L734.76 105.08 L735.87 104.67 L736.97 104.26 L738.08 103.85 L739.18 103.45 L740.29 103.04 L741.39 102.64 L742.49 102.23 L743.59 101.83 L744.68 101.43 L745.78 101.03 L746.87 100.63 L747.97 100.23 L749.06 99.83 L750.15 99.43 L751.24 99.04 L752.32 98.64 L753.41 98.25 L754.49 97.86 L755.57 97.47 L756.65 97.08 L757.73 96.69 L758.8 96.31 L759.87 95.92 L760.94 95.54 L762.01 95.15 L763.08 94.77 L764.14 94.39 L765.21 94.02 L766.26 93.64 L767.32 93.26 L768.38 92.89 L769.43 92.52 L770.48 92.15 L771.52 91.78 L772.57 91.41 L773.61 91.05 L774.65 90.69 L775.68 90.32 L776.72 89.96 L777.75 89.61 L778.77 89.25 L779.8 88.89 L780.82 88.54 L781.84 88.19 L782.85 87.84 L783.86 87.5 L784.87 87.15 L785.87 86.81 L786.87 86.47 L787.87 86.13 L788.86 85.79 L789.85 85.46 L790.83 85.13 L791.81 84.8 L792.79 84.47 L793.77 84.15 L794.73 83.82 L795.7 83.5 L796.66 83.19 L797.62 82.87 L798.57 82.56 L799.52 82.25 L800.46 81.94 L801.4 81.64 L802.33 81.34 L803.26 81.04 L804.18 80.74 L805.1 80.45 L806.02 80.16 L806.93 79.87 L807.83 79.59 L808.73 79.31 L809.62 79.03 L810.51 78.76 L811.4 78.49 L812.27 78.22 L813.14 77.95 L814.01 77.69 L814.87 77.43 L815.73 77.18 L816.58 76.93 L817.42 76.68 L818.26 76.44 L819.09 76.2 L819.91 75.96 L820.73 75.73 L821.54 75.5 L822.35 75.28 L823.15 75.06 L823.94 74.84 L824.73 74.63 L825.51 74.42 L826.28 74.22 L827.05 74.02 L827.81 73.83 L828.57 73.64 L829.31 73.45 L830.05 73.27 L830.79 73.09 L831.51 72.92 L832.23 72.75 L832.94 72.59 L833.65 72.43 L834.35 72.28 L835.04 72.13 L835.72 71.99 L836.4 71.85 L837.07 71.71 L837.73 71.58 L838.39 71.46 L839.04 71.34 L839.68 71.23 L840.31 71.12 L840.94 71.02 L841.56 70.92 L842.17 70.83 L842.78 70.74 L843.38 70.66 L843.97 70.58 L844.55 70.51 L845.13 70.45 L845.7 70.39 L846.26 70.33 L846.82 70.29 L847.36 70.24 L847.91 70.21 L848.44 70.17 L848.97 70.15 L849.49 70.13 L850.01 70.11 L850.51 70.1 L851.01 70.1 L851.51 70.1 L852 70.11 L852.48 70.12 L852.95 70.14 L853.42 70.17 L853.89 70.2 L854.34 70.23 L854.79 70.27 L855.24 70.32 L855.68 70.37 L856.11 70.43 L856.54 70.49 L856.96 70.56 L857.38 70.64 L857.79 70.72 L858.19 70.8 L858.59 70.89 L858.99 70.99 L859.38 71.09 L859.76 71.19 L860.14 71.31 L860.52 71.42 L860.89 71.54 L861.26 71.67 L861.62 71.8 L861.97 71.94 L862.33 72.08 L862.67 72.23 L863.02 72.38 L863.36 72.54 L863.7 72.7 L864.03 72.87 L864.36 73.04 L864.68 73.21 L865 73.39 L865.32 73.58 L865.64 73.77 L865.95 73.96 L866.26 74.16 L866.56 74.36 L866.86 74.57 L867.16 74.78 L867.46 74.99 L867.75 75.21 L868.04 75.43 L868.33 75.66 L868.61 75.89 L868.9 76.13 L869.18 76.36 L869.45 76.61 L869.73 76.85 L870 77.1 L870.27 77.35 L870.54 77.61 L870.81 77.87 L871.07 78.13 L871.34 78.4 L871.6 78.67 L871.86 78.94 L872.11 79.22 L872.37 79.5 L872.62 79.78 L872.88 80.07 L873.13 80.36 L873.38 80.65 L873.62 80.95 L873.87 81.24 L874.12 81.54 L874.36 81.85 L874.6 82.15 L874.84 82.46 L875.08 82.77 L875.32 83.09 L875.56 83.4 L875.8 83.72 L876.03 84.04 L876.27 84.37 L876.5 84.7 L876.74 85.02 L876.97 85.35 L877.2 85.69 L877.43 86.02 L877.66 86.36 L877.89 86.7 L878.12 87.04 L878.35 87.39 L878.57 87.73 L878.8 88.08 L879.02 88.43 L879.25 88.78 L879.47 89.14 L879.7 89.49 L879.92 89.85 L880.14 90.21 L880.36 90.57 L880.59 90.93 L880.81 91.3 L881.03 91.67 L881.25 92.03 L881.47 92.4 L881.69 92.77 L881.91 93.15 L882.12 93.52 L882.34 93.9 L882.56 94.28 L882.78 94.65 L883 95.03 L883.21 95.42 L883.43 95.8 L883.65 96.18 L883.86 96.57 L884.08 96.96 L884.29 97.35 L884.51 97.74 L884.72 98.13 L884.94 98.52 L885.15 98.91 L885.37 99.31 L885.58 99.7 L885.8 100.1 L886.01 100.5 L886.22 100.9 L886.44 101.3 L886.65 101.7 L886.87 102.1 L887.08 102.51 L887.29 102.91 L887.51 103.32 L887.72 103.73 L887.93 104.13 L888.14 104.54 L888.36 104.95 L888.57 105.36 L888.78 105.78 L888.99 106.19 L889.21 106.6 L889.42 107.02 L889.63 107.43 L889.84 107.85 L890.05 108.27 L890.27 108.68 L890.48 109.1 L890.69 109.52 L890.9 109.94 L891.11 110.36 L891.33 110.79 L891.54 111.21 L891.75 111.63 L891.96 112.06 L892.17 112.48 L892.38 112.91 L892.6 113.33 L892.81 113.76 L893.02 114.19 L893.23 114.62 L893.44 115.04 L893.65 115.47 L893.87 115.91 L894.08 116.34 L894.29 116.77 L894.5 117.2"/>
<path d="M442.4 246.9 L442.8 246.67 L443.21 246.44 L443.61 246.21 L444.01 245.98 L444.42 245.76 L444.83 245.53 L445.23 245.3 L445.64 245.07 L446.05 244.84 L446.46 244.61 L446.87 244.38 L447.27 244.16 L447.68 243.93 L448.1 243.7 L448.51 243.47 L448.92 243.24 L449.33 243.01 L449.75 242.79 L450.16 242.56 L450.57 242.33 L450.99 242.1 L451.4 241.88 L451.82 241.65 L452.24 241.42 L452.65 241.19 L453.07 240.97 L453.49 240.74 L453.91 240.51 L454.33 240.28 L454.75 240.06 L455.17 239.83 L455.59 239.6 L456.02 239.38 L456.44 239.15 L456.86 238.92 L457.29 238.7 L457.71 238.47 L458.13 238.24 L458.56 238.02 L458.99 237.79 L459.41 237.56 L459.84 237.34 L460.27 237.11 L460.7 236.89 L461.13 236.66 L461.56 236.43 L461.99 236.21 L462.42 235.98 L462.85 235.76 L463.28 235.53 L463.71 235.31 L464.14 235.08 L464.58 234.85 L465.01 234.63 L465.45 234.4 L465.88 234.18 L466.32 233.95 L466.75 233.73 L467.19 233.5 L467.63 233.28 L468.06 233.06 L468.5 232.83 L468.94 232.61 L469.38 232.38 L469.82 232.16 L470.26 231.93 L470.7 231.71 L471.14 231.48 L471.59 231.26 L472.03 231.04 L472.47 230.81 L472.91 230.59 L473.36 230.37 L473.8 230.14 L474.25 229.92 L474.69 229.69 L475.14 229.47 L475.59 229.25 L476.03 229.03 L476.48 228.8 L476.93 228.58 L477.38 228.36 L477.83 228.13 L478.28 227.91 L478.73 227.69 L479.18 227.47 L479.63 227.24 L480.08 227.02 L480.53 226.8 L480.98 226.58 L481.44 226.35 L481.89 226.13 L482.34 225.91 L482.8 225.69 L483.25 225.47 L483.71 225.25 L484.16 225.02 L484.62 224.8 L485.08 224.58 L485.53 224.36 L485.99 224.14 L486.45 223.92 L486.91 223.7 L487.37 223.48 L487.83 223.26 L488.29 223.03 L488.75 222.81 L489.21 222.59 L489.67 222.37 L490.13 222.15 L490.59 221.93 L491.06 221.71 L491.52 221.49 L491.98 221.27 L492.45 221.05 L492.91 220.83 L493.38 220.61 L493.84 220.4 L494.31 220.18 L494.77 219.96 L495.24 219.74 L495.71 219.52 L496.17 219.3 L496.64 219.08 L497.11 218.86 L497.58 218.64 L498.05 218.43 L498.52 218.21 L498.99 217.99 L499.46 217.77 L499.93 217.55 L500.4 217.34 L500.87 217.12 L501.34 216.9 L501.82 216.68 L502.29 216.46 L502.76 216.25 L503.23 216.03 L503.71 215.81 L504.18 215.6 L504.66 215.38 L505.13 215.16 L505.61 214.95 L506.08 214.73 L506.56 214.51 L507.04 214.3 L507.51 214.08 L507.99 213.86 L508.47 213.65 L508.95 213.43 L509.42 213.22 L509.9 213 L510.38 212.79 L510.86 212.57 L511.34 212.36 L511.82 212.14 L512.3 211.93 L512.78 211.71 L513.26 211.5 L513.75 211.28 L514.23 211.07 L514.71 210.85 L515.19 210.64 L515.68 210.42 L516.16 210.21 L516.64 210 L517.13 209.78 L517.61 209.57 L518.1 209.36 L518.58 209.14 L519.07 208.93 L519.55 208.72 L520.04 208.5 L520.52 208.29 L521.01 208.08 L521.5 207.86 L521.98 207.65 L522.47 207.44 L522.96 207.23 L523.45 207.02 L523.94 206.8 L524.42 206.59 L524.91 206.38 L525.4 206.17 L525.89 205.96 L526.38 205.75 L526.87 205.54 L527.36 205.32 L527.85 205.11 L528.34 204.9 L528.83 204.69 L529.33 204.48 L529.82 204.27 L530.31 204.06 L530.8 203.85 L531.3 203.64 L531.79 203.43 L532.28 203.22 L532.77 203.01 L533.27 202.8 L533.76 202.59 L534.26 202.39 L534.75 202.18 L535.24 201.97 L535.74 201.76 L536.23 201.55 L536.73 201.34 L537.23 201.14 L537.72 200.93 L538.22 200.72 L538.71 200.51 L539.21 200.3 L539.71 200.1 L540.2 199.89 L540.7 199.68 L541.2 199.48 L541.7 199.27 L542.19 199.06 L542.69 198.86 L543.19 198.65 L543.69 198.44 L544.19 198.24 L544.69 198.03 L545.19 197.83 L545.68 197.62 L546.18 197.42 L546.68 197.21 L547.18 197.01 L547.68 196.8 L548.18 196.6 L548.68 196.39 L549.19 196.19 L549.69 195.98 L550.19 195.78 L550.69 195.58 L551.19 195.37 L551.69 195.17 L552.19 194.97 L552.69 194.76 L553.2 194.56 L553.7 194.36 L554.2 194.15 L554.7 193.95 L555.21 193.75 L555.71 193.55 L556.21 193.35 L556.71 193.14 L557.22 192.94 L557.72 192.74 L558.22 192.54 L558.73 192.34 L559.23 192.14 L559.74 191.94 L560.24 191.74 L560.74 191.54 L561.25 191.34 L561.75 191.14 L562.26 190.94 L562.76 190.74 L563.27 190.54 L563.77 190.34 L564.27 190.14 L564.78 189.94 L565.28 189.74 L565.79 189.54 L566.3 189.34 L566.8 189.15 L567.31 188.95 L567.81 188.75 L568.32 188.55 L568.82 188.36 L569.33 188.16 L569.83 187.96 L570.34 187.77 L570.85 187.57 L571.35 187.37 L571.86 187.18 L572.36 186.98 L572.87 186.78 L573.38 186.59 L573.88 186.39 L574.39 186.2 L574.9 186 L575.4 185.81 L575.91 185.61 L576.42 185.42 L576.92 185.23 L577.43 185.03 L577.94 184.84 L578.44 184.64 L578.95 184.45 L579.46 184.26 L579.96 184.06 L580.47 183.87 L580.98 183.68 L581.48 183.49 L581.99 183.3 L582.5 183.1 L583 182.91 L583.51 182.72 L584.02 182.53 L584.53 182.34 L585.03 182.15 L585.54 181.96 L586.05 181.77 L586.55 181.58 L587.06 181.39 L587.57 181.2 L588.07 181.01 L588.58 180.82 L589.09 180.63 L589.59 180.44 L590.1 180.25 L590.61 180.06 L591.11 179.88 L591.62 179.69 L592.13 179.5 L592.63 179.31 L593.14 179.13 L593.65 178.94 L594.15 178.75 L594.66 178.57 L595.16 178.38 L595.67 178.19 L596.18 178.01 L596.68 177.82 L597.19 177.64 L597.69 177.45 L598.2 177.27 L598.71 177.08 L599.21 176.9 L599.72 176.71 L600.22 176.53 L600.73 176.35 L601.23 176.16 L601.74 175.98 L602.24 175.8 L602.75 175.61 L603.25 175.43 L603.76 175.25 L604.26 175.07 L604.77 174.89 L605.27 174.71 L605.78 174.52 L606.28 174.34 L606.78 174.16 L607.29 173.98 L607.79 173.8 L608.3 173.62 L608.8 173.44 L609.3 173.26 L609.81 173.08 L610.31 172.91 L610.81 172.73 L611.31 172.55 L611.82 172.37 L612.32 172.19 L612.82 172.02 L613.32 171.84 L613.83 171.66 L614.33 171.49 L614.83 171.31 L615.33 171.13 L615.83 170.96 L616.33 170.78 L616.83 170.61 L617.33 170.43 L617.83 170.26 L618.34 170.08 L618.84 169.91 L619.34 169.74 L619.83 169.56 L620.33 169.39 L620.83 169.22 L621.33 169.04 L621.83 168.87 L622.33 168.7 L622.83 168.53 L623.33 168.36 L623.82 168.18 L624.32 168.01 L624.82 167.84 L625.32 167.67 L625.81 167.5 L626.31 167.33 L626.81 167.16 L627.3 166.99 L627.8 166.83 L628.3 166.66 L628.79 166.49 L629.29 166.32 L629.78 166.15 L630.28 165.99 L630.77 165.82 L631.26 165.65 L631.76 165.49 L632.25 165.32 L632.75 165.15 L633.24 164.99 L633.73 164.82 L634.22 164.66 L634.72 164.49 L635.21 164.33 L635.7 164.17 L636.19 164 L636.68 163.84 L637.17 163.68 L637.66 163.51 L638.15 163.35 L638.64 163.19 L639.13 163.03 L639.62 162.87 L640.11 162.71 L640.6 162.55 L641.09 162.39 L641.57 162.23 L642.06 162.07 L642.55 161.91 L643.03 161.75 L643.52 161.59 L644.01 161.43 L644.49 161.27 L644.98 161.12 L645.46 160.96 L645.95 160.8 L646.43 160.65 L646.92 160.49 L647.4 160.33 L647.88 160.18 L648.36 160.02 L648.85 159.87 L649.33 159.71 L649.81 159.56 L650.29 159.41 L650.77 159.25 L651.25 159.1 L651.73 158.95 L652.21 158.8 L652.69 158.64 L653.17 158.49 L653.65 158.34 L654.13 158.19 L654.6 158.04 L655.08 157.89 L655.56 157.74 L656.03 157.59 L656.51 157.44 L656.99 157.29 L657.46 157.15 L657.93 157 L658.41 156.85 L658.88 156.7 L659.36 156.56 L659.83 156.41 L660.3 156.27 L660.77 156.12 L661.24 155.98 L661.71 155.83 L662.18 155.69 L662.65 155.54 L663.12 155.4 L663.59 155.26 L664.06 155.11 L664.53 154.97 L665 154.83 L665.46 154.69 L665.93 154.55 L666.4 154.41 L666.86 154.27 L667.33 154.13 L667.79 153.99 L668.26 153.85 L668.72 153.71 L669.18 153.57 L669.65 153.43 L670.11 153.3 L670.57 153.16 L671.03 153.02 L671.49 152.89 L671.95 152.75 L672.41 152.61 L672.87 152.48 L673.33 152.35 L673.79 152.21 L674.24 152.08 L674.7 151.94 L675.16 151.81 L675.61 151.68 L676.07 151.55 L676.52 151.42 L676.98 151.29 L677.43 151.15 L677.88 151.02 L678.33 150.89 L678.79 150.77 L679.24 150.64 L679.69 150.51 L680.14 150.38 L680.59 150.25 L681.04 150.13 L681.48 150 L681.93 149.87 L682.38 149.75 L682.83 149.62 L683.27 149.5 L683.72 149.37 L684.16 149.25 L684.61 149.13 L685.05 149 L685.49 148.88 L685.93 148.76 L686.38 148.64 L686.82 148.52 L687.26 148.4 L687.7 148.27 L688.14 148.16 L688.58 148.04 L689.01 147.92 L689.45 147.8 L689.89 147.68 L690.32 147.56 L690.76 147.45 L691.19 147.33 L691.63 147.21 L692.06 147.1 L692.49 146.98 L692.93 146.87 L693.36 146.76 L693.79 146.64 L694.22 146.53 L694.65 146.42 L695.08 146.31 L695.51 146.19 L695.93 146.08 L696.36 145.97 L696.79 145.86 L697.21 145.75 L697.64 145.64 L698.06 145.54 L698.48 145.43 L698.91 145.32 L699.33 145.21 L699.75 145.11 L700.17 145 L700.59 144.9 L701.01 144.79 L701.43 144.69 L701.85 144.58 L702.27 144.48 L702.68 144.38 L703.1 144.27 L703.51 144.17 L703.93 144.07 L704.34 143.97 L704.76 143.87 L705.17 143.77 L705.58 143.67 L705.99 143.57 L706.4 143.47 L706.81 143.38 L707.22 143.28 L707.63 143.18 L708.03 143.09 L708.44 142.99 L708.85 142.9 L709.25 142.8 L709.66 142.71 L710.06 142.62 L710.46 142.52 L710.86 142.43 L711.27 142.34 L711.67 142.25 L712.07 142.16 L712.47 142.07 L712.86 141.98 L713.26 141.89 L713.66 141.8 L714.06 141.71 L714.45 141.63 L714.85 141.54 L715.24 141.45 L715.63 141.37 L716.03 141.28 L716.42 141.2 L716.81 141.11 L717.2 141.03 L717.59 140.95 L717.98 140.87 L718.36 140.78 L718.75 140.7 L719.14 140.62 L719.52 140.54 L719.91 140.46 L720.29 140.38 L720.67 140.31 L721.06 140.23 L721.44 140.15 L721.82 140.08 L722.2 140"/>
</g>
<g fill="none" stroke="#2cab7a" stroke-width="1.35" stroke-dasharray="1.4 2.3">
<path d="M520.7 303.5 L520.99 303.16 L521.28 302.82 L521.57 302.48 L521.86 302.14 L522.15 301.8 L522.45 301.46 L522.74 301.12 L523.04 300.78 L523.34 300.44 L523.64 300.1 L523.94 299.76 L524.24 299.42 L524.54 299.08 L524.85 298.74 L525.15 298.4 L525.46 298.06 L525.77 297.72 L526.08 297.38 L526.39 297.04 L526.7 296.7 L527.01 296.36 L527.32 296.02 L527.64 295.68 L527.96 295.35 L528.27 295.01 L528.59 294.67 L528.91 294.33 L529.24 293.99 L529.56 293.65 L529.88 293.31 L530.21 292.97 L530.53 292.63 L530.86 292.29 L531.19 291.95 L531.52 291.61 L531.85 291.28 L532.18 290.94 L532.52 290.6 L532.85 290.26 L533.19 289.92 L533.53 289.58 L533.86 289.24 L534.2 288.9 L534.54 288.57 L534.89 288.23 L535.23 287.89 L535.57 287.55 L535.92 287.21 L536.27 286.87 L536.62 286.54 L536.96 286.2 L537.31 285.86 L537.67 285.52 L538.02 285.18 L538.37 284.84 L538.73 284.51 L539.08 284.17 L539.44 283.83 L539.8 283.49 L540.16 283.16 L540.52 282.82 L540.88 282.48 L541.25 282.14 L541.61 281.8 L541.98 281.47 L542.34 281.13 L542.71 280.79 L543.08 280.46 L543.45 280.12 L543.82 279.78 L544.19 279.44 L544.57 279.11 L544.94 278.77 L545.32 278.43 L545.7 278.1 L546.07 277.76 L546.45 277.42 L546.83 277.09 L547.22 276.75 L547.6 276.41 L547.98 276.08 L548.37 275.74 L548.75 275.4 L549.14 275.07 L549.53 274.73 L549.92 274.4 L550.31 274.06 L550.7 273.72 L551.09 273.39 L551.49 273.05 L551.88 272.72 L552.28 272.38 L552.67 272.04 L553.07 271.71 L553.47 271.37 L553.87 271.04 L554.27 270.7 L554.68 270.37 L555.08 270.03 L555.48 269.7 L555.89 269.36 L556.3 269.03 L556.71 268.69 L557.11 268.36 L557.52 268.02 L557.94 267.69 L558.35 267.36 L558.76 267.02 L559.18 266.69 L559.59 266.35 L560.01 266.02 L560.42 265.68 L560.84 265.35 L561.26 265.02 L561.68 264.68 L562.1 264.35 L562.53 264.02 L562.95 263.68 L563.38 263.35 L563.8 263.02 L564.23 262.68 L564.66 262.35 L565.09 262.02 L565.52 261.68 L565.95 261.35 L566.38 261.02 L566.81 260.68 L567.24 260.35 L567.68 260.02 L568.12 259.69 L568.55 259.36 L568.99 259.02 L569.43 258.69 L569.87 258.36 L570.31 258.03 L570.75 257.7 L571.19 257.36 L571.64 257.03 L572.08 256.7 L572.53 256.37 L572.98 256.04 L573.42 255.71 L573.87 255.38 L574.32 255.05 L574.77 254.72 L575.22 254.38 L575.68 254.05 L576.13 253.72 L576.58 253.39 L577.04 253.06 L577.5 252.73 L577.95 252.4 L578.41 252.07 L578.87 251.74 L579.33 251.41 L579.79 251.08 L580.25 250.76 L580.72 250.43 L581.18 250.1 L581.64 249.77 L582.11 249.44 L582.58 249.11 L583.04 248.78 L583.51 248.45 L583.98 248.13 L584.45 247.8 L584.92 247.47 L585.39 247.14 L585.87 246.81 L586.34 246.49 L586.82 246.16 L587.29 245.83 L587.77 245.5 L588.24 245.18 L588.72 244.85 L589.2 244.52 L589.68 244.2 L590.16 243.87 L590.64 243.54 L591.13 243.22 L591.61 242.89 L592.09 242.56 L592.58 242.24 L593.06 241.91 L593.55 241.59 L594.04 241.26 L594.53 240.94 L595.01 240.61 L595.5 240.29 L595.99 239.96 L596.49 239.64 L596.98 239.31 L597.47 238.99 L597.97 238.66 L598.46 238.34 L598.96 238.01 L599.45 237.69 L599.95 237.37 L600.45 237.04 L600.95 236.72 L601.44 236.4 L601.94 236.07 L602.45 235.75 L602.95 235.43 L603.45 235.11 L603.95 234.78 L604.46 234.46 L604.96 234.14 L605.47 233.82 L605.97 233.5 L606.48 233.17 L606.99 232.85 L607.5 232.53 L608.01 232.21 L608.52 231.89 L609.03 231.57 L609.54 231.25 L610.05 230.93 L610.56 230.61 L611.08 230.29 L611.59 229.97 L612.11 229.65 L612.62 229.33 L613.14 229.01 L613.66 228.69 L614.17 228.37 L614.69 228.05 L615.21 227.74 L615.73 227.42 L616.25 227.1 L616.77 226.78 L617.29 226.46 L617.82 226.15 L618.34 225.83 L618.86 225.51 L619.39 225.19 L619.91 224.88 L620.44 224.56 L620.97 224.24 L621.49 223.93 L622.02 223.61 L622.55 223.3 L623.08 222.98 L623.61 222.67 L624.14 222.35 L624.67 222.04 L625.2 221.72 L625.73 221.41 L626.27 221.09 L626.8 220.78 L627.33 220.46 L627.87 220.15 L628.4 219.84 L628.94 219.52 L629.47 219.21 L630.01 218.9 L630.55 218.59 L631.09 218.27 L631.62 217.96 L632.16 217.65 L632.7 217.34 L633.24 217.03 L633.78 216.72 L634.32 216.4 L634.87 216.09 L635.41 215.78 L635.95 215.47 L636.49 215.16 L637.04 214.85 L637.58 214.54 L638.13 214.23 L638.67 213.93 L639.22 213.62 L639.76 213.31 L640.31 213 L640.86 212.69 L641.41 212.38 L641.95 212.08 L642.5 211.77 L643.05 211.46 L643.6 211.15 L644.15 210.85 L644.7 210.54 L645.25 210.24 L645.81 209.93 L646.36 209.62 L646.91 209.32 L647.46 209.01 L648.02 208.71 L648.57 208.41 L649.12 208.1 L649.68 207.8 L650.23 207.49 L650.79 207.19 L651.34 206.89 L651.9 206.58 L652.46 206.28 L653.01 205.98 L653.57 205.68 L654.13 205.38 L654.69 205.07 L655.25 204.77 L655.8 204.47 L656.36 204.17 L656.92 203.87 L657.48 203.57 L658.04 203.27 L658.6 202.97 L659.17 202.67 L659.73 202.38 L660.29 202.08 L660.85 201.78 L661.41 201.48 L661.98 201.18 L662.54 200.89 L663.1 200.59 L663.67 200.29 L664.23 200 L664.79 199.7 L665.36 199.41 L665.92 199.11 L666.49 198.82 L667.05 198.52 L667.62 198.23 L668.18 197.93 L668.75 197.64 L669.32 197.35 L669.88 197.05 L670.45 196.76 L671.02 196.47 L671.58 196.18 L672.15 195.88 L672.72 195.59 L673.29 195.3 L673.86 195.01 L674.43 194.72 L674.99 194.43 L675.56 194.14 L676.13 193.85 L676.7 193.56 L677.27 193.27 L677.84 192.99 L678.41 192.7 L678.98 192.41 L679.55 192.12 L680.12 191.84 L680.69 191.55 L681.26 191.27 L681.83 190.98 L682.4 190.69 L682.97 190.41 L683.55 190.13 L684.12 189.84 L684.69 189.56 L685.26 189.27 L685.83 188.99 L686.4 188.71 L686.98 188.43 L687.55 188.15 L688.12 187.86 L688.69 187.58 L689.26 187.3 L689.84 187.02 L690.41 186.74 L690.98 186.46 L691.55 186.19 L692.13 185.91 L692.7 185.63 L693.27 185.35 L693.85 185.07 L694.42 184.8 L694.99 184.52 L695.56 184.25 L696.14 183.97 L696.71 183.7 L697.28 183.42 L697.86 183.15 L698.43 182.87 L699 182.6 L699.57 182.33 L700.15 182.06 L700.72 181.78 L701.29 181.51 L701.87 181.24 L702.44 180.97 L703.01 180.7 L703.58 180.43 L704.16 180.16 L704.73 179.89 L705.3 179.63 L705.88 179.36 L706.45 179.09 L707.02 178.82 L707.59 178.56 L708.16 178.29 L708.74 178.03 L709.31 177.76 L709.88 177.5 L710.45 177.23 L711.02 176.97 L711.6 176.71 L712.17 176.45 L712.74 176.18 L713.31 175.92 L713.88 175.66 L714.45 175.4 L715.02 175.14 L715.59 174.88 L716.16 174.62 L716.73 174.37 L717.3 174.11 L717.87 173.85 L718.44 173.6 L719.01 173.34 L719.58 173.08 L720.15 172.83 L720.72 172.58 L721.29 172.32 L721.86 172.07 L722.43 171.82 L723 171.56 L723.56 171.31 L724.13 171.06 L724.7 170.81 L725.27 170.56 L725.83 170.31 L726.4 170.06 L726.97 169.82 L727.53 169.57 L728.1 169.32 L728.66 169.07 L729.23 168.83 L729.79 168.58 L730.36 168.34 L730.92 168.1 L731.49 167.85 L732.05 167.61 L732.62 167.37 L733.18 167.13 L733.74 166.89 L734.3 166.65 L734.87 166.41 L735.43 166.17 L735.99 165.93 L736.55 165.69 L737.11 165.45 L737.67 165.22 L738.23 164.98 L738.79 164.75 L739.35 164.51 L739.91 164.28 L740.47 164.05 L741.03 163.81 L741.59 163.58 L742.14 163.35 L742.7 163.12 L743.26 162.89 L743.81 162.66 L744.37 162.43 L744.92 162.21 L745.48 161.98 L746.03 161.75 L746.59 161.53 L747.14 161.3 L747.7 161.08 L748.25 160.85 L748.8 160.63 L749.35 160.41 L749.9 160.19 L750.45 159.97 L751 159.75 L751.55 159.53 L752.1 159.31 L752.65 159.09 L753.2 158.88 L753.75 158.66 L754.3 158.45 L754.84 158.23 L755.39 158.02 L755.94 157.8 L756.48 157.59 L757.03 157.38 L757.57 157.17 L758.11 156.96 L758.66 156.75 L759.2 156.54 L759.74 156.34 L760.28 156.13 L760.83 155.92 L761.37 155.72 L761.91 155.51 L762.44 155.31 L762.98 155.11 L763.52 154.91 L764.06 154.7 L764.6 154.5 L765.13 154.31 L765.67 154.11 L766.2 153.91 L766.74 153.71 L767.27 153.52 L767.81 153.32 L768.34 153.13 L768.87 152.93 L769.4 152.74 L769.93 152.55 L770.46 152.36 L770.99 152.17 L771.52 151.98 L772.05 151.79 L772.58 151.6 L773.1 151.42 L773.63 151.23 L774.16 151.05 L774.68 150.86 L775.2 150.68 L775.73 150.5 L776.25 150.32 L776.77 150.14 L777.29 149.96 L777.82 149.78 L778.34 149.61 L778.86 149.43 L779.37 149.25 L779.89 149.08 L780.41 148.91 L780.93 148.73 L781.44 148.56 L781.96 148.39 L782.47 148.22 L782.99 148.05 L783.5 147.89 L784.01 147.72 L784.52 147.55 L785.03 147.39 L785.54 147.23 L786.05 147.06 L786.56 146.9 L787.07 146.74 L787.58 146.58 L788.08 146.42 L788.59 146.27 L789.09 146.11 L789.6 145.95 L790.1 145.8 L790.6 145.65 L791.1 145.49 L791.61 145.34 L792.11 145.19 L792.6 145.04 L793.1 144.89 L793.6 144.75 L794.1 144.6 L794.59 144.46 L795.09 144.31 L795.59 144.17 L796.08 144.03 L796.57 143.89 L797.06 143.75 L797.56 143.61 L798.05 143.47 L798.54 143.33 L799.03 143.2 L799.51 143.07 L800 142.93 L800.49 142.8 L800.98 142.67 L801.46 142.54 L801.95 142.41 L802.43 142.28 L802.91 142.16 L803.39 142.03 L803.87 141.91 L804.35 141.79 L804.83 141.66 L805.31 141.54 L805.79 141.42 L806.27 141.31 L806.74 141.19 L807.22 141.07 L807.69 140.96 L808.17 140.85 L808.64 140.73 L809.11 140.62 L809.59 140.51 L810.06 140.4 L810.53 140.3 L810.99 140.19 L811.46 140.08 L811.93 139.98 L812.4 139.88 L812.86 139.78 L813.33 139.68 L813.79 139.58 L814.25 139.48 L814.72 139.38 L815.18 139.29 L815.64 139.19 L816.1 139.1"/>
</g>
<g fill="none" stroke="#8c8c8c" stroke-width="1.2" stroke-linecap="butt">
<path d="M828.9 66.7 L830.92 66.4 L832.83 66.15 L834.66 65.96 L836.38 65.83 L838.01 65.75 L839.55 65.73 L840.99 65.77 L842.34 65.87 L843.61 66.02 L844.8 66.23 L845.9 66.5"/>
<path d="M849.7 76.6 L850.66 76.4 L851.6 76.21 L852.53 76.03 L853.45 75.86 L854.37 75.7 L855.26 75.55 L856.15 75.42 L857.03 75.3 L857.9 75.19 L858.75 75.09 L859.6 75"/>
<path d="M843 81.8 L844.25 81.54 L845.48 81.29 L846.7 81.07 L847.89 80.86 L849.07 80.67 L850.24 80.49 L851.38 80.34 L852.51 80.2 L853.62 80.08 L854.72 79.98 L855.8 79.9"/>
<path d="M864.5 86.5 L864.88 87.51 L865.24 88.53 L865.6 89.57 L865.96 90.62 L866.31 91.68 L866.65 92.76 L866.99 93.84 L867.32 94.94 L867.65 96.05 L867.98 97.17 L868.3 98.3"/>
<path d="M873.3 88.7 L873.4 89.39 L873.51 90.08 L873.61 90.77 L873.71 91.47 L873.81 92.17 L873.91 92.87 L874.01 93.57 L874.11 94.27 L874.2 94.98 L874.3 95.69 L874.4 96.4"/>
<path d="M766 93.3 L768.91 92.43 L771.77 91.57 L774.6 90.74 L777.39 89.94 L780.13 89.15 L782.83 88.39 L785.48 87.66 L788.09 86.95 L790.64 86.27 L793.15 85.62 L795.6 85"/>
<path d="M787.8 136.7 L789.86 136.27 L791.91 135.87 L793.93 135.49 L795.93 135.13 L797.92 134.8 L799.88 134.49 L801.82 134.2 L803.75 133.94 L805.65 133.7 L807.53 133.49 L809.4 133.3"/>
<path d="M829 136 L829.47 136.87 L829.93 137.75 L830.39 138.64 L830.85 139.54 L831.3 140.44 L831.76 141.35 L832.21 142.27 L832.66 143.19 L833.11 144.12 L833.55 145.06 L834 146"/>
<path d="M816.5 151.3 L817.29 151.61 L818.07 151.93 L818.86 152.26 L819.63 152.6 L820.41 152.93 L821.18 153.28 L821.95 153.63 L822.72 153.99 L823.48 154.35 L824.24 154.72 L825 155.1"/>
<path d="M791.7 157.3 L793.43 157.89 L795.14 158.51 L796.83 159.15 L798.5 159.83 L800.16 160.53 L801.8 161.26 L803.43 162.02 L805.04 162.8 L806.64 163.61 L808.22 164.44 L809.8 165.3"/>
<path d="M697.2 150.6 L699.47 149.75 L701.73 148.9 L703.98 148.07 L706.23 147.24 L708.46 146.42 L710.69 145.61 L712.91 144.81 L715.12 144.02 L717.33 143.24 L719.52 142.46 L721.7 141.7"/>
<path d="M688.3 149.4 L689.54 149.04 L690.78 148.68 L692.01 148.32 L693.24 147.97 L694.46 147.62 L695.68 147.27 L696.89 146.93 L698.1 146.59 L699.31 146.26 L700.51 145.93 L701.7 145.6"/>
<path d="M662.4 165.3 L663.22 165.37 L664.04 165.44 L664.85 165.51 L665.66 165.6 L666.45 165.68 L667.24 165.77 L668.03 165.87 L668.81 165.97 L669.58 166.07 L670.34 166.18 L671.1 166.3"/>
<path d="M705 190.6 L706.13 190.32 L707.26 190.04 L708.39 189.77 L709.51 189.5 L710.63 189.23 L711.75 188.96 L712.87 188.7 L713.98 188.45 L715.09 188.19 L716.2 187.95 L717.3 187.7"/>
<path d="M659.5 194.9 L660.87 195.23 L662.24 195.57 L663.59 195.93 L664.92 196.29 L666.25 196.67 L667.57 197.07 L668.88 197.47 L670.17 197.88 L671.46 198.31 L672.73 198.75 L674 199.2"/>
<path d="M763.5 201.3 L763.94 201.85 L764.37 202.41 L764.81 202.97 L765.24 203.53 L765.68 204.09 L766.12 204.65 L766.55 205.22 L766.99 205.78 L767.43 206.35 L767.86 206.93 L768.3 207.5"/>
<path d="M752 255.3 L752.33 255.66 L752.67 256.02 L753 256.39 L753.34 256.75 L753.67 257.11 L754.01 257.48 L754.35 257.84 L754.69 258.2 L755.02 258.57 L755.36 258.93 L755.7 259.3"/>
</g>
<g fill="none" stroke="#2f79a2" stroke-width="1.6">
<path d="M865.7 74.3 L866.66 74.97 L867.59 75.68 L868.5 76.43 L869.38 77.22 L870.23 78.05 L871.07 78.91 L871.89 79.81 L872.69 80.74 L873.47 81.7 L874.24 82.69 L875 83.7"/>
<path d="M894.5 117.2 L894.82 117.79 L895.14 118.39 L895.45 118.99 L895.77 119.58 L896.09 120.18 L896.41 120.78 L896.73 121.38 L897.05 121.99 L897.36 122.59 L897.68 123.19 L898 123.8"/>
<path d="M722.2 140 L723.6 139.76 L724.98 139.52 L726.35 139.29 L727.71 139.08 L729.06 138.87 L730.4 138.67 L731.72 138.47 L733.03 138.29 L734.33 138.12 L735.62 137.96 L736.9 137.8"/>
</g>
<g fill="#f0644b">
<rect x="873.8" y="82.5" width="2.4" height="2.4"/>
<rect x="896.8" y="122.6" width="2.4" height="2.4"/>
<rect x="735.7" y="136.6" width="2.4" height="2.4"/>
</g>
<g fill="none" stroke="#2cab7a" stroke-width="1.6">
<path d="M816.1 139.1 L817.29 138.84 L818.47 138.59 L819.65 138.35 L820.83 138.11 L822 137.88 L823.16 137.67 L824.32 137.46 L825.47 137.25 L826.62 137.06 L827.76 136.88 L828.9 136.7"/>
</g>
<g fill="#f0644b">
<rect x="827.7" y="135.5" width="2.4" height="2.4"/>
</g>
<path d="M469.97 222.09 L469.32 222.1 L468.65 222.12 L467.95 222.17 L467.23 222.23 L466.49 222.31 L465.73 222.41 L464.95 222.52 L464.15 222.65 L463.32 222.8 L462.48 222.97 L461.63 223.16 L460.75 223.36 L459.86 223.57 L458.95 223.81 L458.03 224.06 L457.09 224.33 L456.14 224.61 L455.17 224.91 L454.2 225.22 L453.21 225.55 L452.22 225.89 L451.22 226.25 L450.2 226.62 L449.19 227.01 L448.16 227.41 L447.13 227.83 L446.1 228.25 L445.06 228.69 L444.02 229.15 L442.98 229.61 L441.94 230.09 L440.91 230.57 L439.87 231.07 L438.84 231.58 L437.81 232.1 L436.78 232.63 L435.76 233.17 L434.75 233.71 L433.75 234.27 L432.75 234.83 L431.76 235.4 L430.79 235.98 L429.82 236.57 L428.87 237.16 L427.93 237.76 L427 238.36 L426.09 238.97 L425.2 239.59 L424.32 240.2 L423.46 240.83 L422.61 241.45 L421.78 242.08 L420.98 242.71 L420.19 243.34 L419.42 243.98 L418.67 244.62 L417.94 245.25 L417.24 245.89 L416.56 246.53 L415.9 247.16 L415.26 247.8 L414.65 248.43 L414.06 249.07 L413.49 249.7 L412.95 250.32 L412.44 250.95 L411.95 251.57 L411.48 252.19 L411.04 252.8 L410.63 253.41 L410.24 254.02 L409.88 254.62 L409.54 255.21 L409.23 255.79 L408.95 256.38 L408.69 256.95 L408.46 257.51 L408.25 258.07 L408.07 258.62 L407.92 259.17 L407.79 259.7 L407.69 260.22 L407.62 260.74 L407.56 261.24 L407.54 261.74 L407.54 262.23 L407.56 262.7 L407.61 263.16 L407.68 263.62 L407.78 264.06 L407.9 264.49 L408.04 264.91 L408.21 265.31 L408.4 265.7 L408.61 266.08 L408.84 266.45 L409.1 266.81 L409.37 267.15 L409.67 267.47 L409.98 267.79 L410.32 268.09 L410.68 268.37 L411.05 268.64 L411.45 268.9 L411.86 269.14 L412.29 269.36 L412.74 269.58 L413.2 269.77 L413.68 269.95 L414.18 270.12 L414.69 270.27 L415.21 270.4 L415.76 270.52 L416.31 270.63 L416.88 270.71 L417.46 270.78 L418.06 270.84 L418.67 270.88 L419.29 270.9 L419.92 270.91 L420.56 270.9 L421.22 270.88 L421.88 270.84 L422.55 270.78 L423.24 270.71 L423.93 270.63 L424.63 270.52 L425.34 270.4 L426.06 270.27 L426.78 270.12 L427.51 269.95 L428.25 269.77 L428.99 269.58 L429.74 269.36 L430.5 269.14 L431.26 268.9 L432.02 268.64 L432.79 268.37 L433.57 268.09 L434.35 267.79 L435.13 267.47 L435.91 267.15 L436.7 266.81 L437.49 266.45 L438.28 266.08 L439.07 265.7 L439.87 265.31 L440.66 264.91 L441.46 264.49 L442.26 264.06 L443.06 263.62 L443.85 263.16 L444.65 262.7 L445.45 262.23 L446.24 261.74 L447.03 261.24 L447.82 260.74 L448.61 260.22 L449.4 259.7 L450.18 259.17 L450.97 258.62 L451.74 258.07 L452.52 257.51 L453.29 256.95 L454.05 256.38 L454.81 255.79 L455.57 255.21 L456.32 254.62 L457.06 254.02 L457.8 253.41 L458.53 252.8 L459.25 252.19 L459.97 251.57 L460.68 250.95 L461.38 250.32 L462.07 249.7 L462.75 249.07 L463.43 248.43 L464.09 247.8 L464.75 247.16 L465.39 246.53 L466.02 245.89 L466.64 245.25 L467.25 244.62 L467.85 243.98 L468.43 243.34 L469 242.71 L469.56 242.08 L470.1 241.45 L470.63 240.83 L471.15 240.2 L471.65 239.59 L472.13 238.97 L472.6 238.36 L473.04 237.76 L473.48 237.16 L473.89 236.57 L474.29 235.98 L474.67 235.4 L475.03 234.83 L475.36 234.27 L475.68 233.71 L475.98 233.17 L476.26 232.63 L476.52 232.1 L476.75 231.58 L476.97 231.07 L477.16 230.57 L477.33 230.09 L477.47 229.61 L477.59 229.15 L477.69 228.69 L477.77 228.25 L477.82 227.83 L477.84 227.41 L477.84 227.01 L477.81 226.62 L477.76 226.25 L477.68 225.89 L477.58 225.55 L477.45 225.22 L477.29 224.91 L477.11 224.61 L476.9 224.33 L476.67 224.06 L476.4 223.81 L476.12 223.57 L475.8 223.36 L475.46 223.16 L475.09 222.97 L474.69 222.8 L474.27 222.65 L473.82 222.52 L473.35 222.41 L472.85 222.31 L472.32 222.23 L471.77 222.17 L471.19 222.12 L470.59 222.1 L469.97 222.09" fill="none" stroke="#2f79a2" stroke-width="2.1"/>
<path d="M541.11 290.19 L540.47 290.2 L539.82 290.22 L539.17 290.26 L538.52 290.32 L537.86 290.4 L537.2 290.49 L536.54 290.6 L535.88 290.73 L535.21 290.87 L534.55 291.03 L533.88 291.2 L533.21 291.39 L532.55 291.6 L531.88 291.82 L531.22 292.06 L530.56 292.32 L529.9 292.59 L529.25 292.87 L528.6 293.17 L527.95 293.49 L527.32 293.81 L526.68 294.16 L526.05 294.51 L525.43 294.89 L524.82 295.27 L524.22 295.67 L523.62 296.08 L523.03 296.5 L522.46 296.94 L521.89 297.39 L521.34 297.85 L520.8 298.32 L520.27 298.8 L519.75 299.29 L519.24 299.79 L518.75 300.31 L518.28 300.83 L517.81 301.36 L517.37 301.9 L516.94 302.45 L516.52 303.01 L516.12 303.58 L515.74 304.15 L515.38 304.73 L515.03 305.32 L514.71 305.91 L514.4 306.51 L514.11 307.12 L513.84 307.73 L513.58 308.34 L513.35 308.96 L513.14 309.58 L512.95 310.21 L512.78 310.84 L512.63 311.47 L512.5 312.1 L512.39 312.74 L512.3 313.37 L512.23 314.01 L512.18 314.65 L512.16 315.28 L512.16 315.92 L512.17 316.56 L512.21 317.19 L512.27 317.82 L512.35 318.45 L512.45 319.08 L512.57 319.71 L512.71 320.33 L512.88 320.94 L513.06 321.56 L513.26 322.17 L513.48 322.77 L513.72 323.37 L513.98 323.96 L514.26 324.54 L514.56 325.12 L514.88 325.69 L515.21 326.26 L515.56 326.81 L515.93 327.36 L516.32 327.9 L516.72 328.43 L517.14 328.95 L517.57 329.46 L518.02 329.96 L518.48 330.46 L518.96 330.93 L519.45 331.4 L519.95 331.86 L520.46 332.31 L520.99 332.74 L521.53 333.16 L522.08 333.57 L522.64 333.96 L523.21 334.35 L523.78 334.72 L524.37 335.07 L524.97 335.41 L525.57 335.74 L526.18 336.05 L526.79 336.35 L527.41 336.63 L528.04 336.9 L528.67 337.15 L529.31 337.39 L529.95 337.61 L530.59 337.82 L531.23 338.01 L531.88 338.18 L532.53 338.34 L533.18 338.48 L533.83 338.6 L534.48 338.71 L535.13 338.8 L535.77 338.88 L536.42 338.94 L537.06 338.98 L537.71 339 L538.34 339.01 L538.98 339 L539.61 338.98 L540.24 338.94 L540.86 338.88 L541.48 338.8 L542.09 338.71 L542.7 338.6 L543.3 338.48 L543.9 338.34 L544.48 338.18 L545.06 338.01 L545.64 337.82 L546.2 337.61 L546.76 337.39 L547.31 337.15 L547.85 336.9 L548.38 336.63 L548.91 336.35 L549.42 336.05 L549.93 335.74 L550.42 335.41 L550.91 335.07 L551.38 334.72 L551.85 334.35 L552.31 333.96 L552.75 333.57 L553.19 333.16 L553.61 332.74 L554.02 332.31 L554.42 331.86 L554.81 331.4 L555.19 330.93 L555.56 330.46 L555.92 329.96 L556.26 329.46 L556.6 328.95 L556.92 328.43 L557.23 327.9 L557.53 327.36 L557.82 326.81 L558.09 326.26 L558.36 325.69 L558.61 325.12 L558.85 324.54 L559.07 323.96 L559.29 323.37 L559.49 322.77 L559.68 322.17 L559.86 321.56 L560.03 320.94 L560.18 320.33 L560.32 319.71 L560.45 319.08 L560.57 318.45 L560.67 317.82 L560.77 317.19 L560.85 316.56 L560.91 315.92 L560.97 315.28 L561.01 314.65 L561.04 314.01 L561.06 313.37 L561.06 312.74 L561.05 312.1 L561.03 311.47 L561 310.84 L560.95 310.21 L560.89 309.58 L560.82 308.96 L560.74 308.34 L560.64 307.73 L560.53 307.12 L560.41 306.51 L560.27 305.91 L560.12 305.32 L559.96 304.73 L559.79 304.15 L559.6 303.58 L559.4 303.01 L559.19 302.45 L558.97 301.9 L558.73 301.36 L558.48 300.83 L558.21 300.31 L557.94 299.79 L557.65 299.29 L557.35 298.8 L557.03 298.32 L556.71 297.85 L556.37 297.39 L556.02 296.94 L555.65 296.5 L555.28 296.08 L554.89 295.67 L554.49 295.27 L554.08 294.89 L553.66 294.51 L553.22 294.16 L552.77 293.81 L552.32 293.49 L551.85 293.17 L551.37 292.87 L550.87 292.59 L550.37 292.32 L549.86 292.06 L549.34 291.82 L548.81 291.6 L548.26 291.39 L547.71 291.2 L547.15 291.03 L546.58 290.87 L546 290.73 L545.42 290.6 L544.82 290.49 L544.22 290.4 L543.61 290.32 L542.99 290.26 L542.37 290.22 L541.74 290.2 L541.11 290.19" fill="none" stroke="#2cab7a" stroke-width="2.1"/>
<g font-family="Liberation Sans, sans-serif" font-size="10.8" fill="#ffffff" text-anchor="middle">
<text transform="translate(440.5 250) scale(0.9 1)">LEO</text>
<text transform="translate(536.5 318) scale(1.0 1)">AMO</text>
</g>
<g stroke="#ff0000" stroke-width="1.5">
<path d="M439.2 246.9 h6.4 M442.4 243.7 v6.4"/>
<path d="M517.5 303.5 h6.4 M520.7 300.3 v6.4"/>
</g>

<g fill="none" stroke="#808080" stroke-width="1.5" stroke-dasharray="2.08 3.44">
<path d="M74 641.8 V842.4"/>
<path d="M218 641.8 V842.4"/>
<path d="M365 641.8 V842.4"/>
<path d="M505 641.8 V842.4"/>
<path d="M650 641.8 V842.4"/>
<path d="M797 641.8 V842.4"/>
<path d="M940 641.8 V842.4"/>
<path d="M1091.2 641.8 V842.4"/>
<path d="M1238.8 641.8 V842.4"/>
<path d="M1393.85 641.8 V842.4"/>
<path d="M1548 641.8 V842.4"/>
<path d="M1687 641.8 V842.4"/>
</g>
<g font-family="Liberation Sans, sans-serif" font-size="30" fill="#555555">
<text transform="translate(149.5 642) rotate(-90) scale(0.8734 1)" text-anchor="end">APR</text>
<text transform="translate(294 644.5) rotate(-90) scale(0.9100 1)" text-anchor="end">MAY</text>
<text transform="translate(436 640.5) rotate(-90) scale(0.8537 1)" text-anchor="end">JUN</text>
<text transform="translate(576 641) rotate(-90) scale(0.7552 1)" text-anchor="end">JUL</text>
<text transform="translate(723.5 642) rotate(-90) scale(0.8732 1)" text-anchor="end">AUG</text>
<text transform="translate(872 643.5) rotate(-90) scale(0.8312 1)" text-anchor="end">SEP</text>
<text transform="translate(1016.5 643) rotate(-90) scale(0.9034 1)" text-anchor="end">OCT</text>
<text transform="translate(1168.5 644.5) rotate(-90) scale(0.9239 1)" text-anchor="end">NOV</text>
<text transform="translate(1318.5 645) rotate(-90) scale(0.8635 1)" text-anchor="end">DEC</text>
<text transform="translate(1468.5 640.5) rotate(-90) scale(0.8672 1)" text-anchor="end">JAN</text>
<text transform="translate(1628 645.5) rotate(-90) scale(0.8765 1)" text-anchor="end">FEB</text>
<text transform="translate(1766.5 645) rotate(-90) scale(0.8986 1)" text-anchor="end">MAR</text>
</g>
<path d="M1166.5 842.4 V641.3" stroke="#ff0000" stroke-width="1.45" stroke-dasharray="5.14 2.22" fill="none"/>
<g fill="#bddf26">
<rect x="106.2" y="832" width="22.6" height="4"/>
<rect x="165" y="832" width="180" height="4"/>
<rect x="366.2" y="832" width="258.8" height="4"/>
<rect x="635" y="832" width="150.8" height="4"/>
<rect x="807" y="832" width="91.8" height="4"/>
<rect x="920" y="832" width="52.8" height="4"/>
<rect x="984.2" y="832" width="81.6" height="4"/>
<rect x="1082" y="832" width="120.8" height="4"/>
<rect x="1244.2" y="832" width="81.6" height="4"/>
<rect x="1337.2" y="832" width="17.8" height="4"/>
<rect x="1381.2" y="832" width="62.6" height="4"/>
<rect x="1459.2" y="832" width="52.8" height="4"/>
<rect x="1523" y="832" width="24" height="4"/>
<rect x="1724.2" y="832" width="23.8" height="4"/>
<rect x="1758.3" y="832" width="24" height="4"/>
</g>
<g fill="#81d34d">
<rect x="165" y="815.67" width="23" height="4"/>
<rect x="223" y="815.67" width="62.8" height="4"/>
<rect x="312.2" y="815.67" width="27.8" height="4"/>
<rect x="366.2" y="815.67" width="125.8" height="4"/>
<rect x="508" y="815.67" width="145.8" height="4"/>
<rect x="704.2" y="815.67" width="32.8" height="4"/>
<rect x="773" y="815.67" width="72" height="4"/>
<rect x="871.2" y="815.67" width="116.8" height="4"/>
<rect x="1003" y="815.67" width="14" height="4"/>
<rect x="1062" y="815.67" width="151" height="4"/>
<rect x="1244.2" y="815.67" width="22.8" height="4"/>
<rect x="1293" y="815.67" width="23.2" height="4"/>
<rect x="1342" y="815.67" width="23" height="4"/>
<rect x="1386.2" y="815.67" width="42.6" height="4"/>
<rect x="1459.2" y="815.67" width="23.8" height="4"/>
<rect x="1548.3" y="815.67" width="22.5" height="4"/>
</g>
<g fill="#4ec36b">
<rect x="165" y="799.34" width="23" height="4"/>
<rect x="258" y="799.34" width="229" height="4"/>
<rect x="508" y="799.34" width="107" height="4"/>
<rect x="625.8" y="799.34" width="92.2" height="4"/>
<rect x="729.2" y="799.34" width="96.6" height="4"/>
<rect x="949.2" y="799.34" width="199.6" height="4"/>
<rect x="1160" y="799.34" width="88" height="4"/>
<rect x="1258" y="799.34" width="185.8" height="4"/>
<rect x="1459.2" y="799.34" width="23.8" height="4"/>
<rect x="1552.2" y="799.34" width="23.6" height="4"/>
</g>
<g fill="#2ab07f">
<rect x="193.8" y="783.01" width="24.2" height="4"/>
<rect x="320.8" y="783.01" width="186.2" height="4"/>
<rect x="518" y="783.01" width="23.2" height="4"/>
<rect x="557.2" y="783.01" width="125.6" height="4"/>
<rect x="807" y="783.01" width="24.2" height="4"/>
<rect x="954.2" y="783.01" width="18.6" height="4"/>
<rect x="988" y="783.01" width="137" height="4"/>
<rect x="1155" y="783.01" width="63" height="4"/>
<rect x="1244.2" y="783.01" width="22.8" height="4"/>
<rect x="1317" y="783.01" width="23.8" height="4"/>
<rect x="1396.2" y="783.01" width="22.6" height="4"/>
<rect x="1464.2" y="783.01" width="185.8" height="4"/>
</g>
<g fill="#1e9b8a">
<rect x="340.8" y="766.68" width="29.2" height="4"/>
<rect x="410" y="766.68" width="38" height="4"/>
<rect x="469.2" y="766.68" width="22.8" height="4"/>
<rect x="527" y="766.68" width="19.2" height="4"/>
<rect x="562" y="766.68" width="28" height="4"/>
<rect x="616.2" y="766.68" width="33" height="4"/>
<rect x="959.2" y="766.68" width="28.8" height="4"/>
<rect x="1062" y="766.68" width="23.8" height="4"/>
<rect x="1101.2" y="766.68" width="23.8" height="4"/>
<rect x="1160" y="766.68" width="33.8" height="4"/>
<rect x="1248.3" y="766.68" width="23.7" height="4"/>
<rect x="1425" y="766.68" width="87" height="4"/>
</g>
<g fill="#25858e">
<rect x="420" y="750.35" width="22.8" height="4"/>
<rect x="532" y="750.35" width="23.8" height="4"/>
<rect x="567" y="750.35" width="23" height="4"/>
<rect x="621.2" y="750.35" width="120.5" height="4"/>
<rect x="969.2" y="750.35" width="165.8" height="4"/>
<rect x="1185" y="750.35" width="161.2" height="4"/>
<rect x="1468.9" y="750.35" width="24.1" height="4"/>
</g>
<g fill="#2d708e">
<rect x="428.8" y="734.02" width="24.2" height="4"/>
<rect x="575.8" y="734.02" width="157.2" height="4"/>
<rect x="993" y="734.02" width="112" height="4"/>
<rect x="1116.2" y="734.02" width="106.6" height="4"/>
<rect x="1263" y="734.02" width="29" height="4"/>
<rect x="1488.9" y="734.02" width="23.1" height="4"/>
</g>
<g fill="#375a8c">
<rect x="590.8" y="717.69" width="24.2" height="4"/>
<rect x="655" y="717.69" width="117" height="4"/>
<rect x="1072" y="717.69" width="171" height="4"/>
<rect x="1263" y="717.69" width="24" height="4"/>
</g>
<g fill="#424086">
<rect x="596.2" y="701.36" width="136.8" height="4"/>
<rect x="1091.2" y="701.36" width="28.8" height="4"/>
<rect x="1199.2" y="701.36" width="23.6" height="4"/>
<rect x="1273" y="701.36" width="53.2" height="4"/>
</g>
<g fill="#482475">
<rect x="1111.2" y="685.03" width="23.8" height="4"/>
</g>
<g stroke="#ffffff" stroke-width="2" fill="none">
<path d="M113 834 h8 M117 830 v8"/>
<path d="M241 834 h8 M245 830 v8"/>
<path d="M511 834 h8 M515 830 v8"/>
<path d="M707.2 834 h8 M711.2 830 v8"/>
<path d="M832.7 834 h8 M836.7 830 v8"/>
<path d="M961.8 834 h8 M965.8 830 v8"/>
<path d="M985.7 834 h8 M989.7 830 v8"/>
<path d="M1115.5 834 h8 M1119.5 830 v8"/>
<path d="M1294.8 834 h8 M1298.8 830 v8"/>
<path d="M1341.8 834 h8 M1345.8 830 v8"/>
<path d="M1413 834 h8 M1417 830 v8"/>
<path d="M1481.8 834 h8 M1485.8 830 v8"/>
<path d="M1531 834 h8 M1535 830 v8"/>
<path d="M1731.8 834 h8 M1735.8 830 v8"/>
<path d="M1766.3 834 h8 M1770.3 830 v8"/>
<path d="M171.8 817.67 h8 M175.8 813.67 v8"/>
<path d="M256 817.67 h8 M260 813.67 v8"/>
<path d="M322.7 817.67 h8 M326.7 813.67 v8"/>
<path d="M436.8 817.67 h8 M440.8 813.67 v8"/>
<path d="M599 817.67 h8 M603 813.67 v8"/>
<path d="M716.8 817.67 h8 M720.8 813.67 v8"/>
<path d="M792.7 817.67 h8 M796.7 813.67 v8"/>
<path d="M938.8 817.67 h8 M942.8 813.67 v8"/>
<path d="M1006 817.67 h8 M1010 813.67 v8"/>
<path d="M1152.7 817.67 h8 M1156.7 813.67 v8"/>
<path d="M1251 817.67 h8 M1255 813.67 v8"/>
<path d="M1299.8 817.67 h8 M1303.8 813.67 v8"/>
<path d="M1348.8 817.67 h8 M1352.8 813.67 v8"/>
<path d="M1402.7 817.67 h8 M1406.7 813.67 v8"/>
<path d="M1466.8 817.67 h8 M1470.8 813.67 v8"/>
<path d="M1554.8 817.67 h8 M1558.8 813.67 v8"/>
<path d="M173.8 801.34 h8 M177.8 797.34 v8"/>
<path d="M377.7 801.34 h8 M381.7 797.34 v8"/>
<path d="M544.7 801.34 h8 M548.7 797.34 v8"/>
<path d="M681.8 801.34 h8 M685.8 797.34 v8"/>
<path d="M741 801.34 h8 M745 797.34 v8"/>
<path d="M1074.7 801.34 h8 M1078.7 797.34 v8"/>
<path d="M1216.8 801.34 h8 M1220.8 797.34 v8"/>
<path d="M1304.8 801.34 h8 M1308.8 797.34 v8"/>
<path d="M1466.8 801.34 h8 M1470.8 797.34 v8"/>
<path d="M1559.7 801.34 h8 M1563.7 797.34 v8"/>
<path d="M201.8 785.01 h8 M205.8 781.01 v8"/>
<path d="M399.7 785.01 h8 M403.7 781.01 v8"/>
<path d="M524.8 785.01 h8 M528.8 781.01 v8"/>
<path d="M639 785.01 h8 M643 781.01 v8"/>
<path d="M814.8 785.01 h8 M818.8 781.01 v8"/>
<path d="M958.8 785.01 h8 M962.8 781.01 v8"/>
<path d="M1040.2 785.01 h8 M1044.2 781.01 v8"/>
<path d="M1187.7 785.01 h8 M1191.7 781.01 v8"/>
<path d="M1251 785.01 h8 M1255 781.01 v8"/>
<path d="M1324.8 785.01 h8 M1328.8 781.01 v8"/>
<path d="M1402.7 785.01 h8 M1406.7 781.01 v8"/>
<path d="M1545.5 785.01 h8 M1549.5 781.01 v8"/>
<path d="M355.7 768.68 h8 M359.7 764.68 v8"/>
<path d="M426 768.68 h8 M430 764.68 v8"/>
<path d="M475.7 768.68 h8 M479.7 764.68 v8"/>
<path d="M534.8 768.68 h8 M538.8 764.68 v8"/>
<path d="M571 768.68 h8 M575 764.68 v8"/>
<path d="M630.7 768.68 h8 M634.7 764.68 v8"/>
<path d="M974 768.68 h8 M978 764.68 v8"/>
<path d="M1069.7 768.68 h8 M1073.7 764.68 v8"/>
<path d="M1108.8 768.68 h8 M1112.8 764.68 v8"/>
<path d="M1177.7 768.68 h8 M1181.7 764.68 v8"/>
<path d="M1256 768.68 h8 M1260 764.68 v8"/>
<path d="M1466.9 768.68 h8 M1470.9 764.68 v8"/>
<path d="M426.5 752.35 h8 M430.5 748.35 v8"/>
<path d="M539.8 752.35 h8 M543.8 748.35 v8"/>
<path d="M573.8 752.35 h8 M577.8 748.35 v8"/>
<path d="M704 752.35 h8 M708 748.35 v8"/>
<path d="M1093.5 752.35 h8 M1097.5 748.35 v8"/>
<path d="M1270.7 752.35 h8 M1274.7 748.35 v8"/>
<path d="M1476.9 752.35 h8 M1480.9 748.35 v8"/>
<path d="M436.8 736.02 h8 M440.8 732.02 v8"/>
<path d="M630.7 736.02 h8 M634.7 732.02 v8"/>
<path d="M1038.8 736.02 h8 M1042.8 732.02 v8"/>
<path d="M1167.7 736.02 h8 M1171.7 732.02 v8"/>
<path d="M1274.8 736.02 h8 M1278.8 732.02 v8"/>
<path d="M1496.9 736.02 h8 M1500.9 732.02 v8"/>
<path d="M598.8 719.69 h8 M602.8 715.69 v8"/>
<path d="M726.8 719.69 h8 M730.8 715.69 v8"/>
<path d="M1187.7 719.69 h8 M1191.7 715.69 v8"/>
<path d="M1270.7 719.69 h8 M1274.7 715.69 v8"/>
<path d="M686.8 703.36 h8 M690.8 699.36 v8"/>
<path d="M1101.8 703.36 h8 M1105.8 699.36 v8"/>
<path d="M1206.8 703.36 h8 M1210.8 699.36 v8"/>
<path d="M1299.7 703.36 h8 M1303.7 699.36 v8"/>
<path d="M1118.8 687.03 h8 M1122.8 683.03 v8"/>
</g>
<g font-family="Liberation Sans, sans-serif" font-size="10" fill="#ffffff" text-anchor="middle">
<text x="116.75" y="831.6">KSE</text>
<text x="254.4" y="831.6">ETA</text>
<text x="494.4" y="831.6">NZC</text>
<text x="710.1" y="831.6">NDA</text>
<text x="852.9" y="831.6">SPE</text>
<text x="946.1" y="831.6">ARD</text>
<text x="1024.75" y="831.6">EGE</text>
<text x="1142" y="831.6">NTA</text>
<text x="1284" y="831.6">MON</text>
<text x="1343.4" y="831.6">URS</text>
<text x="1412" y="831.6">AHY</text>
<text x="1486.3" y="831.6">GUM</text>
<text x="1535.5" y="831.6">OHY</text>
<text x="1735.8" y="831.6">XHE</text>
<text x="1769.3" y="831.6">EVI</text>
<text x="175.9" y="815.27">AVB</text>
<text x="254.25" y="815.27">ELY</text>
<text x="323.75" y="815.27">CAM</text>
<text x="431.9" y="815.27">SSG</text>
<text x="578.5" y="815.27">PCA</text>
<text x="720.9" y="815.27">AUD</text>
<text x="808.6" y="815.27">AUR</text>
<text x="931" y="815.27">DSX</text>
<text x="1009.75" y="815.27">OCU</text>
<text x="1137.9" y="815.27">OER</text>
<text x="1255" y="815.27">DKD</text>
<text x="1304.1" y="815.27">DSV</text>
<text x="1353.25" y="815.27">ALY</text>
<text x="1407.7" y="815.27">JLE</text>
<text x="1471.8" y="815.27">SCC</text>
<text x="1558.1" y="815.27">FEV</text>
<text x="176" y="798.94">LYR</text>
<text x="372.6" y="798.94">JMC</text>
<text x="558.75" y="798.94">JPE</text>
<text x="670.9" y="798.94">PAU</text>
<text x="773.5" y="798.94">NIA</text>
<text x="1049.4" y="798.94">STA</text>
<text x="1205.4" y="798.94">NOO</text>
<text x="1353.9" y="798.94">COM</text>
<text x="1470.8" y="798.94">NCC</text>
<text x="1563" y="798.94">FED</text>
<text x="205" y="782.61">HVI</text>
<text x="411.75" y="782.61">ARI</text>
<text x="529.75" y="782.61">SZC</text>
<text x="617.75" y="782.61">CAP</text>
<text x="818.1" y="782.61">NUE</text>
<text x="960.9" y="782.61">OCT</text>
<text x="1059.6" y="782.61">ORI</text>
<text x="1187.1" y="782.61">AMO</text>
<text x="1255.4" y="782.61">DPC</text>
<text x="1329.4" y="782.61">XVI</text>
<text x="1407.7" y="782.61">QUA</text>
<text x="1559.4" y="782.61">AAN</text>
<text x="353.4" y="766.28">TAH</text>
<text x="431.25" y="766.28">JEA</text>
<text x="480.25" y="766.28">JIP</text>
<text x="538.1" y="766.28">PPS</text>
<text x="578.4" y="766.28">ZCS</text>
<text x="633" y="766.28">GDR</text>
<text x="969.6" y="766.28">DRA</text>
<text x="1073.4" y="766.28">LUM</text>
<text x="1112.9" y="766.28">RPU</text>
<text x="1176.25" y="766.28">THA</text>
<text x="1259.4" y="766.28">PSU</text>
<text x="1470.6" y="766.28">XCB</text>
<text x="432.1" y="749.95">JRC</text>
<text x="544.1" y="749.95">CAN</text>
<text x="577.75" y="749.95">FAN</text>
<text x="681.1" y="749.95">PER</text>
<text x="1049" y="749.95">CTA</text>
<text x="1264.4" y="749.95">HYD</text>
<text x="1481" y="749.95">XUM</text>
<text x="441.5" y="733.62">COR</text>
<text x="656.9" y="733.62">SDA</text>
<text x="1049" y="733.62">LMI</text>
<text x="1166.1" y="733.62">LEO</text>
<text x="1274.6" y="733.62">EHY</text>
<text x="1499.7" y="733.62">ECV</text>
<text x="602.75" y="717.29">JXA</text>
<text x="714.75" y="717.29">KCG</text>
<text x="1157" y="717.29">AND</text>
<text x="1274.75" y="717.29">DAD</text>
<text x="666.4" y="700.96">ERI</text>
<text x="1107.75" y="700.96">SLD</text>
<text x="1211" y="700.96">ORS</text>
<text x="1299" y="700.96">GEM</text>
<text x="1122.4" y="684.63">KUM</text>
</g>
<rect x="19.5" y="641.3" width="1766" height="201.1" fill="none" stroke="#ffffff" stroke-width="1.11"/>
<g stroke="#ffffff" stroke-width="1.11">
<path d="M19.3 842.4 v4.9"/>
<path d="M264.62 842.4 v4.9"/>
<path d="M509.93 842.4 v4.9"/>
<path d="M755.24 842.4 v4.9"/>
<path d="M1000.56 842.4 v4.9"/>
<path d="M1245.88 842.4 v4.9"/>
<path d="M1491.19 842.4 v4.9"/>
<path d="M1736.5 842.4 v4.9"/>
</g>
<g font-family="Liberation Sans, sans-serif" font-size="13.9" fill="#ffffff" text-anchor="middle">
<text transform="translate(19.5 862) scale(1.15 1)">0</text>
<text transform="translate(264.81 862) scale(1.15 1)">50</text>
<text transform="translate(510.13 862) scale(1.15 1)">100</text>
<text transform="translate(755.44 862) scale(1.15 1)">150</text>
<text transform="translate(1000.76 862) scale(1.15 1)">200</text>
<text transform="translate(1246.08 862) scale(1.15 1)">250</text>
<text transform="translate(1491.39 862) scale(1.15 1)">300</text>
<text transform="translate(1736.7 862) scale(1.15 1)">350</text>
<text transform="translate(902.5 882) scale(1.14 1)">Solar longitude (deg)</text>
</g>
<g font-family="Liberation Mono, monospace" font-size="13.89" fill="#ffffff" xml:space="preserve">
<text x="315.5" y="29.9">ES000D</text>
<text x="315.5" y="43.2">Beg: 20251116 04:11:43 (sol = 233.70°)</text>
<text x="315.5" y="57">End: 20251116 05:46:02 (sol = 233.76°)</text>
<text x="315.5" y="68.5">--------------------------------------</text>
<text x="315.5" y="81.5">...: 17</text>
<text x="315.5" y="94.7">LEO: 3</text>
<text x="315.5" y="107.4">AMO: 1</text>
</g>
</svg></div></body></html>
